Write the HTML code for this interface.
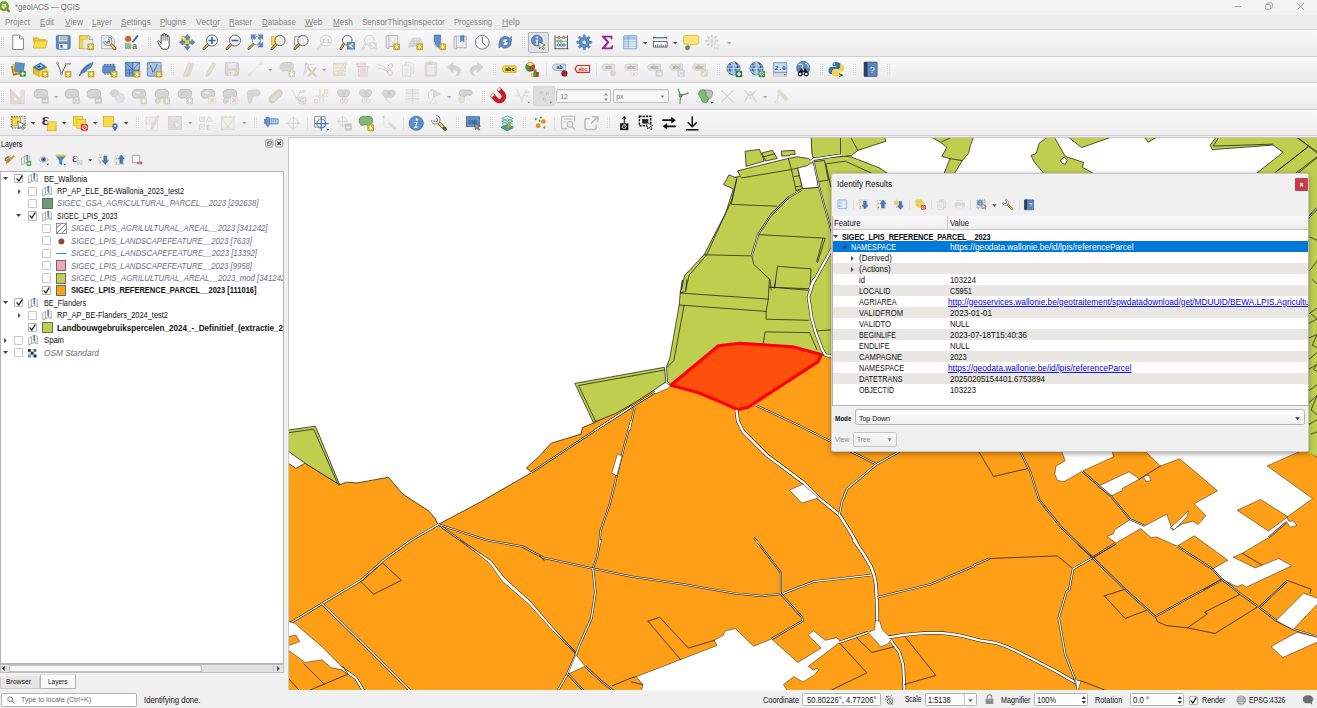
<!DOCTYPE html>
<html><head><meta charset="utf-8"><title>geoIACS — QGIS</title><style>html,body{margin:0;padding:0}body{width:1317px;height:708px;overflow:hidden;position:relative;font-family:"Liberation Sans", sans-serif;background:#f0f0f0}
body>div,body>svg,.t{position:absolute}svg{overflow:visible;display:block}
.t{white-space:pre;line-height:1;transform-origin:0 50%}.c{position:absolute;overflow:hidden;top:0;height:708px}.c .t{left:0!important}</style></head><body>
<div style="left:0px;top:0px;width:1317px;height:708px;background:#f0f0f0;"></div>
<div style="left:0px;top:0px;width:1317px;height:14.6px;background:#f3f3f3;"></div>
<div style="left:0px;top:14.6px;width:1317px;height:14.6px;background:#eeeeee;"></div>
<div style="left:0px;top:29.0px;width:1317px;height:0.7px;background:#d9d9d9;"></div>
<div style="left:0px;top:29.7px;width:1317px;height:26px;background:#f2f2f2;background:linear-gradient(#f9f9f9,#f4f4f4 40%,#ebebeb);"></div>
<div style="left:0px;top:56.4px;width:1317px;height:26px;background:#f2f2f2;background:linear-gradient(#f9f9f9,#f4f4f4 40%,#ebebeb);"></div>
<div style="left:0px;top:82.9px;width:1317px;height:26px;background:#f2f2f2;background:linear-gradient(#f9f9f9,#f4f4f4 40%,#ebebeb);"></div>
<div style="left:0px;top:109.5px;width:1317px;height:26px;background:#f2f2f2;background:linear-gradient(#f9f9f9,#f4f4f4 40%,#ebebeb);"></div>
<div style="left:0px;top:136px;width:1317px;height:1.4px;background:#efefef;"></div>
<svg style="left:-0.75px;top:1.45px" width="11.5" height="11.5" viewBox="0 0 24 24"><circle cx="10.500" cy="11" r="7.700" fill="#fdfdfd" stroke="#6aa32e" stroke-width="5.200"/><path d="M14 14.500l8 8" stroke="#5b962a" stroke-width="5"/><path d="M11 11.500l5.500 5.500" stroke="#86bd45" stroke-width="2.400"/><circle cx="9.600" cy="10" r="2.500" fill="#f39a1f"/><circle cx="11.600" cy="12.200" r="1.600" fill="#f3d23c"/></svg>
<span class="t" id="t10" style="left:14.6px;top:7.4px;font-size:8.6px;font-weight:normal;font-style:normal;color:#767676;transform:translateY(-50%) scaleX(0.8952);">*geoIACS — QGIS</span>
<svg style="left:1230px;top:0px;" width="80" height="14" viewBox="0 0 80 14"><path d="M4.500 6.600h7" stroke="#8a8a8a" stroke-width="0.800" fill="none"/><rect x="35.500" y="4.300" width="5" height="5" rx="1.100" fill="none" stroke="#8a8a8a" stroke-width="0.800"/><path d="M37.200 4.300v-0.600c0-.500.300-.800.800-.800h3.600c.500 0 .800.300.800.800v3.600c0 .500-.300.800-.800.800h-0.900" fill="none" stroke="#8a8a8a" stroke-width="0.700"/><path d="M67.300 3.300l6.400 6.400m0-6.400l-6.400 6.400" stroke="#8a8a8a" stroke-width="0.800" fill="none"/></svg>
<span class="t" id="t12" style="left:5px;top:22.1px;font-size:8.4px;font-weight:normal;font-style:normal;color:#858585;transform:translateY(-50%) scaleX(0.9575);">Pro<u>j</u>ect</span>
<span class="t" id="t13" style="left:40px;top:22.1px;font-size:8.4px;font-weight:normal;font-style:normal;color:#858585;transform:translateY(-50%) scaleX(0.9686);"><u>E</u>dit</span>
<span class="t" id="t14" style="left:64.5px;top:22.1px;font-size:8.4px;font-weight:normal;font-style:normal;color:#858585;transform:translateY(-50%) scaleX(0.9991);"><u>V</u>iew</span>
<span class="t" id="t15" style="left:91.5px;top:22.1px;font-size:8.4px;font-weight:normal;font-style:normal;color:#858585;transform:translateY(-50%) scaleX(0.9443);"><u>L</u>ayer</span>
<span class="t" id="t16" style="left:120.5px;top:22.1px;font-size:8.4px;font-weight:normal;font-style:normal;color:#858585;transform:translateY(-50%) scaleX(0.9841);"><u>S</u>ettings</span>
<span class="t" id="t17" style="left:160px;top:22.1px;font-size:8.4px;font-weight:normal;font-style:normal;color:#858585;transform:translateY(-50%) scaleX(0.9460);"><u>P</u>lugins</span>
<span class="t" id="t18" style="left:196px;top:22.1px;font-size:8.4px;font-weight:normal;font-style:normal;color:#858585;transform:translateY(-50%) scaleX(1.0099);">Vect<u>o</u>r</span>
<span class="t" id="t19" style="left:229px;top:22.1px;font-size:8.4px;font-weight:normal;font-style:normal;color:#858585;transform:translateY(-50%) scaleX(0.9316);"><u>R</u>aster</span>
<span class="t" id="t20" style="left:261.8px;top:22.1px;font-size:8.4px;font-weight:normal;font-style:normal;color:#858585;transform:translateY(-50%) scaleX(0.9477);"><u>D</u>atabase</span>
<span class="t" id="t21" style="left:305.3px;top:22.1px;font-size:8.4px;font-weight:normal;font-style:normal;color:#858585;transform:translateY(-50%) scaleX(1.0355);"><u>W</u>eb</span>
<span class="t" id="t22" style="left:332.5px;top:22.1px;font-size:8.4px;font-weight:normal;font-style:normal;color:#858585;transform:translateY(-50%) scaleX(0.9659);"><u>M</u>esh</span>
<span class="t" id="t23" style="left:361.5px;top:22.1px;font-size:8.4px;font-weight:normal;font-style:normal;color:#858585;transform:translateY(-50%) scaleX(0.9614);">SensorThingsInspector</span>
<span class="t" id="t24" style="left:454px;top:22.1px;font-size:8.4px;font-weight:normal;font-style:normal;color:#858585;transform:translateY(-50%) scaleX(0.9167);">Pro<u>c</u>essing</span>
<span class="t" id="t25" style="left:502.3px;top:22.1px;font-size:8.4px;font-weight:normal;font-style:normal;color:#858585;transform:translateY(-50%) scaleX(1.0261);"><u>H</u>elp</span>
<div style="left:0px;top:55.7px;width:1317px;height:0.8px;background:#cdcdcd;"></div>
<div style="left:0px;top:82.2px;width:1317px;height:0.8px;background:#cdcdcd;"></div>
<div style="left:0px;top:108.8px;width:1317px;height:0.8px;background:#cdcdcd;"></div>
<div style="left:0px;top:135.2px;width:1317px;height:0.8px;background:#cdcdcd;"></div>
<svg style="left:1px;top:37px;" width="4" height="12" viewBox="0 0 4 12"><rect x="0" y="0" width="1" height="1" fill="#d5d5d5"/><rect x="0" y="2" width="1" height="1" fill="#d5d5d5"/><rect x="0" y="4" width="1" height="1" fill="#d5d5d5"/><rect x="0" y="6" width="1" height="1" fill="#d5d5d5"/><rect x="0" y="8" width="1" height="1" fill="#d5d5d5"/><rect x="0" y="10" width="1" height="1" fill="#d5d5d5"/><rect x="2" y="0" width="1" height="1" fill="#d5d5d5"/><rect x="2" y="2" width="1" height="1" fill="#d5d5d5"/><rect x="2" y="4" width="1" height="1" fill="#d5d5d5"/><rect x="2" y="6" width="1" height="1" fill="#d5d5d5"/><rect x="2" y="8" width="1" height="1" fill="#d5d5d5"/><rect x="2" y="10" width="1" height="1" fill="#d5d5d5"/></svg>
<svg style="left:9.65px;top:34.45px" width="16.5" height="16.5" viewBox="0 0 24 24"><path d="M4 1.5h10l5.5 5.500v15.500h-15.500z" fill="#fff" stroke="#6e6e6e" stroke-width="1.2" stroke-linejoin="round"/><path d="M14 1.5v5.5h5.5" fill="#e8e8e8" stroke="#6e6e6e" stroke-width="1.1" stroke-linejoin="round"/></svg>
<svg style="left:31.95px;top:34.45px" width="16.5" height="16.5" viewBox="0 0 24 24"><path d="M2 5.5h7l2 2.5h9v3h-18z" fill="#e9c63a" stroke="#c8a415" stroke-width="0.9" stroke-linejoin="round"/><path d="M1.5 20.5l3-10.5h18l-3.2 10.5z" fill="#f7dc4a" stroke="#c8a415" stroke-width="0.9" stroke-linejoin="round"/></svg>
<svg style="left:54.75px;top:34.45px" width="16.5" height="16.5" viewBox="0 0 24 24"><rect x="2" y="2" width="20" height="20" rx="2" fill="#5d8fca" stroke="#33609c" stroke-width="1"/><rect x="5.5" y="3" width="13" height="8" fill="#d9d9d9" stroke="#8d8d8d" stroke-width="0.6"/><path d="M7 5.5h10M7 8h10" stroke="#8d8d8d" stroke-width="0.9"/><rect x="6" y="14.5" width="12" height="7" fill="#eef1f5"/><rect x="8" y="16" width="3" height="4" fill="#33609c"/></svg>
<svg style="left:77.55px;top:34.45px" width="16.5" height="16.5" viewBox="0 0 24 24"><path d="M2 2.500h14l5.500 5.500v13.500h-19.500z" fill="#fdfdfd" stroke="#8a8a8a" stroke-width="1" stroke-linejoin="round"/><rect x="8" y="8" width="11" height="12" fill="#dfe9f8"/><path d="M16 2.500v5.500h5.500" fill="#e4e4e4" stroke="#8a8a8a" stroke-width="0.900"/><rect x="2.500" y="3" width="4.800" height="18" fill="#f7dc4a" stroke="#c8a415" stroke-width="0.600"/><rect x="2.500" y="3" width="11.500" height="4.800" fill="#f7dc4a" stroke="#c8a415" stroke-width="0.600"/><path d="M3.500 10h2M3.500 13h2M3.500 16h2M3.500 19h2" stroke="#c8a415" stroke-width="0.600"/><rect x="13.7" y="13.9" width="9.6" height="9.6" rx="1.7" fill="#c9a20c"/><path d="M18.5 15.399999999999999v6.6M15.7 16.8l5.6 3.8M21.3 16.8l-5.6 3.8" stroke="#fff" stroke-width="1.15" stroke-linecap="round"/><circle cx="18.5" cy="18.7" r="1.3" fill="#fff"/></svg>
<svg style="left:100.35px;top:34.45px" width="16.5" height="16.5" viewBox="0 0 24 24"><path d="M2.500 2.500h13l5.500 5.500v13.500h-18.500z" fill="#fbfbfb" stroke="#8a8a8a" stroke-width="1" stroke-linejoin="round"/><rect x="4.500" y="4.500" width="12" height="13" fill="#dfe9f8" stroke="#b4c8e6" stroke-width="0.600"/><path d="M13 12L21.500 21" stroke="#4a3a12" stroke-width="4.600" stroke-linecap="round"/><path d="M13 12L21.500 21" stroke="#e8c55a" stroke-width="3" stroke-linecap="round"/><g transform="translate(4.500 3.500)"><path d="M7.390 2.520A4.500 4.500 0 1 1 2.520 7.390" fill="none" stroke="#4a4a4a" stroke-width="3.800"/><path d="M7.390 2.520A4.500 4.500 0 1 1 2.520 7.390" fill="none" stroke="#e2e2e2" stroke-width="2.400"/></g></svg>
<svg style="left:122.65px;top:34.45px" width="16.5" height="16.5" viewBox="0 0 24 24"><circle cx="7.500" cy="7" r="4.600" fill="#d5623b"/><rect x="3" y="13.500" width="9" height="8.500" fill="#8db98b"/><path d="M14.500 11l6.500-8" stroke="#3d6fae" stroke-width="2.800" stroke-linecap="round"/><text x="13.500" y="22.300" font-family="Liberation Sans,sans-serif" font-size="12.500" fill="#444">a</text></svg>
<svg style="left:148px;top:37px;" width="4" height="12" viewBox="0 0 4 12"><rect x="0" y="0" width="1" height="1" fill="#d5d5d5"/><rect x="0" y="2" width="1" height="1" fill="#d5d5d5"/><rect x="0" y="4" width="1" height="1" fill="#d5d5d5"/><rect x="0" y="6" width="1" height="1" fill="#d5d5d5"/><rect x="0" y="8" width="1" height="1" fill="#d5d5d5"/><rect x="0" y="10" width="1" height="1" fill="#d5d5d5"/><rect x="2" y="0" width="1" height="1" fill="#d5d5d5"/><rect x="2" y="2" width="1" height="1" fill="#d5d5d5"/><rect x="2" y="4" width="1" height="1" fill="#d5d5d5"/><rect x="2" y="6" width="1" height="1" fill="#d5d5d5"/><rect x="2" y="8" width="1" height="1" fill="#d5d5d5"/><rect x="2" y="10" width="1" height="1" fill="#d5d5d5"/></svg>
<svg style="left:156.95px;top:34.45px" width="16.5" height="16.5" viewBox="0 0 24 24"><g transform="translate(-2.5 -3.5) scale(1.22)"><path d="M8.5 21c-2-2.500-4.500-6-5.500-8.500-.500-1.500 1-2.300 2-1l2 2.500v-9c0-1.800 2.400-1.800 2.400 0v-1.500c0-1.800 2.400-1.800 2.400 0v1c0-1.700 2.400-1.700 2.400 0v1.500c0-1.600 2.300-1.600 2.300 0v9.500c0 2.500-1 4-2 5.500z" fill="#fff" stroke="#222" stroke-width="0.95" stroke-linejoin="round"/><path d="M9.400 5v6M11.800 4v7M14.200 5v6" stroke="#222" stroke-width="0.700"/></g></svg>
<svg style="left:179.25px;top:34.45px" width="16.5" height="16.5" viewBox="0 0 24 24"><rect x="4" y="3.500" width="12" height="12" fill="#f7dc4a" stroke="#c8a415" stroke-width="0.800"/><path d="M12 0.500l4 5h-2.500v3.500h-3v-3.500h-2.500zM12 23.500l4-5h-2.500v-3.500h-3v3.500h-2.500zM0.500 12l5-4v2.500h3.500v3h-3.500v2.500zM23.500 12l-5-4v2.500h-3.500v3h3.500v2.500z" fill="#5d8fca" stroke="#33609c" stroke-width="0.700"/><rect x="9.500" y="9.500" width="5" height="5" fill="#e8d04a"/></svg>
<svg style="left:201.95px;top:34.45px" width="16.5" height="16.5" viewBox="0 0 24 24"><path d="M8.9 15.1L2.5 21.5" stroke="#444" stroke-width="3.6" stroke-linecap="round"/><path d="M8.6 15.4L2.8 21.2" stroke="#d9a92b" stroke-width="2" stroke-linecap="round"/><circle cx="14.5" cy="9.5" r="8" fill="#f4f4f4" stroke="#555" stroke-width="1.3"/><path d="M14.5 4.500v10M9.500 9.5h10" stroke="#33609c" stroke-width="2.300"/></svg>
<svg style="left:224.75px;top:34.45px" width="16.5" height="16.5" viewBox="0 0 24 24"><path d="M8.9 15.1L2.5 21.5" stroke="#444" stroke-width="3.6" stroke-linecap="round"/><path d="M8.6 15.4L2.8 21.2" stroke="#d9a92b" stroke-width="2" stroke-linecap="round"/><circle cx="14.5" cy="9.5" r="8" fill="#f4f4f4" stroke="#555" stroke-width="1.3"/><path d="M9.500 9.5h10" stroke="#33609c" stroke-width="2.300"/></svg>
<svg style="left:247.45px;top:34.45px" width="16.5" height="16.5" viewBox="0 0 24 24"><path d="M9.500 14.500L2.500 21.500" stroke="#444" stroke-width="3.4" stroke-linecap="round"/><path d="M9.300 14.700L2.800 21.200" stroke="#d9a92b" stroke-width="1.900" stroke-linecap="round"/><circle cx="14" cy="10" r="6" fill="#f1f1f1" stroke="#666" stroke-width="1"/><path d="M6 1h7l-2.500 2.500 2.500 2.500-2 2-2.500-2.500-2.500 2.500zM23 1v7l-2.500-2.500-2.500 2.500-2-2 2.500-2.500-2.500-2.500zM23 19h-7l2.500-2.500-2.500-2.500 2-2 2.500 2.500 2.500-2.500z" fill="#5d8fca" stroke="#33609c" stroke-width="0.600"/></svg>
<svg style="left:270.25px;top:34.45px" width="16.5" height="16.5" viewBox="0 0 24 24"><rect x="2" y="4" width="10" height="12" fill="#f7dc4a" stroke="#c8a415" stroke-width="0.800"/><path d="M9.25 14.75L2.5 21.5" stroke="#444" stroke-width="3.6" stroke-linecap="round"/><path d="M8.95 15.05L2.8 21.2" stroke="#d9a92b" stroke-width="2" stroke-linecap="round"/><circle cx="14.5" cy="9.5" r="7.5" fill="#f3f1e4" stroke="#555" stroke-width="1.3"/><path d="M14.500 2v15" stroke="#d8d4bd" stroke-width="1"/></svg>
<svg style="left:293.05px;top:34.45px" width="16.5" height="16.5" viewBox="0 0 24 24"><rect x="2.500" y="4" width="9" height="12" fill="#f2f2f2" stroke="#777" stroke-width="1"/><path d="M9.25 14.75L2.5 21.5" stroke="#444" stroke-width="3.6" stroke-linecap="round"/><path d="M8.95 15.05L2.8 21.2" stroke="#d9a92b" stroke-width="2" stroke-linecap="round"/><circle cx="14.5" cy="9.5" r="7.5" fill="#f1f1f1" stroke="#555" stroke-width="1.3"/><path d="M14.500 2v15" stroke="#d0d0d0" stroke-width="1"/></svg>
<svg style="left:315.55px;top:34.45px" width="16.5" height="16.5" viewBox="0 0 24 24"><path d="M8.9 15.1L2.5 21.5" stroke="#d4d4d4" stroke-width="3.6" stroke-linecap="round"/><path d="M8.6 15.4L2.8 21.2" stroke="#e2e2e2" stroke-width="2" stroke-linecap="round"/><circle cx="14.5" cy="9.5" r="8" fill="#f2f2f2" stroke="#cfcfcf" stroke-width="1.3"/><text x="14.5" y="12.7" font-family="Liberation Sans,sans-serif" font-size="9" text-anchor="middle" fill="#bdbdbd">1:1</text></svg>
<svg style="left:338.65px;top:34.45px" width="16.5" height="16.5" viewBox="0 0 24 24"><path d="M7.1000000000000005 13.899999999999999L2.5 21.5" stroke="#444" stroke-width="3.6" stroke-linecap="round"/><path d="M6.800000000000001 14.2L2.8 21.2" stroke="#d9a92b" stroke-width="2" stroke-linecap="round"/><circle cx="12" cy="9" r="7" fill="#f4f4f4" stroke="#555" stroke-width="1.3"/><rect x="12" y="12" width="11" height="10" fill="#5d8fca" stroke="#33609c" stroke-width="0.600"/><path d="M20.500 14l-5 3 5 3" stroke="#fff" stroke-width="1.800" fill="none"/></svg>
<svg style="left:361.35px;top:34.45px" width="16.5" height="16.5" viewBox="0 0 24 24"><path d="M7.1000000000000005 13.899999999999999L2.5 21.5" stroke="#d4d4d4" stroke-width="3.6" stroke-linecap="round"/><path d="M6.800000000000001 14.2L2.8 21.2" stroke="#e2e2e2" stroke-width="2" stroke-linecap="round"/><circle cx="12" cy="9" r="7" fill="#f2f2f2" stroke="#cfcfcf" stroke-width="1.3"/><rect x="12" y="12" width="11" height="10" fill="#d9d9d9"/><path d="M14.500 14l5 3-5 3" stroke="#f4f4f4" stroke-width="1.800" fill="none"/></svg>
<svg style="left:383.85px;top:34.45px" width="16.5" height="16.5" viewBox="0 0 24 24"><path d="M5 2h15v16h-13v3c-2.500.500-4-.500-4-2v-15c0-1.200 1-2 2-2z" fill="#ececec" stroke="#9a9a9a" stroke-width="1"/><path d="M7 18v-14c0-1-.800-2-2-2" fill="none" stroke="#9a9a9a" stroke-width="0.900"/><rect x="13.7" y="13.9" width="9.6" height="9.6" rx="1.7" fill="#c9a20c"/><path d="M18.5 15.399999999999999v6.6M15.7 16.8l5.6 3.8M21.3 16.8l-5.6 3.8" stroke="#fff" stroke-width="1.15" stroke-linecap="round"/><circle cx="18.5" cy="18.7" r="1.3" fill="#fff"/></svg>
<svg style="left:406.65px;top:34.45px" width="16.5" height="16.5" viewBox="0 0 24 24"><path d="M2 17l6-11h11l4 8z" fill="#e4e4e4" stroke="#bdbdbd" stroke-width="0.800"/><path d="M2 17l21-3v2.500l-21 3.500z" fill="#cfcfcf"/><path d="M5 14l5-7M9 15l3-8M14 14.500v-7.500M18 14l-2-7M4 14.500l17-2M6 11l14-1.200" stroke="#bdbdbd" stroke-width="0.700"/><rect x="13.7" y="13.9" width="9.6" height="9.6" rx="1.7" fill="#c9a20c"/><path d="M18.5 15.399999999999999v6.6M15.7 16.8l5.6 3.8M21.3 16.8l-5.6 3.8" stroke="#fff" stroke-width="1.15" stroke-linecap="round"/><circle cx="18.5" cy="18.7" r="1.3" fill="#fff"/></svg>
<svg style="left:430.05px;top:34.45px" width="16.5" height="16.5" viewBox="0 0 24 24"><path d="M6 1.500h9.500v20c-3 0-5.500-1.200-7-3-1.800-2-2.500-4-2.500-7z" fill="#5d8fca" stroke="#33609c" stroke-width="0.800"/><path d="M6 11.500c0 5 3.500 10 9.500 10" fill="none" stroke="#d6d6d6" stroke-width="2"/><rect x="13.7" y="13.9" width="9.6" height="9.6" rx="1.7" fill="#c9a20c"/><path d="M18.5 15.399999999999999v6.6M15.7 16.8l5.6 3.8M21.3 16.8l-5.6 3.8" stroke="#fff" stroke-width="1.15" stroke-linecap="round"/><circle cx="18.5" cy="18.7" r="1.3" fill="#fff"/></svg>
<svg style="left:451.95px;top:34.45px" width="16.5" height="16.5" viewBox="0 0 24 24"><path d="M4.500 3h16v17h-14v2c-2 .300-3.500-.500-3.500-1.800v-15.500c0-1 .700-1.700 1.500-1.700z" fill="#ececec" stroke="#9a9a9a" stroke-width="1"/><path d="M6.500 20v-15.500c0-.800-.700-1.500-1.700-1.500" fill="none" stroke="#9a9a9a" stroke-width="0.900"/><path d="M12.500 2.500h5v9l-2.500-2.500-2.500 2.500z" fill="#5d8fca" stroke="#33609c" stroke-width="0.600"/></svg>
<svg style="left:474.25px;top:34.45px" width="16.5" height="16.5" viewBox="0 0 24 24"><circle cx="12" cy="12" r="10" fill="#fbfbfb" stroke="#6f6f6f" stroke-width="1.300"/><path d="M12 5v7.500l4.500 3.500" stroke="#555" stroke-width="1.400" fill="none" stroke-linecap="round"/><path d="M12 3v1.500M12 19.500v1.500M3 12h1.500M19.500 12h1.500M5.700 5.700l1 1M17.300 17.300l1 1M5.700 18.300l1-1M17.300 6.700l1-1" stroke="#6f93c4" stroke-width="1"/></svg>
<svg style="left:497.05px;top:34.45px" width="16.5" height="16.5" viewBox="0 0 24 24"><path d="M3.500 11.500a8.500 8.500 0 0 1 14.800-5.300l2.700-2.700v8h-8l2.800-2.800a4.800 4.800 0 0 0-8.300 2.800z" fill="#5d8fca" stroke="#33609c" stroke-width="0.800" stroke-linejoin="round"/><path d="M20.500 12.500a8.500 8.500 0 0 1-14.800 5.300l-2.700 2.700v-8h8l-2.800 2.800a4.800 4.800 0 0 0 8.300-2.800z" fill="#5d8fca" stroke="#33609c" stroke-width="0.800" stroke-linejoin="round"/></svg>
<svg style="left:522px;top:37px;" width="4" height="12" viewBox="0 0 4 12"><rect x="0" y="0" width="1" height="1" fill="#d5d5d5"/><rect x="0" y="2" width="1" height="1" fill="#d5d5d5"/><rect x="0" y="4" width="1" height="1" fill="#d5d5d5"/><rect x="0" y="6" width="1" height="1" fill="#d5d5d5"/><rect x="0" y="8" width="1" height="1" fill="#d5d5d5"/><rect x="0" y="10" width="1" height="1" fill="#d5d5d5"/><rect x="2" y="0" width="1" height="1" fill="#d5d5d5"/><rect x="2" y="2" width="1" height="1" fill="#d5d5d5"/><rect x="2" y="4" width="1" height="1" fill="#d5d5d5"/><rect x="2" y="6" width="1" height="1" fill="#d5d5d5"/><rect x="2" y="8" width="1" height="1" fill="#d5d5d5"/><rect x="2" y="10" width="1" height="1" fill="#d5d5d5"/></svg>
<svg style="left:553.25px;top:34.45px" width="16.5" height="16.5" viewBox="0 0 24 24"><path d="M3 2v19M21 2v19M2 21.500h20" stroke="#555" stroke-width="1.500"/><path d="M3 5h18M3 10.500h18M3 16h18" stroke="#777" stroke-width="0.800"/><g fill="none" stroke-width="1.200"><circle cx="8.500" cy="5" r="1.700" stroke="#d23a3a"/><circle cx="15.500" cy="5" r="1.700" stroke="#d23a3a"/><circle cx="7.500" cy="10.500" r="1.700" stroke="#4ea04e"/><circle cx="11.500" cy="10.500" r="1.700" stroke="#4ea04e"/><circle cx="8" cy="16" r="1.700" stroke="#3b78c0"/><circle cx="12" cy="16" r="1.700" stroke="#3b78c0"/><circle cx="16" cy="16" r="1.700" stroke="#3b78c0"/></g></svg>
<svg style="left:576.05px;top:34.45px" width="16.5" height="16.5" viewBox="0 0 24 24"><rect x="10.300" y="1" width="3.400" height="5" rx="0.600" fill="#5d8fca" stroke="#33609c" stroke-width="0.500" transform="rotate(0 12 12)"/><rect x="10.300" y="1" width="3.400" height="5" rx="0.600" fill="#5d8fca" stroke="#33609c" stroke-width="0.500" transform="rotate(45 12 12)"/><rect x="10.300" y="1" width="3.400" height="5" rx="0.600" fill="#5d8fca" stroke="#33609c" stroke-width="0.500" transform="rotate(90 12 12)"/><rect x="10.300" y="1" width="3.400" height="5" rx="0.600" fill="#5d8fca" stroke="#33609c" stroke-width="0.500" transform="rotate(135 12 12)"/><rect x="10.300" y="1" width="3.400" height="5" rx="0.600" fill="#5d8fca" stroke="#33609c" stroke-width="0.500" transform="rotate(180 12 12)"/><rect x="10.300" y="1" width="3.400" height="5" rx="0.600" fill="#5d8fca" stroke="#33609c" stroke-width="0.500" transform="rotate(225 12 12)"/><rect x="10.300" y="1" width="3.400" height="5" rx="0.600" fill="#5d8fca" stroke="#33609c" stroke-width="0.500" transform="rotate(270 12 12)"/><rect x="10.300" y="1" width="3.400" height="5" rx="0.600" fill="#5d8fca" stroke="#33609c" stroke-width="0.500" transform="rotate(315 12 12)"/><circle cx="12" cy="12" r="5.300" fill="none" stroke="#33609c" stroke-width="4.800"/><circle cx="12" cy="12" r="5.300" fill="none" stroke="#5d8fca" stroke-width="3.800"/></svg>
<svg style="left:598.75px;top:34.45px" width="16.5" height="16.5" viewBox="0 0 24 24"><path d="M4 2.500h15.500v5h-1.800c-.200-1.800-1-2.500-3-2.500h-5.500l6 7-6.500 7.500h6.500c2 0 3-.800 3.500-3h1.800l-.700 5.500h-15.800v-1.500l7.500-8.500-7.500-8z" fill="#9a1e96"/></svg>
<svg style="left:621.65px;top:34.45px" width="16.5" height="16.5" viewBox="0 0 24 24"><rect x="2.500" y="2.500" width="19" height="19" rx="1" fill="#dbe8f7" stroke="#5d8fca" stroke-width="1.100"/><rect x="3" y="3" width="18" height="4.500" fill="#a9c6ea"/><path d="M9 3v18M3 7.500h18M3 11h18M3 14.500h18M3 18h18" stroke="#5d8fca" stroke-width="0.700"/><path d="M11 9.200h8M11 12.700h8M11 16.200h8M11 19.700h8" stroke="#f6f9fd" stroke-width="1.200"/></svg>
<svg style="left:642.5px;top:42.1px;" width="4.4" height="2.6" viewBox="0 0 4.4 2.6"><path d="M0 0h4.4L2.2 2.4z" fill="#4a4a4a"/></svg>
<svg style="left:652.25px;top:34.45px" width="16.5" height="16.5" viewBox="0 0 24 24"><rect x="2" y="11" width="20" height="8" fill="#fafafa" stroke="#555" stroke-width="1.200"/><path d="M5 19v-3M8 19v-4M11 19v-3M14 19v-4M17 19v-3M20 19v-4" stroke="#444" stroke-width="1"/><path d="M2.500 5.500h19" stroke="#2f5f9c" stroke-width="1.600"/><path d="M2.500 3.500v4M21.500 3.500v4" stroke="#2f5f9c" stroke-width="1.200"/></svg>
<svg style="left:673.1999999999999px;top:42.1px;" width="4.4" height="2.6" viewBox="0 0 4.4 2.6"><path d="M0 0h4.4L2.2 2.4z" fill="#4a4a4a"/></svg>
<svg style="left:683.15px;top:34.45px" width="16.5" height="16.5" viewBox="0 0 24 24"><path d="M4 2h16c1.700 0 3 1.300 3 3v7c0 1.700-1.300 3-3 3h-8l-4 4.500v-4.500h-4c-1.700 0-3-1.300-3-3v-7c0-1.700 1.300-3 3-3z" fill="#f8e678" stroke="#c9a91a" stroke-width="1"/><circle cx="6.500" cy="20" r="3" fill="#5e9b5e" stroke="#3d6e3d" stroke-width="0.800"/></svg>
<svg style="left:705.15px;top:34.45px" width="16.5" height="16.5" viewBox="0 0 24 24"><circle cx="10" cy="10" r="5.500" fill="#e6e6e6" stroke="#d0d0d0" stroke-width="1"/><g stroke="#d0d0d0" stroke-width="2.600" stroke-linecap="round"><path d="M10 1.500v17M1.500 10h17M4 4l12 12M16 4L4 16"/></g><circle cx="10" cy="10" r="5.500" fill="#e9e9e9"/><path d="M8.500 7l4.500 3-4.500 3z" fill="#d0d0d0"/><path d="M13 13l8.500 4-3.500 1.200 2.500 3.600-1.500 1-2.500-3.600-2.300 2.700z" fill="#efefef" stroke="#cfcfcf" stroke-width="0.800"/></svg>
<svg style="left:727.0999999999999px;top:42.1px;" width="4.4" height="2.6" viewBox="0 0 4.4 2.6"><path d="M0 0h4.4L2.2 2.4z" fill="#a8a8a8"/></svg>
<svg style="left:1px;top:64px;" width="4" height="12" viewBox="0 0 4 12"><rect x="0" y="0" width="1" height="1" fill="#d5d5d5"/><rect x="0" y="2" width="1" height="1" fill="#d5d5d5"/><rect x="0" y="4" width="1" height="1" fill="#d5d5d5"/><rect x="0" y="6" width="1" height="1" fill="#d5d5d5"/><rect x="0" y="8" width="1" height="1" fill="#d5d5d5"/><rect x="0" y="10" width="1" height="1" fill="#d5d5d5"/><rect x="2" y="0" width="1" height="1" fill="#d5d5d5"/><rect x="2" y="2" width="1" height="1" fill="#d5d5d5"/><rect x="2" y="4" width="1" height="1" fill="#d5d5d5"/><rect x="2" y="6" width="1" height="1" fill="#d5d5d5"/><rect x="2" y="8" width="1" height="1" fill="#d5d5d5"/><rect x="2" y="10" width="1" height="1" fill="#d5d5d5"/></svg>
<svg style="left:9.65px;top:60.95px" width="16.5" height="16.5" viewBox="0 0 24 24"><path d="M2 8l12-3 3 13-12 3z" fill="#d9653a" stroke="#a8431d" stroke-width="0.700"/><path d="M4 5l13-1.500 1.500 13-13 1.500z" fill="#f7dc4a" stroke="#c8a415" stroke-width="0.700"/><path d="M8 2l13 1.500-1.500 13-13-1.500z" fill="#5d8fca" stroke="#33609c" stroke-width="0.700"/><rect x="14" y="14" width="9" height="9" rx="1.500" fill="#3f9a4a"/><path d="M18.500 15.800v5.400M15.800 18.500h5.400" stroke="#fff" stroke-width="1.800"/></svg>
<svg style="left:31.95px;top:60.95px" width="16.5" height="16.5" viewBox="0 0 24 24"><path d="M1.500 9l9 5v9l-9-5z" fill="#e2bd2c" stroke="#c8a415" stroke-width="0.600"/><path d="M10.500 14l11-5v9l-11 5z" fill="#f7dc4a" stroke="#c8a415" stroke-width="0.600"/><path d="M1.500 9l11-6.500 9 6.500-11 5z" fill="#3f6fae" stroke="#33609c" stroke-width="0.600"/><path d="M5 8.500l7-4 5 3.500-7 3.500z" fill="#9cc0ea"/><path d="M7 8l4-2 3 2-4 2z" fill="#2c5288"/><rect x="14.2" y="14.4" width="9.6" height="9.6" rx="1.7" fill="#c9a20c"/><path d="M19.0 15.899999999999999v6.6M16.2 17.3l5.6 3.8M21.8 17.3l-5.6 3.8" stroke="#fff" stroke-width="1.15" stroke-linecap="round"/><circle cx="19.0" cy="19.2" r="1.3" fill="#fff"/></svg>
<svg style="left:54.75px;top:60.95px" width="16.5" height="16.5" viewBox="0 0 24 24"><path d="M3.500 3l6 15.500 6.500-13.500" fill="none" stroke="#333" stroke-width="1.100"/><circle cx="3.500" cy="3" r="1.500" fill="#f2f2f2" stroke="#444" stroke-width="0.700"/><circle cx="9.500" cy="18.500" r="1.500" fill="#f2f2f2" stroke="#444" stroke-width="0.700"/><circle cx="16" cy="4.500" r="1.500" fill="#f2f2f2" stroke="#444" stroke-width="0.700"/><path d="M17.500 4h3" stroke="#444" stroke-width="0.800"/><circle cx="21.500" cy="4" r="1.200" fill="#f2f2f2" stroke="#444" stroke-width="0.700"/><rect x="14.2" y="14.4" width="9.6" height="9.6" rx="1.7" fill="#c9a20c"/><path d="M19.0 15.899999999999999v6.6M16.2 17.3l5.6 3.8M21.8 17.3l-5.6 3.8" stroke="#fff" stroke-width="1.15" stroke-linecap="round"/><circle cx="19.0" cy="19.2" r="1.3" fill="#fff"/></svg>
<svg style="left:77.55px;top:60.95px" width="16.5" height="16.5" viewBox="0 0 24 24"><path d="M2 22c2-9 8-17 20-20-1 5-4 8-7 10l-3-.500 1 2.500c-3 2.500-7 4-9.500 5z" fill="#5d8fca" stroke="#33609c" stroke-width="0.800" stroke-linejoin="round"/><path d="M2 22c3-7 9-14 17-18" fill="none" stroke="#2c5288" stroke-width="0.800"/><rect x="14.2" y="14.4" width="9.6" height="9.6" rx="1.7" fill="#c9a20c"/><path d="M19.0 15.899999999999999v6.6M16.2 17.3l5.6 3.8M21.8 17.3l-5.6 3.8" stroke="#fff" stroke-width="1.15" stroke-linecap="round"/><circle cx="19.0" cy="19.2" r="1.3" fill="#fff"/></svg>
<svg style="left:100.75px;top:60.95px" width="16.5" height="16.5" viewBox="0 0 24 24"><rect x="2.500" y="7" width="18" height="10.500" rx="1.200" fill="#5d8fca" stroke="#33609c" stroke-width="0.900"/><path d="M6 7v-2.800M10 7v-2.800M14 7v-2.800M18 7v-2.800M6 17.500v2.800M10 17.500v2.800M14 17.500v2.800" stroke="#33609c" stroke-width="1.400"/><path d="M4 5h16" stroke="#33609c" stroke-width="0.800"/><rect x="14.2" y="14.4" width="9.6" height="9.6" rx="1.7" fill="#c9a20c"/><path d="M19.0 15.899999999999999v6.6M16.2 17.3l5.6 3.8M21.8 17.3l-5.6 3.8" stroke="#fff" stroke-width="1.15" stroke-linecap="round"/><circle cx="19.0" cy="19.2" r="1.3" fill="#fff"/></svg>
<svg style="left:123.55px;top:60.95px" width="16.5" height="16.5" viewBox="0 0 24 24"><rect x="2" y="2" width="20" height="20" fill="#7da6d8" stroke="#33609c" stroke-width="1"/><path d="M2 13h20M13 2v20M2 2l11 11M13 2l9 0-9 11M8 13v9M2 17.500h11" stroke="#33609c" stroke-width="0.900" fill="none"/><path d="M13 2h9v11h-9z" fill="#a8c4e8" stroke="#33609c" stroke-width="0.900"/><path d="M22 2l-9 11" stroke="#33609c" stroke-width="0.900"/><rect x="14.2" y="14.4" width="9.6" height="9.6" rx="1.7" fill="#c9a20c"/><path d="M19.0 15.899999999999999v6.6M16.2 17.3l5.6 3.8M21.8 17.3l-5.6 3.8" stroke="#fff" stroke-width="1.15" stroke-linecap="round"/><circle cx="19.0" cy="19.2" r="1.3" fill="#fff"/></svg>
<svg style="left:145.85px;top:60.95px" width="16.5" height="16.5" viewBox="0 0 24 24"><rect x="2" y="2" width="20" height="20" rx="1.500" fill="#a9c4e6" stroke="#33609c" stroke-width="1"/><path d="M5 3.500l5.500 14 6-13.500" fill="none" stroke="#33527d" stroke-width="1.100"/><path d="M2.500 9c3-4 5-5 6.500-3M16 3c2 2 4 2 5.500 1.500" stroke="#dfe9f6" stroke-width="0.900" fill="none"/><circle cx="10.500" cy="17.500" r="1.600" fill="#fff" stroke="#33527d" stroke-width="0.700"/><rect x="14.2" y="14.4" width="9.6" height="9.6" rx="1.7" fill="#c9a20c"/><path d="M19.0 15.899999999999999v6.6M16.2 17.3l5.6 3.8M21.8 17.3l-5.6 3.8" stroke="#fff" stroke-width="1.15" stroke-linecap="round"/><circle cx="19.0" cy="19.2" r="1.3" fill="#fff"/></svg>
<svg style="left:171px;top:64px;" width="4" height="12" viewBox="0 0 4 12"><rect x="0" y="0" width="1" height="1" fill="#d5d5d5"/><rect x="0" y="2" width="1" height="1" fill="#d5d5d5"/><rect x="0" y="4" width="1" height="1" fill="#d5d5d5"/><rect x="0" y="6" width="1" height="1" fill="#d5d5d5"/><rect x="0" y="8" width="1" height="1" fill="#d5d5d5"/><rect x="0" y="10" width="1" height="1" fill="#d5d5d5"/><rect x="2" y="0" width="1" height="1" fill="#d5d5d5"/><rect x="2" y="2" width="1" height="1" fill="#d5d5d5"/><rect x="2" y="4" width="1" height="1" fill="#d5d5d5"/><rect x="2" y="6" width="1" height="1" fill="#d5d5d5"/><rect x="2" y="8" width="1" height="1" fill="#d5d5d5"/><rect x="2" y="10" width="1" height="1" fill="#d5d5d5"/></svg>
<svg style="left:179.25px;top:60.95px" width="16.5" height="16.5" viewBox="0 0 24 24"><path d="M14 2l4 1.500-7 17-4.500 2.500.5-4z" fill="#e3e0da" stroke="#d0cdc6" stroke-width="0.800"/><path d="M18 3l4 1.500-7 17-4.500 2 .500-3.500z" fill="#dcd9d3" stroke="#cfccc5" stroke-width="0.800"/></svg>
<svg style="left:201.95px;top:60.95px" width="16.5" height="16.5" viewBox="0 0 24 24"><path d="M16 2l4 2-9 16-5 3 1-5.500z" fill="#e3e0d8" stroke="#cdcac2" stroke-width="0.900" stroke-linejoin="round"/><path d="M7 17.500l4 2.500" stroke="#cdcac2" stroke-width="0.800"/></svg>
<svg style="left:223.95px;top:60.95px" width="16.5" height="16.5" viewBox="0 0 24 24"><rect x="2" y="2" width="19" height="19" rx="2" fill="#d4d4d4" stroke="#c4c4c4" stroke-width="1"/><rect x="5.500" y="3" width="12" height="7.500" fill="#e9e9e9"/><rect x="6" y="14" width="11" height="7" fill="#ececec"/><rect x="8" y="15.500" width="2.500" height="4" fill="#c9c9c9"/><path d="M20 10l3 1.500-5 9-3.500 2 .500-4z" fill="#e0d8c8" stroke="#cfc7b6" stroke-width="0.700"/></svg>
<svg style="left:247.45px;top:60.95px" width="16.5" height="16.5" viewBox="0 0 24 24"><path d="M4 20l15-16" stroke="#cfcfcf" stroke-width="0.900" stroke-dasharray="2 1.300"/><circle cx="4" cy="20" r="1.800" fill="#ececec" stroke="#c8c8c8" stroke-width="0.800"/><circle cx="19.500" cy="3.500" r="1.800" fill="#ececec" stroke="#c8c8c8" stroke-width="0.800"/></svg>
<svg style="left:268.40000000000003px;top:68.60000000000001px;" width="4.4" height="2.6" viewBox="0 0 4.4 2.6"><path d="M0 0h4.4L2.2 2.4z" fill="#a8a8a8"/></svg>
<svg style="left:278.65px;top:60.95px" width="16.5" height="16.5" viewBox="0 0 24 24"><path d="M1.500 8c0-4 4-6.500 8.500-6 3.500.400 5.500-.600 8.500.600 3.500 1.400 3.500 8 1 11-2 2.400-5 2-7.500.800-2-1-3.500 1-6 .400-3-.700-4.500-3.400-4.500-6.800z" fill="#d6d8d4" stroke="#c3c5c1" stroke-width="0.9"/><rect x="13.7" y="13.9" width="9.6" height="9.6" rx="1.7" fill="#cfcbbb"/><path d="M18.5 15.399999999999999v6.6M15.7 16.8l5.6 3.8M21.3 16.8l-5.6 3.8" stroke="#fff" stroke-width="1.15" stroke-linecap="round"/><circle cx="18.5" cy="18.7" r="1.3" fill="#fff"/></svg>
<svg style="left:300.65px;top:60.95px" width="16.5" height="16.5" viewBox="0 0 24 24"><path d="M6 2l1.500 6-4 13M6 2l5 5-6 14" fill="none" stroke="#c9c9c9" stroke-width="1"/><circle cx="8.500" cy="6.500" r="2.600" fill="#ececec" stroke="#c4c4c4" stroke-width="0.900"/><path d="M11 5h9" stroke="#cfcfcf" stroke-width="1"/><path d="M11 11l10 10.500M21 11l-10 10.500" stroke="#d6cdb4" stroke-width="2.800" stroke-linecap="round"/><path d="M9.500 9.500l3 3M22 9.500l-3 3" stroke="#c9c9c9" stroke-width="2.400"/></svg>
<svg style="left:321.8px;top:68.60000000000001px;" width="4.4" height="2.6" viewBox="0 0 4.4 2.6"><path d="M0 0h4.4L2.2 2.4z" fill="#a8a8a8"/></svg>
<svg style="left:331.75px;top:60.95px" width="16.5" height="16.5" viewBox="0 0 24 24"><rect x="2.500" y="3" width="17" height="18" fill="#e6e3d3" stroke="#d2cfbf" stroke-width="0.800"/><path d="M2.500 7.500h17M2.500 12h17M2.500 16.500h17" stroke="#f4f2ea" stroke-width="1.200"/><path d="M19 1.500l3 1.500-9.500 17-4 2.500.500-4.500z" fill="#e9e6de" stroke="#cfccc4" stroke-width="0.800"/></svg>
<svg style="left:353.75px;top:60.95px" width="16.5" height="16.5" viewBox="0 0 24 24"><path d="M4 3h13v3h-13z" fill="#e8e0e0" stroke="#d3c6c6" stroke-width="0.800"/><path d="M6 8h14l-1 14h-12z" fill="#ece6e6" stroke="#d3c6c6" stroke-width="0.900"/><path d="M5 8h16" stroke="#d3c6c6" stroke-width="1.300"/><path d="M10 10.500v9.500M13 10.500v9.500M16 10.500v9.500" stroke="#d3c6c6" stroke-width="1"/></svg>
<svg style="left:377.35px;top:60.95px" width="16.5" height="16.5" viewBox="0 0 24 24"><path d="M1.500 5c6 1 11 4 15 8M1.500 11c5-.500 10 1.500 14.500 5" fill="none" stroke="#cccccc" stroke-width="1.200"/><ellipse cx="19.500" cy="7.500" rx="3" ry="4" fill="none" stroke="#cfc4c4" stroke-width="1.200" transform="rotate(35 19.500 7.500)"/><ellipse cx="19" cy="17" rx="3" ry="4" fill="none" stroke="#cfc4c4" stroke-width="1.200" transform="rotate(-30 19 17)"/></svg>
<svg style="left:399.75px;top:60.95px" width="16.5" height="16.5" viewBox="0 0 24 24"><path d="M8 2h9l3 3v13h-12z" fill="#ededed" stroke="#d2d2d2" stroke-width="0.900"/><path d="M3.500 6h9l3 3v13h-12z" fill="#f1f1f1" stroke="#d2d2d2" stroke-width="0.900"/><path d="M6 12h7M6 14.500h7M6 17h7M6 19.500h5" stroke="#dadada" stroke-width="0.800"/></svg>
<svg style="left:422.65px;top:60.95px" width="16.5" height="16.5" viewBox="0 0 24 24"><rect x="3" y="2" width="17" height="20" rx="1.500" fill="#e1ddd6" stroke="#d0ccc5" stroke-width="1"/><rect x="6" y="5" width="11" height="15" fill="#f1f1f1" stroke="#d6d6d6" stroke-width="0.700"/><path d="M8 8.500h7M8 11h7M8 13.500h7M8 16h5" stroke="#d9d9d9" stroke-width="0.800"/><rect x="8" y="1" width="7" height="3" fill="#d5d1ca"/></svg>
<svg style="left:445.75px;top:60.95px" width="16.5" height="16.5" viewBox="0 0 24 24"><path d="M2 9l8-7v4.500c6 0 11 3 11 8 0 4-3 6.500-7 7 2-1.500 3-3 3-5 0-2.500-3-4-7-4v4.500z" fill="#d2d0cd" stroke="#c6c4c1" stroke-width="0.700" stroke-linejoin="round"/></svg>
<svg style="left:468.15px;top:60.95px" width="16.5" height="16.5" viewBox="0 0 24 24"><path d="M22 9l-8-7v4.500c-6 0-11 3-11 8 0 4 3 6.500 7 7-2-1.500-3-3-3-5 0-2.500 3-4 7-4v4.500z" fill="#d0d2d0" stroke="#c4c6c4" stroke-width="0.700" stroke-linejoin="round"/></svg>
<svg style="left:493px;top:64px;" width="4" height="12" viewBox="0 0 4 12"><rect x="0" y="0" width="1" height="1" fill="#d5d5d5"/><rect x="0" y="2" width="1" height="1" fill="#d5d5d5"/><rect x="0" y="4" width="1" height="1" fill="#d5d5d5"/><rect x="0" y="6" width="1" height="1" fill="#d5d5d5"/><rect x="0" y="8" width="1" height="1" fill="#d5d5d5"/><rect x="0" y="10" width="1" height="1" fill="#d5d5d5"/><rect x="2" y="0" width="1" height="1" fill="#d5d5d5"/><rect x="2" y="2" width="1" height="1" fill="#d5d5d5"/><rect x="2" y="4" width="1" height="1" fill="#d5d5d5"/><rect x="2" y="6" width="1" height="1" fill="#d5d5d5"/><rect x="2" y="8" width="1" height="1" fill="#d5d5d5"/><rect x="2" y="10" width="1" height="1" fill="#d5d5d5"/></svg>
<svg style="left:500.75px;top:60.95px" width="16.5" height="16.5" viewBox="0 0 24 24"><path d="M4.5 7h17.5v9.6h-17.5l-3-4.8z" fill="#f3d73c" stroke="#b8950c" stroke-width="0.9" stroke-linejoin="round"/><text x="12.75" y="14.600000000000001" font-family="Liberation Sans,sans-serif" font-size="8" font-weight="bold" text-anchor="middle" fill="#222">abc</text></svg>
<svg style="left:524.35px;top:60.95px" width="16.5" height="16.5" viewBox="0 0 24 24"><path d="M9 8.5L3.11 5.10A6.8 6.8 0 0 1 14.89 5.10z" fill="#f7dc4a" stroke="#3a2a1a" stroke-width="0.5" stroke-linejoin="round"/><path d="M9 8.5L14.89 5.10A6.8 6.8 0 0 1 9.00 15.30z" fill="#d9362e" stroke="#3a2a1a" stroke-width="0.5" stroke-linejoin="round"/><path d="M9 8.5L9.00 15.30A6.8 6.8 0 0 1 3.11 5.10z" fill="#3f9a4a" stroke="#3a2a1a" stroke-width="0.5" stroke-linejoin="round"/><rect x="10.500" y="17.500" width="3.600" height="5.500" fill="#f7dc4a" stroke="#a8860c" stroke-width="0.400"/><rect x="14.100" y="12.500" width="3.600" height="10.500" fill="#3f9a4a" stroke="#2a6a32" stroke-width="0.400"/><rect x="17.700" y="16" width="3.600" height="7" fill="#c9302a" stroke="#8e1f1a" stroke-width="0.400"/></svg>
<div style="left:546.25px;top:62.7px;width:0.7px;height:13px;background:#dfdfdf;"></div>
<svg style="left:551.75px;top:60.95px" width="16.5" height="16.5" viewBox="0 0 24 24"><path d="M3.5 4.5h16v9h-16l-3-4.5z" fill="#cfe0f5" stroke="#5d8fca" stroke-width="0.9" stroke-linejoin="round"/><text x="11.0" y="11.625" font-family="Liberation Sans,sans-serif" font-size="7.5" font-weight="bold" text-anchor="middle" fill="#333">ab</text><rect x="17" y="7" width="2.400" height="8" fill="#e9e9e9" stroke="#999" stroke-width="0.500"/><circle cx="18" cy="18" r="4.300" fill="#a3262c" stroke="#6d1519" stroke-width="0.600"/></svg>
<svg style="left:573.75px;top:60.95px" width="16.5" height="16.5" viewBox="0 0 24 24"><path d="M4.5 6.5h18v10h-18l-3-5.0z" fill="#fff" stroke="#e02020" stroke-width="1.700" stroke-linejoin="round"/><text x="13.0" y="14.3" font-family="Liberation Sans,sans-serif" font-size="8" font-weight="bold" text-anchor="middle" fill="#e02020">abc</text></svg>
<div style="left:596.05px;top:62.7px;width:0.7px;height:13px;background:#dfdfdf;"></div>
<svg style="left:601.15px;top:60.95px" width="16.5" height="16.5" viewBox="0 0 24 24"><path d="M3.5 4.5h16v9h-16l-3-4.5z" fill="#e2e0d9" stroke="#cbc9c2" stroke-width="0.9" stroke-linejoin="round"/><text x="11.0" y="11.625" font-family="Liberation Sans,sans-serif" font-size="7.5" font-weight="bold" text-anchor="middle" fill="#a4a4a4">ab</text><rect x="16.500" y="7" width="2.400" height="8" fill="#e6e6e6"/><circle cx="17.500" cy="18" r="4.300" fill="#d9d2d3"/></svg>
<svg style="left:623.85px;top:60.95px" width="16.5" height="16.5" viewBox="0 0 24 24"><path d="M3.5 4.5h16v9h-16l-3-4.5z" fill="#e2e0d9" stroke="#cbc9c2" stroke-width="0.9" stroke-linejoin="round"/><text x="11.0" y="11.555" font-family="Liberation Sans,sans-serif" font-size="7.3" font-weight="bold" text-anchor="middle" fill="#a4a4a4">abc</text><path d="M8 19c2.500-3.500 9.500-3.500 12 0-2.500 3.500-9.500 3.500-12 0z" fill="#f4f4f4" stroke="#c9c9c9" stroke-width="0.800"/><circle cx="14" cy="19" r="1.700" fill="#cfcfcf"/></svg>
<svg style="left:646.65px;top:60.95px" width="16.5" height="16.5" viewBox="0 0 24 24"><path d="M3.5 4.5h16v9h-16l-3-4.5z" fill="#e2e0d9" stroke="#cbc9c2" stroke-width="0.9" stroke-linejoin="round"/><text x="11.0" y="11.555" font-family="Liberation Sans,sans-serif" font-size="7.3" font-weight="bold" text-anchor="middle" fill="#a4a4a4">abc</text><rect x="12.500" y="12.500" width="10.500" height="10.500" rx="1.500" fill="#d2d2d2"/><path d="M14.500 17.700h4v-2.200l3.300 3-3.300 3v-2.200h-4z" fill="#f6f6f6"/></svg>
<svg style="left:669.45px;top:60.95px" width="16.5" height="16.5" viewBox="0 0 24 24"><path d="M3.5 4.5h16v9h-16l-3-4.5z" fill="#e2e0d9" stroke="#cbc9c2" stroke-width="0.9" stroke-linejoin="round"/><text x="11.0" y="11.555" font-family="Liberation Sans,sans-serif" font-size="7.3" font-weight="bold" text-anchor="middle" fill="#a4a4a4">abc</text><rect x="12.500" y="12.500" width="10.500" height="10.500" rx="1.500" fill="#d2d2d2"/><path d="M20.500 17.700a3 3 0 1 1-1.200-2.300" fill="none" stroke="#f6f6f6" stroke-width="1.300"/><path d="M18.500 13.800l2.300 1.600-2.500 1.200z" fill="#f6f6f6"/></svg>
<svg style="left:692.25px;top:60.95px" width="16.5" height="16.5" viewBox="0 0 24 24"><path d="M3.5 4.5h16v9h-16l-3-4.5z" fill="#e2e0d9" stroke="#cbc9c2" stroke-width="0.9" stroke-linejoin="round"/><text x="11.0" y="11.555" font-family="Liberation Sans,sans-serif" font-size="7.3" font-weight="bold" text-anchor="middle" fill="#a4a4a4">abc</text><rect x="12.500" y="12.500" width="10.500" height="10.500" rx="1.500" fill="#d8d5ca"/><path d="M20.500 14.500l1 1-5 5.500-1.800.600.500-1.800z" fill="#f6f6f6"/></svg>
<svg style="left:717px;top:64px;" width="4" height="12" viewBox="0 0 4 12"><rect x="0" y="0" width="1" height="1" fill="#d5d5d5"/><rect x="0" y="2" width="1" height="1" fill="#d5d5d5"/><rect x="0" y="4" width="1" height="1" fill="#d5d5d5"/><rect x="0" y="6" width="1" height="1" fill="#d5d5d5"/><rect x="0" y="8" width="1" height="1" fill="#d5d5d5"/><rect x="0" y="10" width="1" height="1" fill="#d5d5d5"/><rect x="2" y="0" width="1" height="1" fill="#d5d5d5"/><rect x="2" y="2" width="1" height="1" fill="#d5d5d5"/><rect x="2" y="4" width="1" height="1" fill="#d5d5d5"/><rect x="2" y="6" width="1" height="1" fill="#d5d5d5"/><rect x="2" y="8" width="1" height="1" fill="#d5d5d5"/><rect x="2" y="10" width="1" height="1" fill="#d5d5d5"/></svg>
<svg style="left:726.25px;top:60.95px" width="16.5" height="16.5" viewBox="0 0 24 24"><circle cx="11" cy="11" r="9.500" fill="#7aaee6" stroke="#2c5a9a" stroke-width="1"/><path d="M4 5.500c2-1 4 0 4 2s-2.500 2.500-2.500 4.500 1.500 3 2.500 4M13.500 3.500c2.500.500 4.500 3 3.500 5s-3 1.500-3 3.500 2.500 3.500 1.500 6" stroke="#2e2e2e" stroke-width="2.600" fill="none" opacity="0.700"/><path d="M11 1.500c-5 4-5 15 0 19M11 1.500c5 4 5 15 0 19M1.500 11h19M3 6h16M3 16h16M11 1.500v19" stroke="#e8f1fb" stroke-width="0.800" fill="none"/><rect x="14" y="14" width="9.500" height="9.500" rx="1.500" fill="#2f8040"/><path d="M18.700 15.800v5.900M15.800 18.700h5.900" stroke="#fff" stroke-width="2"/></svg>
<svg style="left:749.05px;top:60.95px" width="16.5" height="16.5" viewBox="0 0 24 24"><circle cx="11" cy="11" r="9.500" fill="#7aaee6" stroke="#2c5a9a" stroke-width="1"/><path d="M4 5.500c2-1 4 0 4 2s-2.500 2.500-2.500 4.500 1.500 3 2.500 4M13.500 3.500c2.500.500 4.500 3 3.500 5s-3 1.500-3 3.500 2.500 3.500 1.500 6" stroke="#2e2e2e" stroke-width="2.600" fill="none" opacity="0.700"/><path d="M11 1.500c-5 4-5 15 0 19M11 1.500c5 4 5 15 0 19M1.500 11h19M3 6h16M3 16h16M11 1.500v19" stroke="#e8f1fb" stroke-width="0.800" fill="none"/><rect x="14" y="14" width="9.500" height="9.500" rx="1.500" fill="#3f9a4a"/><circle cx="18.200" cy="18.200" r="2.300" fill="none" stroke="#fff" stroke-width="1.200"/><path d="M20 20l2 2" stroke="#fff" stroke-width="1.300"/></svg>
<svg style="left:772.05px;top:60.95px" width="16.5" height="16.5" viewBox="0 0 24 24"><rect x="2.500" y="2.500" width="19" height="14" fill="#c7dcf3" stroke="#5d8fca" stroke-width="1.200"/><text x="12" y="13" font-family="Liberation Mono,monospace" font-size="9" font-weight="bold" text-anchor="middle" fill="#33527d">2.0</text><rect x="2.500" y="17.500" width="19" height="4.500" fill="#dcdcdc" stroke="#9e9e9e" stroke-width="0.700"/><rect x="17.500" y="18.800" width="2.200" height="2" fill="#d23a3a"/></svg>
<svg style="left:794.55px;top:60.95px" width="16.5" height="16.5" viewBox="0 0 24 24"><circle cx="12" cy="10" r="9.500" fill="#5d88c4" stroke="#2c5a9a" stroke-width="1"/><path d="M5 6c2-2 5-2 6 0s-2 3-1 5 4 1 5 3-1 4-3 4M15 3c3 1 5 4 4 7" stroke="#d5e3f5" stroke-width="1.600" fill="none"/><circle cx="7.500" cy="19" r="3.600" fill="#111"/><circle cx="16.500" cy="19" r="3.600" fill="#111"/><path d="M6 16l2.500-5h2l1 4h1l1-4h2l2.500 5z" fill="#111"/><circle cx="7.500" cy="19" r="1.800" fill="#fff"/><circle cx="16.500" cy="19" r="1.800" fill="#fff"/></svg>
<svg style="left:820px;top:64px;" width="4" height="12" viewBox="0 0 4 12"><rect x="0" y="0" width="1" height="1" fill="#d5d5d5"/><rect x="0" y="2" width="1" height="1" fill="#d5d5d5"/><rect x="0" y="4" width="1" height="1" fill="#d5d5d5"/><rect x="0" y="6" width="1" height="1" fill="#d5d5d5"/><rect x="0" y="8" width="1" height="1" fill="#d5d5d5"/><rect x="0" y="10" width="1" height="1" fill="#d5d5d5"/><rect x="2" y="0" width="1" height="1" fill="#d5d5d5"/><rect x="2" y="2" width="1" height="1" fill="#d5d5d5"/><rect x="2" y="4" width="1" height="1" fill="#d5d5d5"/><rect x="2" y="6" width="1" height="1" fill="#d5d5d5"/><rect x="2" y="8" width="1" height="1" fill="#d5d5d5"/><rect x="2" y="10" width="1" height="1" fill="#d5d5d5"/></svg>
<svg style="left:828.35px;top:60.95px" width="16.5" height="16.5" viewBox="0 0 24 24"><path d="M11.800 1.500c-4 0-5.300 1.500-5.300 3.500v2.800h5.700v1h-8c-2.200 0-3.500 2-3.500 5s1.300 5 3.500 5h2v-3c0-2.200 1.800-4 4-4h5c1.800 0 3-1.300 3-3v-3.800c0-2-2-3.500-6.400-3.500z" fill="#3873a8"/><circle cx="9" cy="4.300" r="1.100" fill="#fff"/><path d="M12.200 22.500c4 0 5.300-1.500 5.300-3.500v-2.800h-5.700v-1h8c2.200 0 3.500-2 3.500-5s-1.300-5-3.500-5h-2v3c0 2.200-1.800 4-4 4h-5c-1.800 0-3 1.300-3 3v3.800c0 2 2 3.500 6.400 3.500z" fill="#f7d140"/><path d="M16 18.500l5 2-5 2" fill="none" stroke="#222" stroke-width="1.300"/></svg>
<svg style="left:853px;top:64px;" width="4" height="12" viewBox="0 0 4 12"><rect x="0" y="0" width="1" height="1" fill="#d5d5d5"/><rect x="0" y="2" width="1" height="1" fill="#d5d5d5"/><rect x="0" y="4" width="1" height="1" fill="#d5d5d5"/><rect x="0" y="6" width="1" height="1" fill="#d5d5d5"/><rect x="0" y="8" width="1" height="1" fill="#d5d5d5"/><rect x="0" y="10" width="1" height="1" fill="#d5d5d5"/><rect x="2" y="0" width="1" height="1" fill="#d5d5d5"/><rect x="2" y="2" width="1" height="1" fill="#d5d5d5"/><rect x="2" y="4" width="1" height="1" fill="#d5d5d5"/><rect x="2" y="6" width="1" height="1" fill="#d5d5d5"/><rect x="2" y="8" width="1" height="1" fill="#d5d5d5"/><rect x="2" y="10" width="1" height="1" fill="#d5d5d5"/></svg>
<svg style="left:861.75px;top:60.95px" width="16.5" height="16.5" viewBox="0 0 24 24"><rect x="3" y="1.500" width="19" height="21" rx="1" fill="#5b86c2" stroke="#2b3f5c" stroke-width="0.900"/><rect x="3" y="1.500" width="5" height="21" fill="#2b3f5c"/><text x="15" y="17" font-family="Liberation Sans,sans-serif" font-size="13" text-anchor="middle" fill="#f4f4f4">?</text></svg>
<svg style="left:887px;top:64px;" width="4" height="12" viewBox="0 0 4 12"><rect x="0" y="0" width="1" height="1" fill="#d5d5d5"/><rect x="0" y="2" width="1" height="1" fill="#d5d5d5"/><rect x="0" y="4" width="1" height="1" fill="#d5d5d5"/><rect x="0" y="6" width="1" height="1" fill="#d5d5d5"/><rect x="0" y="8" width="1" height="1" fill="#d5d5d5"/><rect x="0" y="10" width="1" height="1" fill="#d5d5d5"/><rect x="2" y="0" width="1" height="1" fill="#d5d5d5"/><rect x="2" y="2" width="1" height="1" fill="#d5d5d5"/><rect x="2" y="4" width="1" height="1" fill="#d5d5d5"/><rect x="2" y="6" width="1" height="1" fill="#d5d5d5"/><rect x="2" y="8" width="1" height="1" fill="#d5d5d5"/><rect x="2" y="10" width="1" height="1" fill="#d5d5d5"/></svg>
<svg style="left:1px;top:91px;" width="4" height="12" viewBox="0 0 4 12"><rect x="0" y="0" width="1" height="1" fill="#d5d5d5"/><rect x="0" y="2" width="1" height="1" fill="#d5d5d5"/><rect x="0" y="4" width="1" height="1" fill="#d5d5d5"/><rect x="0" y="6" width="1" height="1" fill="#d5d5d5"/><rect x="0" y="8" width="1" height="1" fill="#d5d5d5"/><rect x="0" y="10" width="1" height="1" fill="#d5d5d5"/><rect x="2" y="0" width="1" height="1" fill="#d5d5d5"/><rect x="2" y="2" width="1" height="1" fill="#d5d5d5"/><rect x="2" y="4" width="1" height="1" fill="#d5d5d5"/><rect x="2" y="6" width="1" height="1" fill="#d5d5d5"/><rect x="2" y="8" width="1" height="1" fill="#d5d5d5"/><rect x="2" y="10" width="1" height="1" fill="#d5d5d5"/></svg>
<svg style="left:9.25px;top:88.05px" width="16.5" height="16.5" viewBox="0 0 24 24"><path d="M2 23v-21.500l20.500 21.500z" fill="#e4d9d6" stroke="#d2c6c3" stroke-width="0.900"/><path d="M7 19v-8l7.500 8z" fill="#f1f1f1" stroke="#d2c6c3" stroke-width="0.700"/><path d="M3 6h2M3 9h3M3 12h2M3 15h3M3 18h2" stroke="#cbbfbc" stroke-width="0.700"/><path d="M17 3v19.500h5.500v-19.500z" fill="#e6ddd5" stroke="#d3c9c1" stroke-width="0.700" opacity="0.800"/></svg>
<svg style="left:32.75px;top:88.05px" width="16.5" height="16.5" viewBox="0 0 24 24"><path d="M1.500 8c0-4 4-6.500 8.500-6 3.500.400 5.500-.600 8.500.600 3.500 1.400 3.500 8 1 11-2 2.400-5 2-7.500.800-2-1-3.500 1-6 .400-3-.700-4.500-3.400-4.500-6.800z" fill="#d3d5d1" stroke="#aaaca8" stroke-width="0.9"/><rect x="12.5" y="12.5" width="10.500" height="10.500" rx="1.500" fill="#c8c8c8"/><path d="M14.500 17.700h4v-2.200l3.300 3-3.300 3v-2.200h-4z" fill="#f6f6f6"/></svg>
<svg style="left:53.5px;top:95.7px;" width="4.4" height="2.6" viewBox="0 0 4.4 2.6"><path d="M0 0h4.4L2.2 2.4z" fill="#a8a8a8"/></svg>
<svg style="left:63.75px;top:88.05px" width="16.5" height="16.5" viewBox="0 0 24 24"><path d="M1.500 8c0-4 4-6.500 8.500-6 3.500.400 5.500-.600 8.500.600 3.500 1.400 3.500 8 1 11-2 2.400-5 2-7.500.800-2-1-3.500 1-6 .400-3-.700-4.500-3.400-4.500-6.800z" fill="#d3d5d1" stroke="#aaaca8" stroke-width="0.9"/><rect x="12.5" y="12.5" width="10.500" height="10.500" rx="1.500" fill="#c8c8c8"/><path d="M20.700 17.700a3 3 0 1 1-1.200-2.300" fill="none" stroke="#f6f6f6" stroke-width="1.300"/><path d="M18.500 13.800l2.500 1.600-2.600 1.200z" fill="#f6f6f6"/></svg>
<svg style="left:86.25px;top:88.05px" width="16.5" height="16.5" viewBox="0 0 24 24"><path d="M1.500 8c0-4 4-6.500 8.500-6 3.500.400 5.500-.600 8.500.600 3.500 1.400 3.500 8 1 11-2 2.400-5 2-7.500.800-2-1-3.500 1-6 .400-3-.700-4.500-3.400-4.500-6.800z" fill="#d3d5d1" stroke="#aaaca8" stroke-width="0.9"/><rect x="12.5" y="12.5" width="10.500" height="10.500" rx="1.500" fill="#c8c8c8"/><path d="M14 17.700l2.500-2.500v1.700h2.500v-1.700l2.500 2.500-2.500 2.500v-1.700h-2.500v1.700z" fill="#f6f6f6"/></svg>
<svg style="left:108.75px;top:88.05px" width="16.5" height="16.5" viewBox="0 0 24 24"><path d="M2 7c0-4 5-5.500 9-4 3 1 4 4 3 7l-4 3-5-1c-2-1-3-3-3-5z" fill="#d5d7d3" stroke="#c2c4c0" stroke-width="0.900"/><path d="M10 11l5-3.500 6 2 2 6-4 5-6 .500-4-4.500z" fill="#dfe1e4" stroke="#c9cbd0" stroke-width="0.900"/></svg>
<svg style="left:131.45px;top:88.05px" width="16.5" height="16.5" viewBox="0 0 24 24"><path d="M1.500 8c0-4 4-6.500 8.500-6 3.500.400 5.500-.600 8.500.600 3.500 1.400 3.500 8 1 11-2 2.400-5 2-7.500.800-2-1-3.500 1-6 .400-3-.700-4.500-3.400-4.500-6.800z" fill="#d3d5d1" stroke="#aaaca8" stroke-width="0.9"/><path d="M7 5.500c2-1.500 6-1 7 .500s-3 3-6 2.500c-2-.300-2.500-2-1-3z" fill="#f4f4f4" stroke="#c2c4c0" stroke-width="0.700"/><rect x="13.7" y="13.9" width="9.6" height="9.6" rx="1.7" fill="#cfcbbb"/><path d="M18.5 15.399999999999999v6.6M15.7 16.8l5.6 3.8M21.3 16.8l-5.6 3.8" stroke="#fff" stroke-width="1.15" stroke-linecap="round"/><circle cx="18.5" cy="18.7" r="1.3" fill="#fff"/></svg>
<svg style="left:154.25px;top:88.05px" width="16.5" height="16.5" viewBox="0 0 24 24"><path d="M1.500 8c0-4 4-6.500 8.500-6 3.500.400 5.500-.600 8.500.600 3.500 1.400 3.500 8 1 11-2 2.400-5 2-7.500.800-2-1-3.500 1-6 .400-3-.700-4.500-3.400-4.500-6.800z" fill="#d3d5d1" stroke="#aaaca8" stroke-width="0.9"/><path d="M2 19c0-3 2-5.500 5-6 2.500 0 3.500 2 3 4.500s-3 5-5.500 5c-1.800 0-2.500-1.500-2.500-3.500z" fill="#d5d7d3" stroke="#c2c4c0" stroke-width="0.900"/><rect x="13.7" y="13.9" width="9.6" height="9.6" rx="1.7" fill="#cfcbbb"/><path d="M18.5 15.399999999999999v6.6M15.7 16.8l5.6 3.8M21.3 16.8l-5.6 3.8" stroke="#fff" stroke-width="1.15" stroke-linecap="round"/><circle cx="18.5" cy="18.7" r="1.3" fill="#fff"/></svg>
<svg style="left:177.05px;top:88.05px" width="16.5" height="16.5" viewBox="0 0 24 24"><path d="M1.500 8c0-4 4-6.500 8.500-6 3.500.400 5.500-.600 8.500.600 3.500 1.400 3.500 8 1 11-2 2.400-5 2-7.500.800-2-1-3.500 1-6 .400-3-.700-4.500-3.400-4.500-6.800z" fill="#d3d5d1" stroke="#aaaca8" stroke-width="0.9"/><path d="M6 6c2-2 7-1.500 8 0s-3 3.500-6.500 3c-2-.300-3-1.700-1.500-3z" fill="#cfd1cd" stroke="#bcbebb" stroke-width="0.800"/><rect x="13.7" y="13.9" width="9.6" height="9.6" rx="1.7" fill="#cfcbbb"/><path d="M18.5 15.399999999999999v6.6M15.7 16.8l5.6 3.8M21.3 16.8l-5.6 3.8" stroke="#fff" stroke-width="1.15" stroke-linecap="round"/><circle cx="18.5" cy="18.7" r="1.3" fill="#fff"/></svg>
<svg style="left:199.75px;top:88.05px" width="16.5" height="16.5" viewBox="0 0 24 24"><path d="M1.500 8c0-4 4-6.500 8.500-6 3.500.400 5.500-.600 8.500.600 3.500 1.400 3.500 8 1 11-2 2.400-5 2-7.500.800-2-1-3.500 1-6 .400-3-.700-4.500-3.400-4.500-6.800z" fill="#d3d5d1" stroke="#aaaca8" stroke-width="0.9"/><path d="M6 5.500c2-1.500 7-1 8 .500s-3 3-6.500 2.500c-2-.300-3-2-1.500-3z" fill="#f4f4f4" stroke="#c2c4c0" stroke-width="0.700"/><rect x="12.500" y="12.500" width="10.500" height="10.500" rx="1" fill="#f3ecec" stroke="#dcc9c9" stroke-width="0.900"/><path d="M15 15l5.500 5.500M20.500 15l-5.500 5.500" stroke="#dcc9c9" stroke-width="1.600"/></svg>
<svg style="left:222.45px;top:88.05px" width="16.5" height="16.5" viewBox="0 0 24 24"><path d="M1.500 8c0-4 4-6.500 8.500-6 3.500.400 5.500-.600 8.500.600 3.500 1.400 3.500 8 1 11-2 2.400-5 2-7.500.800-2-1-3.500 1-6 .400-3-.700-4.500-3.400-4.500-6.800z" fill="#d3d5d1" stroke="#aaaca8" stroke-width="0.9"/><path d="M2 19c0-3 2-5.500 5-6 2.500 0 3.500 2 3 4.500s-3 5-5.500 5c-1.800 0-2.500-1.500-2.500-3.500z" fill="#d5d7d3" stroke="#c2c4c0" stroke-width="0.900"/><rect x="12.500" y="12.500" width="10.500" height="10.500" rx="1" fill="#f3ecec" stroke="#dcc9c9" stroke-width="0.900"/><path d="M15 15l5.500 5.500M20.500 15l-5.500 5.500" stroke="#dcc9c9" stroke-width="1.600"/></svg>
<svg style="left:245.25px;top:88.05px" width="16.5" height="16.5" viewBox="0 0 24 24"><path d="M3 8c0-4 4-5.500 8-5 3 .400 6-.800 9 .500 3 1.300 2.500 5 .500 7-2 1.500-5 .500-7 1-2 .500-3 3-3.500 6s-1.500 5-3 5-2.500-2.500-2.500-5.500-1.500-5.500-1.500-9z" fill="#d5d7d3" stroke="#c2c4c0" stroke-width="0.900"/></svg>
<svg style="left:267.25px;top:88.05px" width="16.5" height="16.5" viewBox="0 0 24 24"><path d="M3 16c0-3 3-5 5.500-7.500s5-6 9-6 5.500 3 4.500 6.500-4.500 4.500-7 7-4 6-8 6-4-3-4-6z" fill="#d7d5cc" stroke="#c6c4bb" stroke-width="0.900"/><path d="M6 16c0-2 2.500-3.500 4.500-5.500s4-5 7-5 3.500 2 3 4-3.500 3.500-5.500 5.500-3.500 5-6.500 5-2.500-2-2.500-4z" fill="#e0ded6" stroke="#cbc9c0" stroke-width="0.600"/></svg>
<svg style="left:290.05px;top:88.05px" width="16.5" height="16.5" viewBox="0 0 24 24"><path d="M3 2.500l7 13.500 5-11.500" fill="none" stroke="#cfcfcf" stroke-width="1"/><circle cx="10" cy="16" r="1.500" fill="#f0f0f0" stroke="#c8c8c8" stroke-width="0.700"/><rect x="15" y="4" width="2.600" height="2.600" fill="#f0f0f0" stroke="#c8c8c8" stroke-width="0.700"/><rect x="19.500" y="4" width="2.600" height="2.600" fill="#f0f0f0" stroke="#c8c8c8" stroke-width="0.700"/><rect x="13" y="13" width="10" height="10" rx="1.500" fill="#e9e9e9" stroke="#bdbdbd" stroke-width="0.900"/><path d="M20.700 18a2.700 2.700 0 1 1-1-2.100M15.300 18a2.700 2.700 0 0 0 1 2.100" fill="none" stroke="#c0c0c0" stroke-width="1.100"/></svg>
<svg style="left:312.75px;top:88.05px" width="16.5" height="16.5" viewBox="0 0 24 24"><path d="M10 1v22M15 8v15" stroke="#cfcfcf" stroke-width="1.100"/><path d="M1 12h21" stroke="#d6d0d0" stroke-width="1"/><circle cx="10" cy="12" r="1.800" fill="#f0f0f0" stroke="#c8c8c8" stroke-width="0.800"/><circle cx="15" cy="12" r="1.800" fill="#f0f0f0" stroke="#c8c8c8" stroke-width="0.800"/><rect x="16.500" y="2.500" width="5" height="5" fill="#f6f0dc" stroke="#dccf9f" stroke-width="0.900"/><rect x="2" y="16.500" width="5" height="5" fill="#f6f0f0" stroke="#dcc9c9" stroke-width="0.900"/></svg>
<svg style="left:335.55px;top:88.05px" width="16.5" height="16.5" viewBox="0 0 24 24"><path d="M2 6c0-3 3-4 6-3.500l3 1 3-1c3-.500 6 .500 6 3.500s-2 6-5 7h-8c-3-1-5-4-5-7z" fill="#d5d7d3" stroke="#c2c4c0" stroke-width="0.900"/><path d="M9 2l4.500 14M14 2l-4.500 14" stroke="#c9c9c9" stroke-width="1.100"/><ellipse cx="8.500" cy="19" rx="2.200" ry="3.200" fill="none" stroke="#d6c4c4" stroke-width="1.100"/><ellipse cx="14.500" cy="19" rx="2.200" ry="3.200" fill="none" stroke="#d6c4c4" stroke-width="1.100"/></svg>
<svg style="left:358.05px;top:88.05px" width="16.5" height="16.5" viewBox="0 0 24 24"><path d="M2 6c0-3 3-4 6-3.500l3 1 3-1c3-.500 6 .500 6 3.500s-2 6-5 7h-8c-3-1-5-4-5-7z" fill="#d5d7d3" stroke="#c2c4c0" stroke-width="0.900"/><path d="M9 2l4.500 14M14 2l-4.500 14" stroke="#c9c9c9" stroke-width="1.100"/><ellipse cx="8.500" cy="19" rx="2.200" ry="3.200" fill="none" stroke="#d6c4c4" stroke-width="1.100"/><ellipse cx="14.500" cy="19" rx="2.200" ry="3.200" fill="none" stroke="#d6c4c4" stroke-width="1.100"/></svg>
<svg style="left:380.75px;top:88.05px" width="16.5" height="16.5" viewBox="0 0 24 24"><path d="M2 7c0-3 3-4.500 6-4l3 1.500 3-1.500c3-.500 7 1 7 4s-2 5.500-5 6.500h-9c-3-1-5-3.500-5-6.500z" fill="#d5d7d3" stroke="#c2c4c0" stroke-width="0.900"/><path d="M11.500 4.500v9" stroke="#c2c4c0" stroke-width="0.800"/><path d="M9 6h5M9 8h5" stroke="#bdbdbd" stroke-width="0.700"/><path d="M6 13c1 4 4 7 8 9" fill="none" stroke="#c9c9c9" stroke-width="1.100"/></svg>
<svg style="left:403.75px;top:88.05px" width="16.5" height="16.5" viewBox="0 0 24 24"><rect x="3" y="2" width="18" height="6.500" fill="#e9e9e6" stroke="#d9d9d6" stroke-width="0.600"/><rect x="3" y="15.500" width="18" height="6.500" fill="#e9e9e6" stroke="#d9d9d6" stroke-width="0.600"/><path d="M2 8.500h20M2 15.500h20M2 12h20" stroke="#d2d2d2" stroke-width="0.800"/><path d="M12 1.500v21" stroke="#c4c4c4" stroke-width="1.100" stroke-dasharray="2.500 1.500"/></svg>
<svg style="left:426.15px;top:88.05px" width="16.5" height="16.5" viewBox="0 0 24 24"><path d="M11 3l10 5.500-10 5z" fill="#dddfdc" stroke="#c6c8c5" stroke-width="0.900"/><path d="M11 13l-5 9h10z" fill="#f1f1f1" stroke="#d3d3d3" stroke-width="0.800"/><path d="M9 3c-5 2-7 8-4 13" fill="none" stroke="#c9c9c9" stroke-width="1.100"/><path d="M9.500 1v4l-3.500-1.500z" fill="#c9c9c9"/></svg>
<svg style="left:447.2px;top:95.7px;" width="4.4" height="2.6" viewBox="0 0 4.4 2.6"><path d="M0 0h4.4L2.2 2.4z" fill="#a8a8a8"/></svg>
<svg style="left:456.75px;top:88.05px" width="16.5" height="16.5" viewBox="0 0 24 24"><path d="M3 7c0-3 4-4.500 8-4 3 .400 6-.800 9 .500 3 1.300 2.500 5 0 6.500-2 1-4 0-6 .500-2 .500-3 1.500-3.500 3.500-.400 2-1.500 1-3-.500-1.500-2-4.500-3-4.500-6.500z" fill="#d3d5d1" stroke="#aaaca8" stroke-width="0.9"/><path d="M2.500 16c0-2.500 2-4 4.500-4s4 1.500 4 4-1 6-4.500 6-4-3.500-4-6z" fill="#e4e1d6" stroke="#d0cdc2" stroke-width="0.800"/><path d="M14 14l7 7" stroke="#d2d2d2" stroke-width="1" stroke-dasharray="1.500 1.200"/></svg>
<svg style="left:482px;top:91px;" width="4" height="12" viewBox="0 0 4 12"><rect x="0" y="0" width="1" height="1" fill="#d5d5d5"/><rect x="0" y="2" width="1" height="1" fill="#d5d5d5"/><rect x="0" y="4" width="1" height="1" fill="#d5d5d5"/><rect x="0" y="6" width="1" height="1" fill="#d5d5d5"/><rect x="0" y="8" width="1" height="1" fill="#d5d5d5"/><rect x="0" y="10" width="1" height="1" fill="#d5d5d5"/><rect x="2" y="0" width="1" height="1" fill="#d5d5d5"/><rect x="2" y="2" width="1" height="1" fill="#d5d5d5"/><rect x="2" y="4" width="1" height="1" fill="#d5d5d5"/><rect x="2" y="6" width="1" height="1" fill="#d5d5d5"/><rect x="2" y="8" width="1" height="1" fill="#d5d5d5"/><rect x="2" y="10" width="1" height="1" fill="#d5d5d5"/></svg>
<svg style="left:490.95px;top:88.05px" width="16.5" height="16.5" viewBox="0 0 24 24"><g transform="rotate(-42 12 12)"><path d="M5.500 3.500v9a6.500 6.500 0 0 0 13 0v-9" fill="none" stroke="#8e0f14" stroke-width="6.400"/><path d="M5.500 3.500v9a6.500 6.500 0 0 0 13 0v-9" fill="none" stroke="#d71920" stroke-width="5.200"/><rect x="2.900" y="2.600" width="5.200" height="3.600" fill="#fff" stroke="#8e0f14" stroke-width="0.600"/><rect x="15.900" y="2.600" width="5.200" height="3.600" fill="#fff" stroke="#8e0f14" stroke-width="0.600"/></g></svg>
<svg style="left:513.75px;top:88.05px" width="16.5" height="16.5" viewBox="0 0 24 24"><path d="M4 2.500l7 15 6-13.500M11 17.500v4M7.500 10l-3 1M14 10.500l5 1M15.500 7.500l5-1" fill="none" stroke="#d0d3cf" stroke-width="1.100"/><g fill="#f2f2f2" stroke="#cbcecb" stroke-width="0.700"><circle cx="4" cy="2.500" r="1.400"/><circle cx="17" cy="4" r="1.400"/><circle cx="11" cy="17.500" r="1.400"/><circle cx="4.500" cy="11" r="1.200"/><circle cx="19.500" cy="11.500" r="1.200"/><circle cx="21" cy="6.300" r="1.200"/></g><path d="M19.500 20h4l-2 2.500z" fill="#888"/></svg>
<svg style="left:672.95px;top:88.05px" width="16.5" height="16.5" viewBox="0 0 24 24"><path d="M7.500 1.500l3.500 9.500 11-3.500M11 11l-1 11.500" fill="none" stroke="#4f9d4f" stroke-width="1.700" stroke-linecap="round"/><rect x="9" y="9" width="4" height="4" fill="#8e8e8e" stroke="#555" stroke-width="0.700"/></svg>
<svg style="left:696.65px;top:88.05px" width="16.5" height="16.5" viewBox="0 0 24 24"><path d="M10 3h9c2.500 0 4 2 3.500 4.500l-1 5c-.500 2-2 3-4 3h-4z" fill="#bdbdbd" stroke="#777" stroke-width="0.900"/><path d="M2.500 8c0-3.500 3-6 6.500-5.500 3 .500 4.500 3 4 6-.300 2 .500 3 2 4.500 2 2 2 5 0 7s-5.500 2-7.500-.500c-1.500-2-1-4-2.500-6s-3-3-3-5.500z" fill="#7cbd72" stroke="#3f7a3a" stroke-width="1"/><path d="M19.500 20.500h4l-2 2.500z" fill="#333"/></svg>
<svg style="left:719.45px;top:88.05px" width="16.5" height="16.5" viewBox="0 0 24 24"><path d="M3 3l18 18M21 3L3 21" stroke="#d0d3d0" stroke-width="1.600"/></svg>
<svg style="left:742.15px;top:88.05px" width="16.5" height="16.5" viewBox="0 0 24 24"><path d="M3 3l7 7-7 11M21 3l-7 7 7 11" fill="none" stroke="#d0d3d0" stroke-width="1.600"/><path d="M7 10c2-1.500 8-1.500 10 0-2 2-8 2-10 0z" fill="#ddd8c4" stroke="#cfcab6" stroke-width="0.800"/><path d="M9 5l3 4 3-4zM9 16l3-4 3 4z" fill="#e1dcc8"/></svg>
<svg style="left:762.8px;top:95.7px;" width="4.4" height="2.6" viewBox="0 0 4.4 2.6"><path d="M0 0h4.4L2.2 2.4z" fill="#a8a8a8"/></svg>
<svg style="left:773.15px;top:88.05px" width="16.5" height="16.5" viewBox="0 0 24 24"><path d="M5 20l4-11 10 9.500" fill="none" stroke="#d3d3d3" stroke-width="1.100"/><path d="M9 2l13 13-3 3-13-13z" fill="#dedacb" stroke="#d0ccbd" stroke-width="0.700" opacity="0.900"/><circle cx="5" cy="20" r="1.600" fill="#f2f2f2" stroke="#c9c9c9" stroke-width="0.700"/><circle cx="9" cy="9" r="1.600" fill="#f2f2f2" stroke="#c9c9c9" stroke-width="0.700"/></svg>
<svg style="left:1px;top:117px;" width="4" height="12" viewBox="0 0 4 12"><rect x="0" y="0" width="1" height="1" fill="#d5d5d5"/><rect x="0" y="2" width="1" height="1" fill="#d5d5d5"/><rect x="0" y="4" width="1" height="1" fill="#d5d5d5"/><rect x="0" y="6" width="1" height="1" fill="#d5d5d5"/><rect x="0" y="8" width="1" height="1" fill="#d5d5d5"/><rect x="0" y="10" width="1" height="1" fill="#d5d5d5"/><rect x="2" y="0" width="1" height="1" fill="#d5d5d5"/><rect x="2" y="2" width="1" height="1" fill="#d5d5d5"/><rect x="2" y="4" width="1" height="1" fill="#d5d5d5"/><rect x="2" y="6" width="1" height="1" fill="#d5d5d5"/><rect x="2" y="8" width="1" height="1" fill="#d5d5d5"/><rect x="2" y="10" width="1" height="1" fill="#d5d5d5"/></svg>
<svg style="left:9.65px;top:114.75px" width="16.5" height="16.5" viewBox="0 0 24 24"><rect x="2" y="2" width="20" height="17" fill="#e4e4e4" stroke="#444" stroke-width="1.100" stroke-dasharray="2.200 1.400"/><rect x="3.500" y="3.500" width="12" height="11.500" fill="#f7dc4a" stroke="#c8a415" stroke-width="0.900"/><path d="M11 9l10.500 5-4 1.400 3 4.300-1.900 1.300-3-4.300-2.800 3.200z" fill="#fff" stroke="#333" stroke-width="0.900" stroke-linejoin="round"/></svg>
<svg style="left:30.900000000000002px;top:122.4px;" width="4.4" height="2.6" viewBox="0 0 4.4 2.6"><path d="M0 0h4.4L2.2 2.4z" fill="#4a4a4a"/></svg>
<svg style="left:41.15px;top:114.75px" width="16.5" height="16.5" viewBox="0 0 24 24"><rect x="9" y="10" width="13" height="13" fill="#f7dc4a" stroke="#c8a415" stroke-width="0.900"/><text x="1" y="15" font-family="Liberation Serif,serif" font-size="24" font-weight="bold" fill="#4c2a6e">ε</text></svg>
<svg style="left:61.599999999999994px;top:122.4px;" width="4.4" height="2.6" viewBox="0 0 4.4 2.6"><path d="M0 0h4.4L2.2 2.4z" fill="#4a4a4a"/></svg>
<svg style="left:72.25px;top:114.75px" width="16.5" height="16.5" viewBox="0 0 24 24"><rect x="2" y="2" width="13" height="13" fill="#f7dc4a" stroke="#c8a415" stroke-width="0.900"/><rect x="7" y="6.500" width="13" height="13" fill="#f7dc4a" stroke="#c8a415" stroke-width="0.900"/><rect x="13" y="13" width="10" height="10" rx="2" fill="#dc2a34"/><circle cx="18" cy="18" r="3" fill="none" stroke="#fff" stroke-width="1.200"/><path d="M15.900 20.100l4.200-4.200" stroke="#fff" stroke-width="1.200"/></svg>
<svg style="left:92.7px;top:122.4px;" width="4.4" height="2.6" viewBox="0 0 4.4 2.6"><path d="M0 0h4.4L2.2 2.4z" fill="#4a4a4a"/></svg>
<svg style="left:102.35px;top:114.75px" width="16.5" height="16.5" viewBox="0 0 24 24"><rect x="2" y="2" width="14.500" height="14.500" fill="#f7dc4a" stroke="#c8a415" stroke-width="0.900"/><path d="M19 23c-2-3-3.500-5-3.500-7a3.500 3.500 0 0 1 7 0c0 2-1.500 4-3.500 7z" fill="#3d78b8" stroke="#2b5688" stroke-width="0.600"/><circle cx="19" cy="16" r="1.400" fill="#fff"/></svg>
<svg style="left:123.5px;top:122.4px;" width="4.4" height="2.6" viewBox="0 0 4.4 2.6"><path d="M0 0h4.4L2.2 2.4z" fill="#4a4a4a"/></svg>
<svg style="left:136px;top:117px;" width="4" height="12" viewBox="0 0 4 12"><rect x="0" y="0" width="1" height="1" fill="#d5d5d5"/><rect x="0" y="2" width="1" height="1" fill="#d5d5d5"/><rect x="0" y="4" width="1" height="1" fill="#d5d5d5"/><rect x="0" y="6" width="1" height="1" fill="#d5d5d5"/><rect x="0" y="8" width="1" height="1" fill="#d5d5d5"/><rect x="0" y="10" width="1" height="1" fill="#d5d5d5"/><rect x="2" y="0" width="1" height="1" fill="#d5d5d5"/><rect x="2" y="2" width="1" height="1" fill="#d5d5d5"/><rect x="2" y="4" width="1" height="1" fill="#d5d5d5"/><rect x="2" y="6" width="1" height="1" fill="#d5d5d5"/><rect x="2" y="8" width="1" height="1" fill="#d5d5d5"/><rect x="2" y="10" width="1" height="1" fill="#d5d5d5"/></svg>
<svg style="left:144.35px;top:114.75px" width="16.5" height="16.5" viewBox="0 0 24 24"><rect x="3" y="3" width="17" height="19" fill="#f3f3f3" stroke="#d2d2d2" stroke-width="0.900"/><path d="M3 13h17M12 13v9M3 3l9 10M12 3l-9 10M12 3v10" stroke="#d2d2d2" stroke-width="0.800" fill="none"/><path d="M19 1l3 1.500-8.500 16-3.500 2 .500-4z" fill="#e4dfd8" stroke="#cfcac3" stroke-width="0.700"/></svg>
<svg style="left:167.15px;top:114.75px" width="16.5" height="16.5" viewBox="0 0 24 24"><rect x="2" y="2" width="19" height="19" fill="#e2e0dc" stroke="#d0cec9" stroke-width="0.900"/><path d="M2 14h19M9 14v7M15 14v7M2 2l9 12 10-12M2 17.500h19" stroke="#cfcdc8" stroke-width="0.800" fill="none"/><path d="M11 9.500l10 4.700-3.800 1.400 2.800 4-1.800 1.200-2.800-4-2.700 3z" fill="#f2f2f2" stroke="#c9c9c9" stroke-width="0.900" stroke-linejoin="round"/></svg>
<svg style="left:187.9px;top:122.4px;" width="4.4" height="2.6" viewBox="0 0 4.4 2.6"><path d="M0 0h4.4L2.2 2.4z" fill="#a8a8a8"/></svg>
<svg style="left:198.15px;top:114.75px" width="16.5" height="16.5" viewBox="0 0 24 24"><rect x="2.500" y="3" width="6.500" height="6.500" fill="#f3f3f3" stroke="#cfcfcf" stroke-width="0.900"/><rect x="2.500" y="14" width="6.500" height="6.500" fill="#f3f3f3" stroke="#cfcfcf" stroke-width="0.900"/><path d="M2.500 3l6.500 6.500M9 3l-6.500 6.500M2.500 14l6.500 6.500M9 14l-6.500 6.500" stroke="#cfcfcf" stroke-width="0.800"/><path d="M12 9l4.500-7 4.500 7z" fill="#f3f3f3" stroke="#cfcfcf" stroke-width="0.900"/><text x="11.500" y="21.500" font-family="Liberation Serif,serif" font-size="15" fill="#c9c9c9">ε</text></svg>
<svg style="left:220.45px;top:114.75px" width="16.5" height="16.5" viewBox="0 0 24 24"><rect x="2.500" y="3" width="18" height="18.500" fill="#eeeeea" stroke="#d0d0cc" stroke-width="0.900"/><path d="M2.500 3l9 15 9-15M2.500 21.500l9-3.500 9 3.500M2.500 3v18.500M11.500 18v3.500" stroke="#cfcfcb" stroke-width="0.900" fill="none"/><g fill="#f6f1de" stroke="#d6cfb4" stroke-width="0.700"><circle cx="2.500" cy="3" r="1.300"/><circle cx="20.500" cy="3" r="1.300"/><circle cx="11.500" cy="18" r="1.300"/><circle cx="8" cy="2.500" r="1.100"/><circle cx="15" cy="2.500" r="1.100"/></g></svg>
<svg style="left:241.70000000000002px;top:122.4px;" width="4.4" height="2.6" viewBox="0 0 4.4 2.6"><path d="M0 0h4.4L2.2 2.4z" fill="#a8a8a8"/></svg>
<svg style="left:254px;top:117px;" width="4" height="12" viewBox="0 0 4 12"><rect x="0" y="0" width="1" height="1" fill="#d5d5d5"/><rect x="0" y="2" width="1" height="1" fill="#d5d5d5"/><rect x="0" y="4" width="1" height="1" fill="#d5d5d5"/><rect x="0" y="6" width="1" height="1" fill="#d5d5d5"/><rect x="0" y="8" width="1" height="1" fill="#d5d5d5"/><rect x="0" y="10" width="1" height="1" fill="#d5d5d5"/><rect x="2" y="0" width="1" height="1" fill="#d5d5d5"/><rect x="2" y="2" width="1" height="1" fill="#d5d5d5"/><rect x="2" y="4" width="1" height="1" fill="#d5d5d5"/><rect x="2" y="6" width="1" height="1" fill="#d5d5d5"/><rect x="2" y="8" width="1" height="1" fill="#d5d5d5"/><rect x="2" y="10" width="1" height="1" fill="#d5d5d5"/></svg>
<svg style="left:263.45px;top:114.75px" width="16.5" height="16.5" viewBox="0 0 24 24"><g transform="translate(0 -2)"><rect x="2" y="8" width="2.500" height="6.500" fill="#7fa8db" stroke="#33609c" stroke-width="0.700"/><rect x="4.500" y="5.500" width="5" height="11.500" rx="1" fill="#6e9bd3" stroke="#33609c" stroke-width="0.900"/><rect x="9.500" y="7.500" width="12.500" height="7.500" rx="1" fill="#b9d2f0" stroke="#33609c" stroke-width="0.900"/><path d="M12.500 7.500v7.500M15.500 7.500v7.500M18.500 7.500v7.500" stroke="#5d8fca" stroke-width="0.800"/><path d="M7 17v3" stroke="#33609c" stroke-width="1.300"/></g></svg>
<svg style="left:285.45px;top:114.75px" width="16.5" height="16.5" viewBox="0 0 24 24"><circle cx="12" cy="12" r="7" fill="none" stroke="#d2d2d2" stroke-width="1.100"/><path d="M12 1.500v21M1.500 12h21" stroke="#d2d2d2" stroke-width="1.300"/></svg>
<div style="left:307.04999999999995px;top:116.5px;width:0.7px;height:13px;background:#dfdfdf;"></div>
<svg style="left:312.75px;top:114.75px" width="16.5" height="16.5" viewBox="0 0 24 24"><rect x="2.500" y="2.500" width="15" height="15" fill="#f5f5f5" stroke="#6f6f6f" stroke-width="1"/><circle cx="12" cy="12.500" r="6.500" fill="none" stroke="#33609c" stroke-width="1.100"/><path d="M12 3v20M2.500 12.500h20" stroke="#3d78c8" stroke-width="1.600"/><path d="M19.500 20.500h4l-2 2.500z" fill="#333"/></svg>
<svg style="left:336.35px;top:114.75px" width="16.5" height="16.5" viewBox="0 0 24 24"><circle cx="9.500" cy="9" r="6" fill="none" stroke="#d0d0d0" stroke-width="1"/><path d="M9.500 1v17M1 9h17" stroke="#d0d0d0" stroke-width="1.200"/><path d="M5 21l3-8" stroke="#d0d0d0" stroke-width="0.900" stroke-dasharray="1.500 1.200"/><rect x="12.5" y="12.5" width="10.500" height="10.500" rx="1.500" fill="#c8c8c8"/><path d="M14.700 17.700l2.200-2.200v1.500h1.700v-1.500l2.200 2.200-2.200 2.200v-1.500h-1.700v1.500z" fill="#f6f6f6"/></svg>
<svg style="left:358.35px;top:114.75px" width="16.5" height="16.5" viewBox="0 0 24 24"><path d="M1.500 8c0-4 4-6.500 8.500-6 3.500.400 5.500-.600 8.500.600 3.500 1.400 3.500 8 1 11-2 2.400-5 2-7.500.800-2-1-3.500 1-6 .400-3-.700-4.500-3.400-4.500-6.800z" fill="#7db87a" stroke="#3f7a3a" stroke-width="0.9"/><rect x="13.7" y="13.9" width="9.6" height="9.6" rx="1.7" fill="#c9a20c"/><path d="M18.5 15.399999999999999v6.6M15.7 16.8l5.6 3.8M21.3 16.8l-5.6 3.8" stroke="#fff" stroke-width="1.15" stroke-linecap="round"/><circle cx="18.5" cy="18.7" r="1.3" fill="#fff"/></svg>
<svg style="left:380.55px;top:114.75px" width="16.5" height="16.5" viewBox="0 0 24 24"><path d="M4 3v10c0 3 2 5 5 5h3" fill="none" stroke="#d2d2d2" stroke-width="1" stroke-dasharray="1.700 1.500"/><rect x="2.700" y="1.700" width="2.600" height="2.600" fill="#f3f3f3" stroke="#cfcfcf" stroke-width="0.700"/><path d="M12 10l10 9-2.500 2.500-9-9z" fill="#e0dccf" stroke="#d0ccbf" stroke-width="0.700"/></svg>
<div style="left:402.65px;top:116.5px;width:0.7px;height:13px;background:#dfdfdf;"></div>
<svg style="left:408.15px;top:114.75px" width="16.5" height="16.5" viewBox="0 0 24 24"><circle cx="12" cy="12" r="10.300" fill="#5d8fca" stroke="#33609c" stroke-width="1"/><circle cx="12.800" cy="6.500" r="1.700" fill="#fff"/><path d="M9.500 10h4.300l-1.800 7.200h2l-.400 1.600h-4.800l.400-1.600h1.300l1.400-5.600h-1.800z" fill="#fff"/></svg>
<svg style="left:430.95px;top:114.75px" width="16.5" height="16.5" viewBox="0 0 24 24"><path d="M10 10L20.500 20.500" stroke="#4a3a12" stroke-width="5" stroke-linecap="round"/><path d="M10 10L20.500 20.500" stroke="#efcb5e" stroke-width="3.400" stroke-linecap="round"/><path d="M18.500 18.500l2.200 2.200" stroke="#555" stroke-width="3.600" stroke-linecap="round"/><path d="M7.390 2.520A4.500 4.500 0 1 1 2.520 7.390" fill="none" stroke="#3f3f3f" stroke-width="4.200"/><path d="M7.390 2.520A4.500 4.500 0 1 1 2.520 7.390" fill="none" stroke="#e2e2e2" stroke-width="2.800"/></svg>
<svg style="left:456px;top:117px;" width="4" height="12" viewBox="0 0 4 12"><rect x="0" y="0" width="1" height="1" fill="#d5d5d5"/><rect x="0" y="2" width="1" height="1" fill="#d5d5d5"/><rect x="0" y="4" width="1" height="1" fill="#d5d5d5"/><rect x="0" y="6" width="1" height="1" fill="#d5d5d5"/><rect x="0" y="8" width="1" height="1" fill="#d5d5d5"/><rect x="0" y="10" width="1" height="1" fill="#d5d5d5"/><rect x="2" y="0" width="1" height="1" fill="#d5d5d5"/><rect x="2" y="2" width="1" height="1" fill="#d5d5d5"/><rect x="2" y="4" width="1" height="1" fill="#d5d5d5"/><rect x="2" y="6" width="1" height="1" fill="#d5d5d5"/><rect x="2" y="8" width="1" height="1" fill="#d5d5d5"/><rect x="2" y="10" width="1" height="1" fill="#d5d5d5"/></svg>
<svg style="left:464.75px;top:114.75px" width="16.5" height="16.5" viewBox="0 0 24 24"><rect x="2" y="2.500" width="19" height="14" fill="#5d8fca" stroke="#33609c" stroke-width="1.100"/><text x="11.500" y="12.500" font-family="Liberation Sans,sans-serif" font-size="7" text-anchor="middle" fill="#2b466b">GML</text><path d="M13.500 12l9 4.300-3.500 1.300 2.500 3.700-1.700 1.100-2.500-3.700-2.500 2.800z" fill="#9a9a9a" stroke="#444" stroke-width="0.800" stroke-linejoin="round"/></svg>
<svg style="left:490px;top:117px;" width="4" height="12" viewBox="0 0 4 12"><rect x="0" y="0" width="1" height="1" fill="#d5d5d5"/><rect x="0" y="2" width="1" height="1" fill="#d5d5d5"/><rect x="0" y="4" width="1" height="1" fill="#d5d5d5"/><rect x="0" y="6" width="1" height="1" fill="#d5d5d5"/><rect x="0" y="8" width="1" height="1" fill="#d5d5d5"/><rect x="0" y="10" width="1" height="1" fill="#d5d5d5"/><rect x="2" y="0" width="1" height="1" fill="#d5d5d5"/><rect x="2" y="2" width="1" height="1" fill="#d5d5d5"/><rect x="2" y="4" width="1" height="1" fill="#d5d5d5"/><rect x="2" y="6" width="1" height="1" fill="#d5d5d5"/><rect x="2" y="8" width="1" height="1" fill="#d5d5d5"/><rect x="2" y="10" width="1" height="1" fill="#d5d5d5"/></svg>
<svg style="left:498.55px;top:114.75px" width="16.5" height="16.5" viewBox="0 0 24 24"><path d="M3 17l9-4 9 4-9 5z" fill="#2fa39a"/><path d="M3 17v2l9 4.500 9-4.500v-2l-9 5z" fill="#1f7d76"/><path d="M4 9l8-3.500 8 3.500-8 4z" fill="none" stroke="#2fa39a" stroke-width="1.200"/><path d="M4 5l8-3.500 8 3.500-8 4z" fill="none" stroke="#2fa39a" stroke-width="1.200"/><path d="M4 13l8-3.500 8 3.500" fill="none" stroke="#2fa39a" stroke-width="1.200"/><path d="M10 18c3-1 5-4 4-8l2-.500c1.500 5-1 9-4 10.500z" fill="#f29a1f" stroke="#b96d0c" stroke-width="0.500"/></svg>
<svg style="left:523px;top:117px;" width="4" height="12" viewBox="0 0 4 12"><rect x="0" y="0" width="1" height="1" fill="#d5d5d5"/><rect x="0" y="2" width="1" height="1" fill="#d5d5d5"/><rect x="0" y="4" width="1" height="1" fill="#d5d5d5"/><rect x="0" y="6" width="1" height="1" fill="#d5d5d5"/><rect x="0" y="8" width="1" height="1" fill="#d5d5d5"/><rect x="0" y="10" width="1" height="1" fill="#d5d5d5"/><rect x="2" y="0" width="1" height="1" fill="#d5d5d5"/><rect x="2" y="2" width="1" height="1" fill="#d5d5d5"/><rect x="2" y="4" width="1" height="1" fill="#d5d5d5"/><rect x="2" y="6" width="1" height="1" fill="#d5d5d5"/><rect x="2" y="8" width="1" height="1" fill="#d5d5d5"/><rect x="2" y="10" width="1" height="1" fill="#d5d5d5"/></svg>
<svg style="left:531.95px;top:114.75px" width="16.5" height="16.5" viewBox="0 0 24 24"><circle cx="9" cy="15.500" r="3.400" fill="#f18a1c"/><circle cx="16.500" cy="9.500" r="3.400" fill="#f18a1c"/><circle cx="5.500" cy="6" r="1.500" fill="#3fa33f"/><circle cx="11" cy="8.500" r="1.500" fill="#3fa33f"/><circle cx="13" cy="3.500" r="1.500" fill="#3fa33f"/><circle cx="18" cy="18" r="1.500" fill="#3fa33f"/></svg>
<div style="left:554.35px;top:116.5px;width:0.7px;height:13px;background:#dfdfdf;"></div>
<svg style="left:559.55px;top:114.75px" width="16.5" height="16.5" viewBox="0 0 24 24"><path d="M21.500 9v-5.500c0-1-.700-1.700-1.700-1.700h-15.600c-1 0-1.700.700-1.700 1.700v15c0 1 .700 1.700 1.700 1.700h6" fill="none" stroke="#b9b9b9" stroke-width="1.700"/><path d="M6 6h12" stroke="#b9b9b9" stroke-width="1.500"/><path d="M6 10h2" stroke="#b9b9b9" stroke-width="1.300"/><circle cx="14.500" cy="13.500" r="4.200" fill="#e2e9ef" stroke="#b9b9b9" stroke-width="1.500"/><path d="M17.500 17l4.500 4.500" stroke="#b9b9b9" stroke-width="2"/></svg>
<svg style="left:582.65px;top:114.75px" width="16.5" height="16.5" viewBox="0 0 24 24"><path d="M10 5h-4.500c-1.500 0-2.500 1-2.500 2.500v11c0 1.500 1 2.500 2.500 2.500h11c1.500 0 2.500-1 2.500-2.500v-4.500" fill="none" stroke="#bdbdbd" stroke-width="2.300"/><path d="M13 2.500h8.500v8.500M21 3l-9.500 9.500" fill="none" stroke="#bdbdbd" stroke-width="2.400"/></svg>
<svg style="left:607px;top:117px;" width="4" height="12" viewBox="0 0 4 12"><rect x="0" y="0" width="1" height="1" fill="#d5d5d5"/><rect x="0" y="2" width="1" height="1" fill="#d5d5d5"/><rect x="0" y="4" width="1" height="1" fill="#d5d5d5"/><rect x="0" y="6" width="1" height="1" fill="#d5d5d5"/><rect x="0" y="8" width="1" height="1" fill="#d5d5d5"/><rect x="0" y="10" width="1" height="1" fill="#d5d5d5"/><rect x="2" y="0" width="1" height="1" fill="#d5d5d5"/><rect x="2" y="2" width="1" height="1" fill="#d5d5d5"/><rect x="2" y="4" width="1" height="1" fill="#d5d5d5"/><rect x="2" y="6" width="1" height="1" fill="#d5d5d5"/><rect x="2" y="8" width="1" height="1" fill="#d5d5d5"/><rect x="2" y="10" width="1" height="1" fill="#d5d5d5"/></svg>
<svg style="left:615.75px;top:114.75px" width="16.5" height="16.5" viewBox="0 0 24 24"><path d="M6 12h12v10h-12z" fill="#111"/><path d="M12 12v-9M9.500 5.500l2.500-3 2.500 3" fill="none" stroke="#111" stroke-width="1.500"/><circle cx="12" cy="17" r="2.800" fill="none" stroke="#fff" stroke-width="1.100"/><path d="M12 15v2h1.500" stroke="#fff" stroke-width="0.800" fill="none"/><path d="M3 22l18-14" stroke="#e4e4e4" stroke-width="0.800" opacity="0.700"/></svg>
<svg style="left:638.05px;top:114.75px" width="16.5" height="16.5" viewBox="0 0 24 24"><rect x="2" y="2" width="16.500" height="13.500" fill="none" stroke="#111" stroke-width="2.200" stroke-dasharray="3.200 1.600"/><rect x="6" y="6" width="9" height="6.500" fill="#222"/><path d="M12.500 11l9 4.300-3.500 1.300 2.500 3.700-1.700 1.100-2.500-3.700-2.500 2.800z" fill="#fff" stroke="#111" stroke-width="1" stroke-linejoin="round"/></svg>
<svg style="left:661.15px;top:114.75px" width="16.5" height="16.5" viewBox="0 0 24 24"><path d="M2 7.500h15.500" stroke="#111" stroke-width="2.600"/><path d="M15 2.500l6.500 5-6.500 5z" fill="#111"/><path d="M22 16.500h-15.500" stroke="#111" stroke-width="2.600"/><path d="M9 11.500l-6.500 5 6.500 5z" fill="#111"/></svg>
<svg style="left:683.65px;top:114.75px" width="16.5" height="16.5" viewBox="0 0 24 24"><path d="M12 2v14" stroke="#111" stroke-width="2.200"/><path d="M5.500 10.500l6.500 6.500 6.500-6.500" fill="none" stroke="#111" stroke-width="2.200"/><path d="M3 21.500h18" stroke="#111" stroke-width="2.200"/></svg>
<div style="left:528.1px;top:32.400000000000006px;width:21.4px;height:20.6px;background:#e1e1e1;border:0.7px solid #b4b4b4;box-sizing:border-box;border-radius:2px;"></div>
<svg style="left:530.45px;top:34.45px" width="16.5" height="16.5" viewBox="0 0 24 24"><circle cx="10" cy="9.500" r="8" fill="#5d8fca" stroke="#33609c" stroke-width="0.900"/><circle cx="10.500" cy="5.200" r="1.400" fill="#fff"/><path d="M8.300 8.500h3v5.500h1.200v1.400h-4.500v-1.400h1.300v-4.100h-1z" fill="#fff"/><path d="M12.500 11.500l9.500 4.500-3.800 1.300 2.800 4-1.700 1.200-2.800-4-2.600 3z" fill="#fff" stroke="#333" stroke-width="0.900" stroke-linejoin="round"/></svg>
<div style="left:533.0px;top:86.1px;width:22.2px;height:20.4px;background:#dedede;border:0.7px solid #d2d2d2;box-sizing:border-box;border-radius:2px;"></div>
<svg style="left:536.15px;top:88.05px" width="16.5" height="16.5" viewBox="0 0 24 24"><rect x="6" y="5" width="3" height="3" fill="none" stroke="#bdbdbd" stroke-width="0.900"/><rect x="15" y="7" width="3" height="3" fill="none" stroke="#bdbdbd" stroke-width="0.900"/><rect x="10.500" y="14.500" width="3" height="3" fill="none" stroke="#bdbdbd" stroke-width="0.900"/><path d="M19.500 20h4l-2 2.500z" fill="#777"/></svg>
<div style="left:556.3px;top:89.2px;width:54.5px;height:14.3px;background:#f7f7f7;border:0.7px solid #bdbdbd;box-sizing:border-box;border-radius:1.8px;box-shadow:inset 0 0.8px 1px rgba(0,0,0,0.08);"></div>
<span class="t" id="t189" style="left:560.3px;top:96.6px;font-size:6.8px;font-weight:normal;font-style:normal;color:#777;transform:translateY(-50%);">12</span>
<svg style="left:603px;top:90.6px;" width="6" height="12" viewBox="0 0 6 12"><path d="M1 4.6L3 2l2 2.600zM1 7.400L3 10l2-2.600z" fill="#8a8a8a"/></svg>
<div style="left:612.8px;top:89.2px;width:56.5px;height:14.3px;background:#f7f7f7;border:0.7px solid #bdbdbd;box-sizing:border-box;border-radius:1.8px;box-shadow:inset 0 0.8px 1px rgba(0,0,0,0.08);"></div>
<span class="t" id="t192" style="left:616.3px;top:96.8px;font-size:6.8px;font-weight:normal;font-style:normal;color:#777;transform:translateY(-50%);">px</span>
<svg style="left:660px;top:94.8px;" width="5" height="4" viewBox="0 0 5 4"><path d="M0.500 0.500h4L2.500 3z" fill="#8a8a8a"/></svg>
<span class="t" id="t194" style="left:1.3px;top:144.3px;font-size:8.3px;font-weight:normal;font-style:normal;color:#111;transform:translateY(-50%) scaleX(0.8552);">Layers</span>
<svg style="left:264.6px;top:138.8px;" width="20" height="9.5" viewBox="0 0 20 9.5"><rect x="0.600" y="0.600" width="7.400" height="7.600" rx="1.800" fill="#e4e4e4" stroke="#8a8a8a" stroke-width="0.800"/><rect x="2.400" y="3.600" width="3" height="2.800" fill="#f4f4f4" stroke="#666" stroke-width="0.600"/><rect x="3.600" y="2.300" width="2.800" height="2.600" fill="#f4f4f4" stroke="#666" stroke-width="0.600"/><rect x="10.400" y="0.600" width="7.400" height="7.600" rx="1.800" fill="#e4e4e4" stroke="#8a8a8a" stroke-width="0.800"/><path d="M12.300 2.600l3.600 3.600m0-3.600l-3.600 3.600" stroke="#333" stroke-width="1.100"/></svg>
<svg style="left:3.0px;top:154.0px" width="12" height="12" viewBox="0 0 24 24"><path d="M3 12l9-6 3 1-8 8z" fill="#d9432f" stroke="#9a2a1a" stroke-width="0.600"/><path d="M5 9l8-5 2 3-8 6z" fill="#f3c13a" stroke="#b98b12" stroke-width="0.600"/><path d="M4 8l7-4 1 2-7 5z" fill="#3f78c4"/><path d="M12 11l9-8 1.500 2-8 8.500z" fill="#e2a24a" stroke="#8a5a1a" stroke-width="0.700"/><path d="M6 19c1-3 3-5 6-8l2.500 2c-2 3-5 5-8.500 6z" fill="#c87b2a" stroke="#8a5a1a" stroke-width="0.600"/></svg>
<svg style="left:20.3px;top:154.0px" width="12" height="12" viewBox="0 0 24 24"><path d="M3 8l6-3v14l-6 3z" fill="#ededed" stroke="#8c8c8c" stroke-width="1.100" stroke-linejoin="round"/><path d="M9 5l6-2.500v14l-6 2.500z" fill="#fafafa" stroke="#8c8c8c" stroke-width="1.100" stroke-linejoin="round"/><path d="M15 2.500l5 2.500v14l-5-2.500z" fill="#e4e4e4" stroke="#8c8c8c" stroke-width="1.100" stroke-linejoin="round"/><rect x="12.800" y="1.500" width="3.200" height="12" rx="0.800" fill="#5b7fa9"/><rect x="13" y="14" width="9.500" height="9.500" rx="1.500" fill="#3f9a4a"/><path d="M17.750 15.800v5.900M14.800 18.750h5.900" stroke="#fff" stroke-width="1.700"/></svg>
<svg style="left:37.5px;top:154.0px" width="12" height="12" viewBox="0 0 24 24"><path d="M1.500 11c4-7 15-7 19 0-4 7-15 7-19 0z" fill="#f4f4f4" stroke="#9a9a9a" stroke-width="1.100"/><circle cx="11" cy="11" r="4.200" fill="#4a7cc0" stroke="#2c5288" stroke-width="0.800"/><circle cx="11" cy="11" r="1.600" fill="#1d2f4a"/><path d="M17 19.500h5l-2.500 3z" fill="#444"/></svg>
<svg style="left:54.8px;top:154.0px" width="12" height="12" viewBox="0 0 24 24"><path d="M2 3.500h19l-7 9v9l-5-2.500v-6.500z" fill="#3f8ad0" stroke="#2a62a0" stroke-width="0.800" stroke-linejoin="round"/><rect x="2" y="1.500" width="19" height="3.500" rx="1" fill="#f0d23c" stroke="#c0a010" stroke-width="0.600"/><path d="M17 19.500h5l-2.500 3z" fill="#444"/></svg>
<svg style="left:72.3px;top:154.0px" width="12" height="12" viewBox="0 0 24 24"><text x="0" y="16" font-family="Liberation Serif,serif" font-size="27" fill="#5e2a84">ε</text><path d="M11 13h9v8h-2.500v-5h-4v5h-2.500z" fill="#f3f3f3" stroke="#8f8f8f" stroke-width="0.800"/></svg>
<svg style="left:97.5px;top:154.0px" width="12" height="12" viewBox="0 0 24 24"><rect x="2.500" y="2" width="17" height="18" fill="#f3f3f3" stroke="#8a8a8a" stroke-width="0.900" stroke-dasharray="2 1.200"/><rect x="3.500" y="5" width="3" height="3" fill="#f29a1f"/><rect x="3.500" y="15" width="3" height="3" fill="#f29a1f"/><path d="M10 3h6v9h3.500l-6.500 8-6.500-8h3.500z" fill="#3f78c4" stroke="#2c5288" stroke-width="0.700" transform="translate(1.500 1)"/></svg>
<svg style="left:114.3px;top:154.0px" width="12" height="12" viewBox="0 0 24 24"><rect x="2.500" y="3" width="17" height="18" fill="#f3f3f3" stroke="#8a8a8a" stroke-width="0.900" stroke-dasharray="2 1.200"/><rect x="3.500" y="8" width="3" height="3" fill="#f29a1f"/><rect x="3.500" y="16" width="3" height="3" fill="#f29a1f"/><path d="M10 20h6v-9h3.500l-6.500-8-6.500 8h3.500z" fill="#3f78c4" stroke="#2c5288" stroke-width="0.700" transform="translate(1.500 -1)"/></svg>
<svg style="left:131.4px;top:154.0px" width="12" height="12" viewBox="0 0 24 24"><rect x="2.500" y="2.500" width="15" height="15" rx="1.500" fill="#fbfbfb" stroke="#777" stroke-width="1.200"/><rect x="12.500" y="15.500" width="10" height="5" rx="2" fill="#e02a36"/><path d="M14.500 18h6" stroke="#fff" stroke-width="1.300"/></svg>
<svg style="left:87.5px;top:159px;" width="5" height="3" viewBox="0 0 5 3"><path d="M0.2 0.2h4.2L2.3 2.6z" fill="#444"/></svg>
<div style="left:-0.4px;top:171.3px;width:284.6px;height:492.6px;background:#fff;border:0.7px solid #b4b4b4;box-sizing:border-box;"></div>
<svg style="left:2.6999999999999997px;top:177.2px;" width="5.4" height="3.2" viewBox="0 0 5.4 3.2"><path d="M0 0h5.200L2.600 3z" fill="#444"/></svg>
<div style="left:14.3px;top:174.1px;width:9.2px;height:9.2px;background:#fff;border:0.7px solid #b4b4b4;box-sizing:border-box;border-radius:1px;"></div>
<svg style="left:15.5px;top:175.1px;" width="7" height="7" viewBox="0 0 7 7"><path d="M1 3.8l1.9 2.2L6 0.9" fill="none" stroke="#111" stroke-width="1.25" stroke-linecap="round" stroke-linejoin="round"/></svg>
<svg style="left:26.9px;top:172.4px" width="12" height="12" viewBox="0 0 24 24"><path d="M3 22.500l6-3 6-2.500 6 2.500" fill="none" stroke="#b4b4b4" stroke-width="1.600"/><path d="M3 8l6-3v14l-6 3z" fill="#f1f1f1" stroke="#8c8c8c" stroke-width="1.100" stroke-linejoin="round"/><path d="M9 5l6-2.500v14l-6 2.500z" fill="#fdfdfd" stroke="#8c8c8c" stroke-width="1.100" stroke-linejoin="round"/><path d="M15 2.500l6 2.500v14l-6-2.500z" fill="#e9e9e9" stroke="#8c8c8c" stroke-width="1.100" stroke-linejoin="round"/><rect x="12.800" y="1.500" width="3.200" height="12.500" rx="0.800" fill="#5b7fa9"/></svg>
<div class="c" style="left:43.5px;width:239.8px"><span class="t" id="t210" style="left:43.5px;top:179.64999999999998px;font-size:8.2px;font-weight:normal;font-style:normal;color:#111;transform:translateY(-50%) scaleX(0.9275);">BE_Wallonia</span></div>
<svg style="left:17.7px;top:188.61999999999998px;" width="3" height="5" viewBox="0 0 3 5"><path d="M0 0v5L2.600 2.500z" fill="#4a4a4a"/></svg>
<div style="left:27.9px;top:186.51999999999998px;width:9.2px;height:9.2px;background:#fff;border:0.7px solid #c8c8c8;box-sizing:border-box;border-radius:1px;"></div>
<svg style="left:40.5px;top:184.82px" width="12" height="12" viewBox="0 0 24 24"><path d="M3 22.500l6-3 6-2.500 6 2.500" fill="none" stroke="#b4b4b4" stroke-width="1.600"/><path d="M3 8l6-3v14l-6 3z" fill="#f1f1f1" stroke="#8c8c8c" stroke-width="1.100" stroke-linejoin="round"/><path d="M9 5l6-2.500v14l-6 2.500z" fill="#fdfdfd" stroke="#8c8c8c" stroke-width="1.100" stroke-linejoin="round"/><path d="M15 2.500l6 2.500v14l-6-2.500z" fill="#e9e9e9" stroke="#8c8c8c" stroke-width="1.100" stroke-linejoin="round"/><rect x="12.800" y="1.500" width="3.200" height="12.500" rx="0.800" fill="#5b7fa9"/></svg>
<div class="c" style="left:57.099999999999994px;width:226.20000000000002px"><span class="t" id="t214" style="left:57.099999999999994px;top:192.06999999999996px;font-size:8.2px;font-weight:normal;font-style:normal;color:#111;transform:translateY(-50%) scaleX(0.8991);">RP_AP_ELE_BE-Wallonia_2023_test2</span></div>
<div style="left:27.9px;top:198.94px;width:9.2px;height:9.2px;background:#fff;border:0.7px solid #c8c8c8;box-sizing:border-box;border-radius:1px;"></div>
<div style="left:42.099999999999994px;top:198.23999999999998px;width:10.8px;height:10.8px;background:#729b6f;border:0.7px solid #6a6a6a;box-sizing:border-box;"></div>
<div class="c" style="left:57.099999999999994px;width:226.20000000000002px"><span class="t" id="t217" style="left:57.099999999999994px;top:204.48999999999998px;font-size:8.2px;font-weight:normal;font-style:italic;color:#63717f;transform:translateY(-50%) scaleX(0.9469);">SIGEC_GSA_AGRICULTURAL_PARCEL__2023 [292638]</span></div>
<svg style="left:16.299999999999997px;top:214.45999999999998px;" width="5.4" height="3.2" viewBox="0 0 5.4 3.2"><path d="M0 0h5.200L2.600 3z" fill="#444"/></svg>
<div style="left:27.9px;top:211.35999999999999px;width:9.2px;height:9.2px;background:#fff;border:0.7px solid #b4b4b4;box-sizing:border-box;border-radius:1px;"></div>
<svg style="left:29.099999999999998px;top:212.35999999999999px;" width="7" height="7" viewBox="0 0 7 7"><path d="M1 3.8l1.9 2.2L6 0.9" fill="none" stroke="#111" stroke-width="1.25" stroke-linecap="round" stroke-linejoin="round"/></svg>
<svg style="left:40.5px;top:209.66px" width="12" height="12" viewBox="0 0 24 24"><path d="M3 22.500l6-3 6-2.500 6 2.500" fill="none" stroke="#b4b4b4" stroke-width="1.600"/><path d="M3 8l6-3v14l-6 3z" fill="#f1f1f1" stroke="#8c8c8c" stroke-width="1.100" stroke-linejoin="round"/><path d="M9 5l6-2.500v14l-6 2.500z" fill="#fdfdfd" stroke="#8c8c8c" stroke-width="1.100" stroke-linejoin="round"/><path d="M15 2.500l6 2.500v14l-6-2.500z" fill="#e9e9e9" stroke="#8c8c8c" stroke-width="1.100" stroke-linejoin="round"/><rect x="12.800" y="1.500" width="3.200" height="12.500" rx="0.800" fill="#5b7fa9"/></svg>
<div class="c" style="left:57.099999999999994px;width:226.20000000000002px"><span class="t" id="t222" style="left:57.099999999999994px;top:216.90999999999997px;font-size:8.2px;font-weight:normal;font-style:normal;color:#111;transform:translateY(-50%) scaleX(0.8574);">SIGEC_LPIS_2023</span></div>
<div style="left:41.5px;top:223.78px;width:9.2px;height:9.2px;background:#fff;border:0.7px solid #c8c8c8;box-sizing:border-box;border-radius:1px;"></div>
<svg style="left:55.7px;top:223.07999999999998px;" width="10.8" height="10.8" viewBox="0 0 10.8 10.8"><rect x="0.350" y="0.350" width="10.100" height="10.100" fill="#fff" stroke="#6a6a6a" stroke-width="0.700"/><path d="M0.500 5.200l4.700-4.700M0.500 10.300l9.800-9.800M5.600 10.300l4.700-4.700" stroke="#555" stroke-width="0.850"/></svg>
<div class="c" style="left:70.7px;width:212.60000000000002px"><span class="t" id="t225" style="left:70.7px;top:229.32999999999998px;font-size:8.2px;font-weight:normal;font-style:italic;color:#63717f;transform:translateY(-50%) scaleX(0.9516);">SIGEC_LPIS_AGRILULTURAL_AREAL__2023 [341242]</span></div>
<div style="left:41.5px;top:236.2px;width:9.2px;height:9.2px;background:#fff;border:0.7px solid #c8c8c8;box-sizing:border-box;border-radius:1px;"></div>
<svg style="left:55.7px;top:235.49999999999997px;" width="10.8" height="10.8" viewBox="0 0 10.8 10.8"><circle cx="5.400" cy="5.400" r="2.750" fill="#91522d" stroke="#5f3018" stroke-width="0.500"/></svg>
<div class="c" style="left:70.7px;width:212.60000000000002px"><span class="t" id="t228" style="left:70.7px;top:241.74999999999997px;font-size:8.2px;font-weight:normal;font-style:italic;color:#63717f;transform:translateY(-50%) scaleX(0.9432);">SIGEC_LPIS_LANDSCAPEFEATURE__2023 [7633]</span></div>
<div style="left:41.5px;top:248.61999999999998px;width:9.2px;height:9.2px;background:#fff;border:0.7px solid #c8c8c8;box-sizing:border-box;border-radius:1px;"></div>
<svg style="left:55.7px;top:247.91999999999996px;" width="10.8" height="10.8" viewBox="0 0 10.8 10.8"><path d="M0.200 5.500h10.400" stroke="#3b8ed0" stroke-width="1.100"/></svg>
<div class="c" style="left:70.7px;width:212.60000000000002px"><span class="t" id="t231" style="left:70.7px;top:254.16999999999996px;font-size:8.2px;font-weight:normal;font-style:italic;color:#63717f;transform:translateY(-50%) scaleX(0.9468);">SIGEC_LPIS_LANDSCAPEFEATURE__2023 [13392]</span></div>
<div style="left:41.5px;top:261.03999999999996px;width:9.2px;height:9.2px;background:#fff;border:0.7px solid #c8c8c8;box-sizing:border-box;border-radius:1px;"></div>
<div style="left:55.7px;top:260.34px;width:10.8px;height:10.8px;background:#f3a6b2;border:0.7px solid #6a6a6a;box-sizing:border-box;"></div>
<div class="c" style="left:70.7px;width:212.60000000000002px"><span class="t" id="t234" style="left:70.7px;top:266.59px;font-size:8.2px;font-weight:normal;font-style:italic;color:#63717f;transform:translateY(-50%) scaleX(0.9432);">SIGEC_LPIS_LANDSCAPEFEATURE__2023 [9958]</span></div>
<div style="left:41.5px;top:273.46px;width:9.2px;height:9.2px;background:#fff;border:0.7px solid #c8c8c8;box-sizing:border-box;border-radius:1px;"></div>
<div style="left:55.7px;top:272.76px;width:10.8px;height:10.8px;background:#becf50;border:0.7px solid #6a6a6a;box-sizing:border-box;"></div>
<div class="c" style="left:70.7px;width:212.60000000000002px"><span class="t" id="t237" style="left:70.7px;top:279.01px;font-size:8.2px;font-weight:normal;font-style:italic;color:#63717f;transform:translateY(-50%) scaleX(0.9539);">SIGEC_LPIS_AGRILULTURAL_AREAL__2023_mod [341242]</span></div>
<div style="left:41.5px;top:285.88px;width:9.2px;height:9.2px;background:#fff;border:0.7px solid #b4b4b4;box-sizing:border-box;border-radius:1px;"></div>
<svg style="left:42.7px;top:286.88px;" width="7" height="7" viewBox="0 0 7 7"><path d="M1 3.8l1.9 2.2L6 0.9" fill="none" stroke="#111" stroke-width="1.25" stroke-linecap="round" stroke-linejoin="round"/></svg>
<div style="left:55.7px;top:285.18px;width:10.8px;height:10.8px;background:#ff9e17;border:0.7px solid #6a6a6a;box-sizing:border-box;"></div>
<div class="c" style="left:70.7px;width:212.60000000000002px"><span class="t" id="t241" style="left:70.7px;top:291.43px;font-size:8.2px;font-weight:bold;font-style:normal;color:#111;transform:translateY(-50%) scaleX(0.9167);">SIGEC_LPIS_REFERENCE_PARCEL__2023 [111016]</span></div>
<svg style="left:2.6999999999999997px;top:301.4px;" width="5.4" height="3.2" viewBox="0 0 5.4 3.2"><path d="M0 0h5.200L2.600 3z" fill="#444"/></svg>
<div style="left:14.3px;top:298.29999999999995px;width:9.2px;height:9.2px;background:#fff;border:0.7px solid #b4b4b4;box-sizing:border-box;border-radius:1px;"></div>
<svg style="left:15.5px;top:299.29999999999995px;" width="7" height="7" viewBox="0 0 7 7"><path d="M1 3.8l1.9 2.2L6 0.9" fill="none" stroke="#111" stroke-width="1.25" stroke-linecap="round" stroke-linejoin="round"/></svg>
<svg style="left:26.9px;top:296.6px" width="12" height="12" viewBox="0 0 24 24"><path d="M3 22.500l6-3 6-2.500 6 2.500" fill="none" stroke="#b4b4b4" stroke-width="1.600"/><path d="M3 8l6-3v14l-6 3z" fill="#f1f1f1" stroke="#8c8c8c" stroke-width="1.100" stroke-linejoin="round"/><path d="M9 5l6-2.500v14l-6 2.500z" fill="#fdfdfd" stroke="#8c8c8c" stroke-width="1.100" stroke-linejoin="round"/><path d="M15 2.500l6 2.500v14l-6-2.500z" fill="#e9e9e9" stroke="#8c8c8c" stroke-width="1.100" stroke-linejoin="round"/><rect x="12.800" y="1.500" width="3.200" height="12.500" rx="0.800" fill="#5b7fa9"/></svg>
<div class="c" style="left:43.5px;width:239.8px"><span class="t" id="t246" style="left:43.5px;top:303.84999999999997px;font-size:8.2px;font-weight:normal;font-style:normal;color:#111;transform:translateY(-50%) scaleX(0.8914);">BE_Flanders</span></div>
<svg style="left:17.7px;top:312.82px;" width="3" height="5" viewBox="0 0 3 5"><path d="M0 0v5L2.600 2.500z" fill="#4a4a4a"/></svg>
<div style="left:27.9px;top:310.71999999999997px;width:9.2px;height:9.2px;background:#fff;border:0.7px solid #c8c8c8;box-sizing:border-box;border-radius:1px;"></div>
<svg style="left:40.5px;top:309.02px" width="12" height="12" viewBox="0 0 24 24"><path d="M3 22.500l6-3 6-2.500 6 2.500" fill="none" stroke="#b4b4b4" stroke-width="1.600"/><path d="M3 8l6-3v14l-6 3z" fill="#f1f1f1" stroke="#8c8c8c" stroke-width="1.100" stroke-linejoin="round"/><path d="M9 5l6-2.500v14l-6 2.500z" fill="#fdfdfd" stroke="#8c8c8c" stroke-width="1.100" stroke-linejoin="round"/><path d="M15 2.500l6 2.500v14l-6-2.500z" fill="#e9e9e9" stroke="#8c8c8c" stroke-width="1.100" stroke-linejoin="round"/><rect x="12.800" y="1.500" width="3.200" height="12.500" rx="0.800" fill="#5b7fa9"/></svg>
<div class="c" style="left:57.099999999999994px;width:226.20000000000002px"><span class="t" id="t250" style="left:57.099999999999994px;top:316.27px;font-size:8.2px;font-weight:normal;font-style:normal;color:#111;transform:translateY(-50%) scaleX(0.9100);">RP_AP_BE-Flanders_2024_test2</span></div>
<div style="left:27.9px;top:323.14px;width:9.2px;height:9.2px;background:#fff;border:0.7px solid #b4b4b4;box-sizing:border-box;border-radius:1px;"></div>
<svg style="left:29.099999999999998px;top:324.14px;" width="7" height="7" viewBox="0 0 7 7"><path d="M1 3.8l1.9 2.2L6 0.9" fill="none" stroke="#111" stroke-width="1.25" stroke-linecap="round" stroke-linejoin="round"/></svg>
<div style="left:42.099999999999994px;top:322.44px;width:10.8px;height:10.8px;background:#becf50;border:0.7px solid #6a6a6a;box-sizing:border-box;"></div>
<div class="c" style="left:57.099999999999994px;width:226.20000000000002px"><span class="t" id="t254" style="left:57.099999999999994px;top:328.69px;font-size:8.2px;font-weight:bold;font-style:normal;color:#111;transform:translateY(-50%) scaleX(0.9889);">Landbouwgebruikspercelen_2024_-_Definitief_(extractie_27-03-2025)</span></div>
<svg style="left:4.1px;top:337.65999999999997px;" width="3" height="5" viewBox="0 0 3 5"><path d="M0 0v5L2.600 2.500z" fill="#4a4a4a"/></svg>
<div style="left:14.3px;top:335.55999999999995px;width:9.2px;height:9.2px;background:#fff;border:0.7px solid #c8c8c8;box-sizing:border-box;border-radius:1px;"></div>
<svg style="left:26.9px;top:333.86px" width="12" height="12" viewBox="0 0 24 24"><path d="M3 22.500l6-3 6-2.500 6 2.500" fill="none" stroke="#b4b4b4" stroke-width="1.600"/><path d="M3 8l6-3v14l-6 3z" fill="#f1f1f1" stroke="#8c8c8c" stroke-width="1.100" stroke-linejoin="round"/><path d="M9 5l6-2.500v14l-6 2.500z" fill="#fdfdfd" stroke="#8c8c8c" stroke-width="1.100" stroke-linejoin="round"/><path d="M15 2.500l6 2.500v14l-6-2.500z" fill="#e9e9e9" stroke="#8c8c8c" stroke-width="1.100" stroke-linejoin="round"/><rect x="12.800" y="1.500" width="3.200" height="12.500" rx="0.800" fill="#5b7fa9"/></svg>
<div class="c" style="left:43.5px;width:239.8px"><span class="t" id="t258" style="left:43.5px;top:341.10999999999996px;font-size:8.2px;font-weight:normal;font-style:normal;color:#111;transform:translateY(-50%) scaleX(0.9450);">Spain</span></div>
<svg style="left:2.6999999999999997px;top:351.08px;" width="5.4" height="3.2" viewBox="0 0 5.4 3.2"><path d="M0 0h5.200L2.600 3z" fill="#444"/></svg>
<div style="left:14.3px;top:347.97999999999996px;width:9.2px;height:9.2px;background:#fff;border:0.7px solid #c8c8c8;box-sizing:border-box;border-radius:1px;"></div>
<svg style="left:28.3px;top:348.58px;" width="8.4" height="8.4" viewBox="0 0 8.4 8.4"><rect width="8.4" height="8.4" fill="#dfe6ee"/><rect x="0" y="0" width="2.8" height="2.8" fill="#1d2b3c"/><rect x="5.6" y="0" width="2.8" height="2.8" fill="#4a6a8e"/><rect x="2.8" y="2.8" width="2.8" height="2.8" fill="#1d2b3c"/><rect x="0" y="5.6" width="2.8" height="2.8" fill="#6e8cab"/><rect x="5.6" y="5.6" width="2.8" height="2.8" fill="#1d2b3c"/></svg>
<div class="c" style="left:43.5px;width:239.8px"><span class="t" id="t262" style="left:43.5px;top:353.53px;font-size:8.2px;font-weight:normal;font-style:italic;color:#63717f;transform:translateY(-50%) scaleX(1.0156);">OSM Standard</span></div>
<div style="left:0.4px;top:663.9px;width:283.6px;height:9px;background:#e2e2e2;border:0.7px solid #bdbdbd;box-sizing:border-box;"></div>
<div style="left:8.7px;top:664.5px;width:193px;height:7.9px;background:#f6f6f6;border:0.7px solid #c2c2c2;box-sizing:border-box;"></div>
<svg style="left:2.3px;top:666px;" width="3" height="5" viewBox="0 0 3 5"><path d="M2.600 0v5L0.200 2.500z" fill="#222"/></svg>
<svg style="left:276.5px;top:666px;" width="3" height="5" viewBox="0 0 3 5"><path d="M0.200 0v5L2.600 2.500z" fill="#222"/></svg>
<div style="left:273.3px;top:664.5px;width:0.7px;height:7.9px;background:#c2c2c2;"></div>
<div style="left:0px;top:675.5px;width:39.5px;height:13px;background:#e6e6e6;border:0.7px solid #c8c8c8;box-sizing:border-box;border-radius:1.5px;border-top:none;"></div>
<span class="t" id="t269" style="left:6px;top:681.7px;font-size:7.4px;font-weight:normal;font-style:normal;color:#111;transform:translateY(-50%) scaleX(0.9222);">Browser</span>
<div style="left:39.5px;top:674.2px;width:36px;height:15.2px;background:#fafafa;border:0.7px solid #b4b4b4;box-sizing:border-box;border-radius:1.5px;border-top-color:#e0e0e0;"></div>
<span class="t" id="t271" style="left:47.5px;top:682.3px;font-size:7.4px;font-weight:normal;font-style:normal;color:#111;transform:translateY(-50%) scaleX(0.8789);">Layers</span>
<svg style="left:288.9px;top:138px;background:#fff;overflow:hidden" width="1028.1" height="551.6" viewBox="288.9 138 1028.1 551.6"><polygon points="282.8,463.2 288.0,463.2 295.8,468.4 304.9,463.2 339.6,484.8 346.6,482.2 357.0,483.0 388.3,477.3 402.6,494.0 428.6,510.9 435.1,518.7 437.7,524.4 441.6,522.6 480.7,501.8 531.5,472.6 526.3,467.9 538.0,457.5 551.0,443.2 581.0,434.1 582.3,427.6 595.3,422.3 631.0,404.1 649.5,391.3 667.5,387.0 670.7,385.3 718.4,345.7 739.5,343.2 792.5,346.8 821.1,354.6 831.7,356.7 1308,452 1317,457 1322,457 1322,695 282,695" fill="#ff9e17" stroke="#1c1c1c" stroke-width="0.75" stroke-linejoin="round"/>
<polygon points="737.6,170.8 788.3,158.4 796.7,156.8 808.3,158.4 811.4,161.0 813.7,159.2 840.0,155.2 851.5,157.1 879.2,167.8 888.4,174.0 889,357 821.1,354.6 792.5,346.8 739.5,343.2 718.4,345.7 670.7,385.3 667.5,381.7 666.4,366.9 669.6,358.4 679.1,305.4 680.2,292.7 682.3,280.0 681.3,290.0 684.6,275.3 704.0,254.8 725.7,212.7 733.2,188.9 723.5,184.6 728.9,174.8 736.5,178.1 735.3,177.0 740.2,176.6" fill="#becf50" stroke="#1c1c1c" stroke-width="0.75" stroke-linejoin="round"/>
<polygon points="574.7,383.4 664.3,367.3 665.8,381.7 653.7,390.2 635.7,401.9 615.6,413.5 593.3,422.4" fill="#becf50" stroke="#1c1c1c" stroke-width="0.75" stroke-linejoin="round"/>
<polyline points="595.4,420.9 578.5,385.5 664.3,370.1" fill="none" stroke="#1c1c1c" stroke-width="0.75" stroke-linejoin="round" stroke-linecap="round"/>
<polygon points="286.7,430.2 315.3,426.2 339.6,484.8 304.9,463.2 286.7,450.2" fill="#becf50" stroke="#1c1c1c" stroke-width="0.75" stroke-linejoin="round"/>
<polyline points="286.7,433.0 313.5,429.1 337.5,483.5" fill="none" stroke="#1c1c1c" stroke-width="0.75" stroke-linejoin="round" stroke-linecap="round"/>
<polygon points="811.5,137.1 884.3,137.1 885.9,141.2 857.7,150.4 851.5,155.5 843.3,156.5 814.6,158.6 812.1,153.5" fill="#becf50" stroke="#1c1c1c" stroke-width="0.75" stroke-linejoin="round"/>
<polyline points="850.5,137.1 857.7,150.4" fill="none" stroke="#1c1c1c" stroke-width="0.75" stroke-linejoin="round" stroke-linecap="round"/>
<polyline points="826.9,163.7 845.4,161.2 872.0,173.5" fill="none" stroke="#1c1c1c" stroke-width="0.75" stroke-linejoin="round" stroke-linecap="round"/>
<polygon points="931.5,137.1 973.5,137.1 970.4,145.3 968.4,153.5 962.2,160.6 954.0,174.0 943.8,174.0 949.9,158.6 941.7,156.5 946.8,147.3 941.7,143.2" fill="#becf50" stroke="#1c1c1c" stroke-width="0.75" stroke-linejoin="round"/>
<polyline points="941.7,141.6 949.9,138.1" fill="none" stroke="#1c1c1c" stroke-width="0.75" stroke-linejoin="round" stroke-linecap="round"/>
<polyline points="949.9,158.6 962.2,160.6" fill="none" stroke="#1c1c1c" stroke-width="0.75" stroke-linejoin="round" stroke-linecap="round"/>
<polygon points="1047.3,137.1 1039.1,143.2 1036.0,153.5 1030.9,155.5 1034.0,161.7 1044.2,174.0 1093.6,173.5 1082.4,167.4 1083.4,162.4 1065.2,156.3 1062.2,151.2 1054.1,137.0" fill="#becf50" stroke="#1c1c1c" stroke-width="0.75" stroke-linejoin="round"/>
<polygon points="1060.1,160.3 1064.2,156.9 1067.2,160.3 1065.2,164.4 1062.2,163.4" fill="#fff" stroke="#1c1c1c" stroke-width="0.75" stroke-linejoin="round"/>
<polygon points="1068.2,137.0 1111.8,137.0 1081.4,147.6" fill="#becf50" stroke="#1c1c1c" stroke-width="0.75" stroke-linejoin="round"/>
<polygon points="1143.7,137.0 1157.0,137.0 1148.3,142.1" fill="#becf50" stroke="#1c1c1c" stroke-width="0.75" stroke-linejoin="round"/>
<polygon points="1216.2,137.0 1317.6,137.0 1317.6,175.5 1253.7,175.5 1283.1,152.2 1273.0,145.1 1212.2,149.6 1210.1,145.1" fill="#becf50" stroke="#1c1c1c" stroke-width="0.75" stroke-linejoin="round"/>
<polyline points="1218.3,138.0 1213.2,146.1 1273.0,144.1" fill="none" stroke="#1c1c1c" stroke-width="0.75" stroke-linejoin="round" stroke-linecap="round"/>
<polyline points="1296.3,137.4 1317.6,152.2" fill="none" stroke="#1c1c1c" stroke-width="0.75" stroke-linejoin="round" stroke-linecap="round"/>
<polyline points="1307.4,147.2 1275.0,172.5" fill="none" stroke="#1c1c1c" stroke-width="0.75" stroke-linejoin="round" stroke-linecap="round"/>
<polyline points="1317.6,156.3 1296.3,172.5" fill="none" stroke="#1c1c1c" stroke-width="0.75" stroke-linejoin="round" stroke-linecap="round"/>
<polygon points="1306,170 1318,170 1318,457 1306,452" fill="#becf50" stroke="none" stroke-width="0.75" stroke-linejoin="round"/>
<polyline points="1297.2,137.0 1317.0,153.1" fill="none" stroke="#1c1c1c" stroke-width="0.75" stroke-linejoin="round" stroke-linecap="round"/>
<polyline points="1308.7,146.2 1276.5,171.5" fill="none" stroke="#1c1c1c" stroke-width="0.75" stroke-linejoin="round" stroke-linecap="round"/>
<polyline points="1317.0,157.7 1297.2,173.8" fill="none" stroke="#1c1c1c" stroke-width="0.75" stroke-linejoin="round" stroke-linecap="round"/>
<polyline points="1309.9,237.0 1317.0,240.4" fill="none" stroke="#1c1c1c" stroke-width="0.75" stroke-linejoin="round" stroke-linecap="round"/>
<polyline points="1317.0,261.1 1309.9,270.3" fill="none" stroke="#1c1c1c" stroke-width="0.75" stroke-linejoin="round" stroke-linecap="round"/>
<polyline points="1312.2,279.5 1317.0,284.1" fill="none" stroke="#1c1c1c" stroke-width="0.75" stroke-linejoin="round" stroke-linecap="round"/>
<polyline points="1317.0,208.3 1308.0,217.9" fill="none" stroke="#1c1c1c" stroke-width="2.1" stroke-linejoin="round" stroke-linecap="butt"/>
<polyline points="1317.0,208.3 1308.0,217.9" fill="none" stroke="#fff" stroke-width="1.0" stroke-linejoin="round" stroke-linecap="round"/>
<polyline points="1308.6,314.0 1317.0,308.0" fill="none" stroke="#1c1c1c" stroke-width="0.75" stroke-linejoin="round" stroke-linecap="round"/>
<polyline points="1308.6,323.6 1317.0,318.8 1311.0,314.0" fill="none" stroke="#1c1c1c" stroke-width="0.75" stroke-linejoin="round" stroke-linecap="round"/>
<polyline points="1308.6,338.0 1317.0,334.4 1312.2,345.2 1317.0,347.6" fill="none" stroke="#1c1c1c" stroke-width="0.75" stroke-linejoin="round" stroke-linecap="round"/>
<polyline points="1308.6,359.6 1317.0,352.4" fill="none" stroke="#1c1c1c" stroke-width="0.75" stroke-linejoin="round" stroke-linecap="round"/>
<polyline points="1308.6,369.2 1317.0,364.4 1313.4,369.2 1317.0,371.6" fill="none" stroke="#1c1c1c" stroke-width="0.75" stroke-linejoin="round" stroke-linecap="round"/>
<polyline points="1308.6,390.8 1317.0,384.8" fill="none" stroke="#1c1c1c" stroke-width="0.75" stroke-linejoin="round" stroke-linecap="round"/>
<polyline points="1308.6,402.8 1317.0,395.6 1311.0,410.0 1317.0,414.8" fill="none" stroke="#1c1c1c" stroke-width="0.75" stroke-linejoin="round" stroke-linecap="round"/>
<polyline points="1308.6,424.5 1317.0,419.7" fill="none" stroke="#1c1c1c" stroke-width="0.75" stroke-linejoin="round" stroke-linecap="round"/>
<polyline points="1311.0,434.1 1317.0,431.7" fill="none" stroke="#1c1c1c" stroke-width="0.75" stroke-linejoin="round" stroke-linecap="round"/>
<polyline points="741.6,177.9 791.4,169.5 797.6,168.1" fill="none" stroke="#1c1c1c" stroke-width="0.75" stroke-linejoin="round" stroke-linecap="round"/>
<polyline points="788.3,158.4 791.4,169.5 795.9,190.4" fill="none" stroke="#1c1c1c" stroke-width="0.75" stroke-linejoin="round" stroke-linecap="round"/>
<polyline points="797.6,168.1 802.5,188.6" fill="none" stroke="#1c1c1c" stroke-width="0.75" stroke-linejoin="round" stroke-linecap="round"/>
<polyline points="794.1,176.6 799.0,175.7" fill="none" stroke="#1c1c1c" stroke-width="0.75" stroke-linejoin="round" stroke-linecap="round"/>
<polyline points="795.4,186.8 801.2,185.9" fill="none" stroke="#1c1c1c" stroke-width="0.75" stroke-linejoin="round" stroke-linecap="round"/>
<polyline points="795.9,190.4 802.5,188.6 817.7,187.3" fill="none" stroke="#1c1c1c" stroke-width="0.75" stroke-linejoin="round" stroke-linecap="round"/>
<polyline points="736.5,179.2 731.1,204.4 776.5,206.2" fill="none" stroke="#1c1c1c" stroke-width="0.75" stroke-linejoin="round" stroke-linecap="round"/>
<polyline points="736.7,178.8 731.8,200.0 725.7,212.7 706.6,254.8 688.9,275.3 685.7,290.0" fill="none" stroke="#1c1c1c" stroke-width="0.75" stroke-linejoin="round" stroke-linecap="round"/>
<polyline points="704.0,254.8 751.6,255.9" fill="none" stroke="#1c1c1c" stroke-width="0.75" stroke-linejoin="round" stroke-linecap="round"/>
<polyline points="751.6,255.9 753.8,264.5 770.0,279.7 771.1,290.0" fill="none" stroke="#1c1c1c" stroke-width="0.75" stroke-linejoin="round" stroke-linecap="round"/>
<polyline points="759.2,234.7 825.1,238.2 817.5,262.4" fill="none" stroke="#1c1c1c" stroke-width="0.75" stroke-linejoin="round" stroke-linecap="round"/>
<polyline points="822.9,238.2 816.5,261.9 817.5,262.4" fill="none" stroke="#1c1c1c" stroke-width="0.75" stroke-linejoin="round" stroke-linecap="round"/>
<polyline points="774.3,288.3 777.5,266.3 811.0,268.9 810.0,286.2" fill="none" stroke="#1c1c1c" stroke-width="0.75" stroke-linejoin="round" stroke-linecap="round"/>
<polyline points="770.0,287.2 810.0,288.8" fill="none" stroke="#1c1c1c" stroke-width="0.75" stroke-linejoin="round" stroke-linecap="round"/>
<polyline points="801.3,190.0 788.3,197.5 771.1,214.8 758.1,234.3 751.6,255.9" fill="none" stroke="#1c1c1c" stroke-width="2.0" stroke-linejoin="round" stroke-linecap="butt"/>
<polyline points="801.3,190.0 788.3,197.5 771.1,214.8 758.1,234.3 751.6,255.9" fill="none" stroke="#fff" stroke-width="0.9" stroke-linejoin="round" stroke-linecap="round"/>
<polygon points="797.6,168.1 807.4,165.5 810.5,163.3 813.7,162.4 818.6,187.3 802.5,188.6" fill="#fff" stroke="#1c1c1c" stroke-width="0.75" stroke-linejoin="round"/>
<polygon points="811.0,137.0 840.4,137.0 840.4,154.4 814.1,158.4 812.3,156.1 811.4,145.9" fill="#becf50" stroke="#1c1c1c" stroke-width="0.75" stroke-linejoin="round"/>
<polyline points="814.1,161.9 824.3,160.3 828.3,180.2 818.1,181.5" fill="none" stroke="#1c1c1c" stroke-width="0.75" stroke-linejoin="round" stroke-linecap="round"/>
<polyline points="825.7,163.3 830.6,186.8" fill="none" stroke="#1c1c1c" stroke-width="0.75" stroke-linejoin="round" stroke-linecap="round"/>
<polyline points="811.2,161.2 813.7,159.2 840.4,155.1" fill="none" stroke="#1c1c1c" stroke-width="2.9000000000000004" stroke-linejoin="round" stroke-linecap="butt"/>
<polyline points="811.2,161.2 813.7,159.2 840.4,155.1" fill="none" stroke="#fff" stroke-width="1.8" stroke-linejoin="round" stroke-linecap="round"/>
<polygon points="745.1,151.2 759.4,149.5 764.3,161.0 746.0,166.4" fill="#becf50" stroke="#1c1c1c" stroke-width="0.75" stroke-linejoin="round"/>
<polygon points="761.6,153.0 772.3,150.3 777.2,158.4 765.6,161.0" fill="#becf50" stroke="#1c1c1c" stroke-width="0.75" stroke-linejoin="round"/>
<polyline points="763.4,156.8 774.5,153.9" fill="none" stroke="#1c1c1c" stroke-width="0.75" stroke-linejoin="round" stroke-linecap="round"/>
<polygon points="781.2,151.1 794.5,150.3 795.0,154.4 790.1,154.4 789.8,155.7 781.6,156.1" fill="#becf50" stroke="#1c1c1c" stroke-width="0.75" stroke-linejoin="round"/>
<polyline points="686.6,280.0 685.5,291.7 680.2,292.7" fill="none" stroke="#1c1c1c" stroke-width="0.75" stroke-linejoin="round" stroke-linecap="round"/>
<polyline points="680.2,293.1 768.2,299.1" fill="none" stroke="#1c1c1c" stroke-width="0.75" stroke-linejoin="round" stroke-linecap="round"/>
<polyline points="679.1,305.0 766.0,311.4" fill="none" stroke="#1c1c1c" stroke-width="0.75" stroke-linejoin="round" stroke-linecap="round"/>
<polyline points="769.2,280.0 768.2,299.1 766.0,311.4 766.0,319.2 808.4,320.3" fill="none" stroke="#1c1c1c" stroke-width="0.75" stroke-linejoin="round" stroke-linecap="round"/>
<polyline points="775.6,280.0 774.5,287.4 807.4,290.2" fill="none" stroke="#1c1c1c" stroke-width="0.75" stroke-linejoin="round" stroke-linecap="round"/>
<polyline points="769.2,287.4 774.5,287.4" fill="none" stroke="#1c1c1c" stroke-width="0.75" stroke-linejoin="round" stroke-linecap="round"/>
<polyline points="763.3,343.6 765.0,331.9 809.5,332.6 816.9,349.9" fill="none" stroke="#1c1c1c" stroke-width="0.75" stroke-linejoin="round" stroke-linecap="round"/>
<polyline points="815.8,330.9 831.7,329.8" fill="none" stroke="#1c1c1c" stroke-width="0.75" stroke-linejoin="round" stroke-linecap="round"/>
<polyline points="684.0,305.4 673.8,360.5 667.1,367.3" fill="none" stroke="#1c1c1c" stroke-width="0.75" stroke-linejoin="round" stroke-linecap="round"/>
<polyline points="836,242 831.6,249.4 810.0,288.3 813.7,280.0 808.4,297.0 811.6,318.1 815.8,333.0 822.2,349.9 825.4,355.2 832.8,356.7" fill="none" stroke="#1c1c1c" stroke-width="3.3000000000000003" stroke-linejoin="round" stroke-linecap="butt"/>
<polyline points="836,242 831.6,249.4 810.0,288.3 813.7,280.0 808.4,297.0 811.6,318.1 815.8,333.0 822.2,349.9 825.4,355.2 832.8,356.7" fill="none" stroke="#fff" stroke-width="2.2" stroke-linejoin="round" stroke-linecap="round"/>
<polyline points="813.7,162.4 819.0,186.8 822.6,200.0 829.4,223.5 833.3,238.6" fill="none" stroke="#1c1c1c" stroke-width="1.9000000000000001" stroke-linejoin="round" stroke-linecap="butt"/>
<polyline points="813.7,162.4 819.0,186.8 822.6,200.0 829.4,223.5 833.3,238.6" fill="none" stroke="#fff" stroke-width="0.8" stroke-linejoin="round" stroke-linecap="round"/>
<polygon points="670.7,385.3 718.4,345.7 739.5,343.2 792.5,346.8 821.1,354.6 818.0,361.6 748.0,407.2 737.4,409.7 722.6,402.9 697.2,392.3" fill="#ff4f0c" stroke="#ff0000" stroke-width="3.1" stroke-linejoin="round"/>
<polygon points="653.7,390.2 665.8,382.2 667.9,384.3 670.7,386.0 667.5,388.5 654.8,394.0" fill="#fff" stroke="#1c1c1c" stroke-width="0.5" stroke-linejoin="round"/>
<polyline points="654.8,392.3 595.4,430.0 631.0,406.7 531.5,472.3" fill="none" stroke="#1c1c1c" stroke-width="2.1" stroke-linejoin="round" stroke-linecap="butt"/>
<polyline points="654.8,392.3 595.4,430.0 631.0,406.7 531.5,472.3" fill="none" stroke="#fff" stroke-width="1.0" stroke-linejoin="round" stroke-linecap="round"/>
<polyline points="634.6,407.8 629.3,430.0 631.0,421.0 623.9,447.1 616.6,475.7 609.6,504.4 600.5,530.4 599.2,545.0 600.5,540.0 596.6,558.2 592.7,568.6" fill="none" stroke="#1c1c1c" stroke-width="2.0" stroke-linejoin="round" stroke-linecap="butt"/>
<polyline points="634.6,407.8 629.3,430.0 631.0,421.0 623.9,447.1 616.6,475.7 609.6,504.4 600.5,530.4 599.2,545.0 600.5,540.0 596.6,558.2 592.7,568.6" fill="none" stroke="#fff" stroke-width="0.9" stroke-linejoin="round" stroke-linecap="round"/>
<polygon points="617.4,453.6 621.9,456.2 616.6,475.7 611.7,473.1" fill="#fff" stroke="#1c1c1c" stroke-width="0.5" stroke-linejoin="round"/>
<polyline points="438.3,524.4 411.7,540.0 384.4,559.5 360.9,580.4 321.9,603.8 293.2,621.2 286.7,624.6" fill="none" stroke="#1c1c1c" stroke-width="2.35" stroke-linejoin="round" stroke-linecap="butt"/>
<polyline points="438.3,524.4 411.7,540.0 384.4,559.5 360.9,580.4 321.9,603.8 293.2,621.2 286.7,624.6" fill="none" stroke="#fff" stroke-width="1.25" stroke-linejoin="round" stroke-linecap="round"/>
<polyline points="321.9,603.8 366.1,646.8 410.4,691.0" fill="none" stroke="#1c1c1c" stroke-width="2.35" stroke-linejoin="round" stroke-linecap="butt"/>
<polyline points="321.9,603.8 366.1,646.8 410.4,691.0" fill="none" stroke="#fff" stroke-width="1.25" stroke-linejoin="round" stroke-linecap="round"/>
<polyline points="438.3,524.4 459.9,540.0 491.1,562.1 504.1,579.1 530.2,602.5 553.6,629.8 575.8,653.3" fill="none" stroke="#1c1c1c" stroke-width="2.0" stroke-linejoin="round" stroke-linecap="butt"/>
<polyline points="438.3,524.4 459.9,540.0 491.1,562.1 504.1,579.1 530.2,602.5 553.6,629.8 575.8,653.3" fill="none" stroke="#fff" stroke-width="0.9" stroke-linejoin="round" stroke-linecap="round"/>
<polygon points="459.9,540.0 491.1,560.8 504.1,577.8 530.2,601.2 553.6,628.5 575.8,653.3 552.3,630.4 528.9,604.3 502.1,581.1 489.8,563.4" fill="#fff" stroke="#1c1c1c" stroke-width="0.5" stroke-linejoin="round"/>
<polyline points="438.3,524.4 485.9,540.0 522.4,546.5 543.2,557.7 592.7,568.6 631.0,576.5 631.0,576.5 683.1,584.3 735.2,593.4 761.2,596.0 780.7,593.9" fill="none" stroke="#1c1c1c" stroke-width="2.0" stroke-linejoin="round" stroke-linecap="butt"/>
<polyline points="438.3,524.4 485.9,540.0 522.4,546.5 543.2,557.7 592.7,568.6 631.0,576.5 631.0,576.5 683.1,584.3 735.2,593.4 761.2,596.0 780.7,593.9" fill="none" stroke="#fff" stroke-width="0.9" stroke-linejoin="round" stroke-linecap="round"/>
<polyline points="539.3,555.6 544.5,560.8" fill="none" stroke="#1c1c1c" stroke-width="0.75" stroke-linejoin="round" stroke-linecap="round"/>
<polyline points="592.7,568.6 595.3,592.1 591.4,618.1 579.7,644.2 575.8,654.6 566.6,675.4 557.5,691.0" fill="none" stroke="#1c1c1c" stroke-width="2.4000000000000004" stroke-linejoin="round" stroke-linecap="butt"/>
<polyline points="592.7,568.6 595.3,592.1 591.4,618.1 579.7,644.2 575.8,654.6 566.6,675.4 557.5,691.0" fill="none" stroke="#fff" stroke-width="1.3" stroke-linejoin="round" stroke-linecap="round"/>
<polygon points="575.8,654.6 584.9,666.3 567.9,674.1" fill="#fff" stroke="#1c1c1c" stroke-width="0.5" stroke-linejoin="round"/>
<polyline points="584.9,666.3 600.5,680.6 613.5,691.0" fill="none" stroke="#1c1c1c" stroke-width="2.1" stroke-linejoin="round" stroke-linecap="butt"/>
<polyline points="584.9,666.3 600.5,680.6 613.5,691.0" fill="none" stroke="#fff" stroke-width="1.0" stroke-linejoin="round" stroke-linecap="round"/>
<polyline points="567.9,674.1 583.6,691.0" fill="none" stroke="#1c1c1c" stroke-width="2.1" stroke-linejoin="round" stroke-linecap="butt"/>
<polyline points="567.9,674.1 583.6,691.0" fill="none" stroke="#fff" stroke-width="1.0" stroke-linejoin="round" stroke-linecap="round"/>
<polyline points="612.2,685.8 631.0,678.0 631.0,678.0 636.2,676.7" fill="none" stroke="#1c1c1c" stroke-width="0.75" stroke-linejoin="round" stroke-linecap="round"/>
<polygon points="286.7,621.2 294.5,623.3 321.9,646.8 340.1,665.0 344.0,670.2 331.0,667.6 321.9,659.8 304.9,662.4 286.7,648.9 286.7,646.2 299.7,641.6 295.8,635.1 286.7,636.9" fill="#fff" stroke="#1c1c1c" stroke-width="0.5" stroke-linejoin="round"/>
<polyline points="341.4,668.1 355.7,678.0 363.5,691.0" fill="none" stroke="#1c1c1c" stroke-width="3.3000000000000003" stroke-linejoin="round" stroke-linecap="butt"/>
<polyline points="341.4,668.1 355.7,678.0 363.5,691.0" fill="none" stroke="#fff" stroke-width="2.2" stroke-linejoin="round" stroke-linecap="round"/>
<polyline points="360.9,581.7 382.3,562.9 401.3,580.4 373.4,594.2 360.9,581.7" fill="none" stroke="#1c1c1c" stroke-width="0.75" stroke-linejoin="round" stroke-linecap="round"/>
<polyline points="303.6,663.7 324.5,684.5" fill="none" stroke="#1c1c1c" stroke-width="0.75" stroke-linejoin="round" stroke-linecap="round"/>
<polyline points="342.7,666.3 347.9,674.1 310.1,690.0" fill="none" stroke="#1c1c1c" stroke-width="0.75" stroke-linejoin="round" stroke-linecap="round"/>
<polyline points="288.0,678.0 299.7,691.0" fill="none" stroke="#1c1c1c" stroke-width="0.75" stroke-linejoin="round" stroke-linecap="round"/>
<polyline points="736.5,411.1 737.8,421.0 743.0,431.5 766.4,454.9 802.9,482.2 818.5,497.9 839.3,514.8 852.4,535.6 857.6,545.0 853.7,540.0 862.8,553.0 870.6,566.0 874.0,575.2 875.8,584.3 876.8,602.5 877.1,620.7 878.4,629.8" fill="none" stroke="#1c1c1c" stroke-width="3.6" stroke-linejoin="round" stroke-linecap="butt"/>
<polyline points="736.5,411.1 737.8,421.0 743.0,431.5 766.4,454.9 802.9,482.2 818.5,497.9 839.3,514.8 852.4,535.6 857.6,545.0 853.7,540.0 862.8,553.0 870.6,566.0 874.0,575.2 875.8,584.3 876.8,602.5 877.1,620.7 878.4,629.8" fill="none" stroke="#fff" stroke-width="2.5" stroke-linejoin="round" stroke-linecap="round"/>
<polyline points="756.0,405.4 797.7,424.9 831.5,441.9 875.8,464.0" fill="none" stroke="#1c1c1c" stroke-width="2.1" stroke-linejoin="round" stroke-linecap="butt"/>
<polyline points="756.0,405.4 797.7,424.9 831.5,441.9 875.8,464.0" fill="none" stroke="#fff" stroke-width="1.0" stroke-linejoin="round" stroke-linecap="round"/>
<polyline points="899.2,451.5 875.8,464.8 847.1,488.8 841.9,501.8 839.3,514.8" fill="none" stroke="#1c1c1c" stroke-width="2.3" stroke-linejoin="round" stroke-linecap="butt"/>
<polyline points="899.2,451.5 875.8,464.8 847.1,488.8 841.9,501.8 839.3,514.8" fill="none" stroke="#fff" stroke-width="1.2" stroke-linejoin="round" stroke-linecap="round"/>
<polygon points="789.3,490.1 802.9,484.1 818.5,497.9 801.6,503.1" fill="#fff" stroke="#1c1c1c" stroke-width="0.5" stroke-linejoin="round"/>
<polyline points="753.9,537.7 759.9,545.0 756.0,540.0 780.7,572.6 780.7,593.9" fill="none" stroke="#1c1c1c" stroke-width="1.9000000000000001" stroke-linejoin="round" stroke-linecap="butt"/>
<polyline points="753.9,537.7 759.9,545.0 756.0,540.0 780.7,572.6 780.7,593.9" fill="none" stroke="#fff" stroke-width="0.8" stroke-linejoin="round" stroke-linecap="round"/>
<polyline points="780.7,593.9 801.6,616.8 802.9,620.7 771.6,639.0" fill="none" stroke="#1c1c1c" stroke-width="2.1" stroke-linejoin="round" stroke-linecap="butt"/>
<polyline points="780.7,593.9 801.6,616.8 802.9,620.7 771.6,639.0" fill="none" stroke="#fff" stroke-width="1.0" stroke-linejoin="round" stroke-linecap="round"/>
<polyline points="783.3,593.4 813.3,581.7 870.6,575.2" fill="none" stroke="#1c1c1c" stroke-width="2.3" stroke-linejoin="round" stroke-linecap="butt"/>
<polyline points="783.3,593.4 813.3,581.7 870.6,575.2" fill="none" stroke="#fff" stroke-width="1.2" stroke-linejoin="round" stroke-linecap="round"/>
<polyline points="877.1,597.3 930.5,584.3 974.0,566.0 974.0,565.0 989.6,558.5" fill="none" stroke="#1c1c1c" stroke-width="2.1" stroke-linejoin="round" stroke-linecap="butt"/>
<polyline points="877.1,597.3 930.5,584.3 974.0,566.0 974.0,565.0 989.6,558.5" fill="none" stroke="#fff" stroke-width="1.0" stroke-linejoin="round" stroke-linecap="round"/>
<polyline points="989.6,558.5 1057.3,555.9 1073.0,568.9" fill="none" stroke="#1c1c1c" stroke-width="0.75" stroke-linejoin="round" stroke-linecap="round"/>
<polygon points="636.2,676.7 716.9,645.5 714.3,640.3 723.4,635.1 724.8,631.1 735.2,628.5 753.4,646.2 771.6,639.0 797.7,662.4 821.1,648.1 808.1,635.1 813.3,630.6 825.0,640.3 836.7,637.7 840.6,641.6 823.7,654.6 808.1,666.3 813.3,670.2 817.2,668.1 818.5,670.2 813.3,675.4 802.9,681.9 793.8,676.7 783.3,684.5 787.2,691.0 641.4,691.0 642.7,684.5" fill="#fff" stroke="#1c1c1c" stroke-width="0.5" stroke-linejoin="round"/>
<polyline points="839.3,642.3 868.0,632.4" fill="none" stroke="#1c1c1c" stroke-width="2.7" stroke-linejoin="round" stroke-linecap="butt"/>
<polyline points="839.3,642.3 868.0,632.4" fill="none" stroke="#fff" stroke-width="1.6" stroke-linejoin="round" stroke-linecap="round"/>
<polygon points="875.3,620.7 879.7,621.2 882.3,629.8 891.4,639.0 887.5,644.2 881.0,646.8 868.0,632.4 874.5,629.8" fill="#fff" stroke="#1c1c1c" stroke-width="0.5" stroke-linejoin="round"/>
<polyline points="888.5,637.3 903,635 916.4,633.6 928,632.8 939.6,632.8 951,634 962.9,636.2 979.5,640.4 996.1,643 1006,646.5 1016,651 1036,661 1055.9,671.3 1075.8,682.8" fill="none" stroke="#1c1c1c" stroke-width="3.4" stroke-linejoin="round" stroke-linecap="butt"/>
<polyline points="888.5,637.3 903,635 916.4,633.6 928,632.8 939.6,632.8 951,634 962.9,636.2 979.5,640.4 996.1,643 1006,646.5 1016,651 1036,661 1055.9,671.3 1075.8,682.8" fill="none" stroke="#fff" stroke-width="2.3" stroke-linejoin="round" stroke-linecap="round"/>
<polyline points="891.4,641.6 899.2,652.0 903.1,665.0 904.4,691.0" fill="none" stroke="#1c1c1c" stroke-width="3.3000000000000003" stroke-linejoin="round" stroke-linecap="butt"/>
<polyline points="891.4,641.6 899.2,652.0 903.1,665.0 904.4,691.0" fill="none" stroke="#fff" stroke-width="2.2" stroke-linejoin="round" stroke-linecap="round"/>
<polyline points="647.9,621.2 659.6,617.3 688.3,648.1 714.3,640.3" fill="none" stroke="#1c1c1c" stroke-width="0.75" stroke-linejoin="round" stroke-linecap="round"/>
<polyline points="647.9,621.2 680.5,659.8" fill="none" stroke="#1c1c1c" stroke-width="0.75" stroke-linejoin="round" stroke-linecap="round"/>
<polyline points="839.3,642.9 866.7,672.8 831.5,690.0" fill="none" stroke="#1c1c1c" stroke-width="0.75" stroke-linejoin="round" stroke-linecap="round"/>
<polyline points="856.3,637.7 871.9,652.5 894.0,646.8" fill="none" stroke="#1c1c1c" stroke-width="0.75" stroke-linejoin="round" stroke-linecap="round"/>
<polyline points="905.7,637.7 935.7,675.4 904.4,684.5" fill="none" stroke="#1c1c1c" stroke-width="0.75" stroke-linejoin="round" stroke-linecap="round"/>
<polyline points="631.0,681.9 642.7,684.5" fill="none" stroke="#1c1c1c" stroke-width="0.75" stroke-linejoin="round" stroke-linecap="round"/>
<polygon points="1144.6,450.4 1160.2,466.0 1179.7,458.8 1217.5,490.8 1194.1,503.8 1205.8,515.5 1198.0,524.6 1192.8,521.2 1182.3,523.9 1172.4,530.4 1166.7,514.2 1144.6,525.9 1130.2,519.4 1114.6,529.8 1113.3,533.8 1106.8,536.4 1115.9,542.9 1140.7,528.5 1151.1,537.7 1156.3,536.9 1177.1,546.2 1194.1,535.8 1227.9,560.3 1212.3,568.9 1221.4,578.9 1237.0,586.7 1242.2,584.6 1246.1,587.2 1291.7,565.8 1278.7,558.5 1255.2,567.9 1233.1,557.2 1242.2,553.3 1268.3,537.7 1286.5,522.0 1290.4,527.2 1296.9,525.4 1293.0,520.7 1289.1,521.5 1286.5,517.3 1312.5,498.6 1267.0,466.0 1302.1,450.4" fill="#fff" stroke="#1c1c1c" stroke-width="0.5" stroke-linejoin="round"/>
<polygon points="1169.8,528.0 1175.8,522.8 1182.3,516.8 1188.1,510.8 1187.3,516.0 1181.0,522.8 1174.5,529.3" fill="#fff" stroke="#1c1c1c" stroke-width="0.5" stroke-linejoin="round"/>
<polygon points="1061.2,450.4 1112.0,450.4 1113.3,456.9 1082.1,471.2 1063.8,481.7 1057.3,480.4 1054.7,473.9 1056.0,466.0 1065.1,460.8" fill="#fff" stroke="#1c1c1c" stroke-width="0.5" stroke-linejoin="round"/>
<polygon points="1097.7,486.4 1128.9,471.8 1139.4,479.1 1122.4,488.2 1121.9,490.8 1110.7,496.0" fill="#fff" stroke="#1c1c1c" stroke-width="0.5" stroke-linejoin="round"/>
<polygon points="1143.3,476.5 1148.5,475.2 1151.1,480.4 1145.9,481.7" fill="#fff" stroke="#1c1c1c" stroke-width="0.5" stroke-linejoin="round"/>
<polygon points="1237.0,510.3 1260.5,499.4 1287.8,516.8 1268.3,531.1" fill="#ff9e17" stroke="#1c1c1c" stroke-width="0.5" stroke-linejoin="round"/>
<polyline points="1139.4,479.1 1160.2,466.0" fill="none" stroke="#1c1c1c" stroke-width="0.75" stroke-linejoin="round" stroke-linecap="round"/>
<polyline points="1242.2,553.3 1261.8,565.0" fill="none" stroke="#1c1c1c" stroke-width="0.75" stroke-linejoin="round" stroke-linecap="round"/>
<polyline points="1082.1,471.2 1110.7,496.0 1130.2,519.4 1144.6,525.9" fill="none" stroke="#1c1c1c" stroke-width="1.9000000000000001" stroke-linejoin="round" stroke-linecap="butt"/>
<polyline points="1082.1,471.2 1110.7,496.0 1130.2,519.4 1144.6,525.9" fill="none" stroke="#fff" stroke-width="0.8" stroke-linejoin="round" stroke-linecap="round"/>
<polyline points="1177.1,546.2 1212.3,568.9 1221.4,578.9 1239.6,593.2 1259.2,607.5 1276.1,620.5 1294.3,629.6 1317.8,636.7" fill="none" stroke="#1c1c1c" stroke-width="2.0" stroke-linejoin="round" stroke-linecap="butt"/>
<polyline points="1177.1,546.2 1212.3,568.9 1221.4,578.9 1239.6,593.2 1259.2,607.5 1276.1,620.5 1294.3,629.6 1317.8,636.7" fill="none" stroke="#fff" stroke-width="0.9" stroke-linejoin="round" stroke-linecap="round"/>
<polyline points="1268.3,537.7 1286.5,522.0" fill="none" stroke="#1c1c1c" stroke-width="1.9000000000000001" stroke-linejoin="round" stroke-linecap="butt"/>
<polyline points="1268.3,537.7 1286.5,522.0" fill="none" stroke="#fff" stroke-width="0.8" stroke-linejoin="round" stroke-linecap="round"/>
<polyline points="1019.6,450.4 1030.0,471.2 1039.1,499.9 1059.9,525.9 1092.5,557.7" fill="none" stroke="#1c1c1c" stroke-width="2.0" stroke-linejoin="round" stroke-linecap="butt"/>
<polyline points="1019.6,450.4 1030.0,471.2 1039.1,499.9 1059.9,525.9 1092.5,557.7" fill="none" stroke="#fff" stroke-width="0.9" stroke-linejoin="round" stroke-linecap="round"/>
<polyline points="1092.5,557.7 1115.9,542.9" fill="none" stroke="#1c1c1c" stroke-width="2.0" stroke-linejoin="round" stroke-linecap="butt"/>
<polyline points="1092.5,557.7 1115.9,542.9" fill="none" stroke="#fff" stroke-width="0.9" stroke-linejoin="round" stroke-linecap="round"/>
<polyline points="1092.5,557.7 1073.0,568.9 1069.1,590.0 1066.4,591.9 1058.6,617.9 1065.1,654.4 1074.3,677.8 1078.2,689.8" fill="none" stroke="#1c1c1c" stroke-width="2.3" stroke-linejoin="round" stroke-linecap="butt"/>
<polyline points="1092.5,557.7 1073.0,568.9 1069.1,590.0 1066.4,591.9 1058.6,617.9 1065.1,654.4 1074.3,677.8 1078.2,689.8" fill="none" stroke="#fff" stroke-width="1.2" stroke-linejoin="round" stroke-linecap="round"/>
<polyline points="1092.5,557.7 1125.0,589.3 1155.0,616.6" fill="none" stroke="#1c1c1c" stroke-width="2.0" stroke-linejoin="round" stroke-linecap="butt"/>
<polyline points="1092.5,557.7 1125.0,589.3 1155.0,616.6" fill="none" stroke="#fff" stroke-width="0.9" stroke-linejoin="round" stroke-linecap="round"/>
<polyline points="1155.0,616.6 1187.5,598.4 1221.4,580.2" fill="none" stroke="#1c1c1c" stroke-width="1.9000000000000001" stroke-linejoin="round" stroke-linecap="butt"/>
<polyline points="1155.0,616.6 1187.5,598.4 1221.4,580.2" fill="none" stroke="#fff" stroke-width="0.8" stroke-linejoin="round" stroke-linecap="round"/>
<polyline points="977.9,450.4 993.5,476.5 1027.4,468.6" fill="none" stroke="#1c1c1c" stroke-width="0.75" stroke-linejoin="round" stroke-linecap="round"/>
<polyline points="1221.4,579.3 1203.2,590.0" fill="none" stroke="#1c1c1c" stroke-width="0.75" stroke-linejoin="round" stroke-linecap="round"/>
<polyline points="1155.0,616.6 1157.6,621.8 1166.7,625.7 1187.5,627.8 1214.9,633.5 1256.6,607.5" fill="none" stroke="#1c1c1c" stroke-width="0.75" stroke-linejoin="round" stroke-linecap="round"/>
<polyline points="1187.5,627.8 1207.1,614.0 1204.5,612.2 1239.6,594.5" fill="none" stroke="#1c1c1c" stroke-width="0.75" stroke-linejoin="round" stroke-linecap="round"/>
<polyline points="1104.2,595.8 1125.0,589.3" fill="none" stroke="#1c1c1c" stroke-width="0.75" stroke-linejoin="round" stroke-linecap="round"/>
<polyline points="1104.2,595.8 1125.0,618.4 1145.9,610.6" fill="none" stroke="#1c1c1c" stroke-width="0.75" stroke-linejoin="round" stroke-linecap="round"/>
<polyline points="1259.2,607.5 1286.5,581.5" fill="none" stroke="#1c1c1c" stroke-width="1.9000000000000001" stroke-linejoin="round" stroke-linecap="butt"/>
<polyline points="1259.2,607.5 1286.5,581.5" fill="none" stroke="#fff" stroke-width="0.8" stroke-linejoin="round" stroke-linecap="round"/>
<polyline points="1286.5,580.2 1311.2,589.3 1309.9,593.2" fill="none" stroke="#1c1c1c" stroke-width="0.75" stroke-linejoin="round" stroke-linecap="round"/>
<polygon points="1276.1,620.5 1303.4,593.2 1317.8,598.4 1317.8,603.6 1293.0,629.6" fill="#fff" stroke="#1c1c1c" stroke-width="0.5" stroke-linejoin="round"/>
<polygon points="1270.9,646.6 1296.9,632.2 1317.8,637.4 1317.8,641.9 1282.6,657.5" fill="#fff" stroke="#1c1c1c" stroke-width="0.5" stroke-linejoin="round"/>
<polyline points="1078.2,545.0 1092.5,557.5 1114.6,545.0" fill="none" stroke="#1c1c1c" stroke-width="0.75" stroke-linejoin="round" stroke-linecap="round"/>
<polyline points="1074.3,679.9 1083.4,681.7 1104.2,689.8" fill="none" stroke="#1c1c1c" stroke-width="0.75" stroke-linejoin="round" stroke-linecap="round"/>
<polygon points="1074.3,678.3 1078.2,680.9 1080.8,680.4 1078.2,689.8 1076.6,689.8 1076.3,683.0" fill="#fff" stroke="#1c1c1c" stroke-width="0.4" stroke-linejoin="round"/></svg>
<div style="left:288.2px;top:137.35px;width:1029px;height:0.65px;background:#c6c6c6;"></div>
<div style="left:288.2px;top:137.2px;width:0.8px;height:552.4px;background:#c6c6c6;"></div>
<div style="left:288.2px;top:689.6px;width:1029px;height:0.8px;background:#fafafa;"></div>
<div style="left:1.2px;top:692.7px;width:136.3px;height:14.6px;background:#fff;border:0.7px solid #b4b4b4;box-sizing:border-box;border-radius:1.5px;"></div>
<svg style="left:6.5px;top:696px;" width="8" height="8" viewBox="0 0 8 8"><circle cx="3.2" cy="3.2" r="2.4" fill="none" stroke="#666" stroke-width="0.8"/><path d="M5 5l2.4 2.4" stroke="#666" stroke-width="0.9"/></svg>
<span class="t" id="t278" style="left:20.5px;top:700.4px;font-size:7.2px;font-weight:normal;font-style:normal;color:#6a6a6a;transform:translateY(-50%) scaleX(0.9762);">Type to locate (Ctrl+K)</span>
<span class="t" id="t279" style="left:143.5px;top:700.6px;font-size:8.2px;font-weight:normal;font-style:normal;color:#111;transform:translateY(-50%) scaleX(0.9402);">Identifying done.</span>
<span class="t" id="t280" style="left:763px;top:700.6px;font-size:8.2px;font-weight:normal;font-style:normal;color:#111;transform:translateY(-50%) scaleX(0.8986);">Coordinate</span>
<div style="left:802px;top:693.3px;width:79px;height:13.2px;background:#fff;border:0.7px solid #b4b4b4;box-sizing:border-box;border-radius:1.5px;"></div>
<span class="t" id="t282" style="left:806.5px;top:700.6px;font-size:8.2px;font-weight:normal;font-style:normal;color:#111;transform:translateY(-50%) scaleX(0.9286);">50.80226°, 4.77206°</span>
<svg style="left:884.0px;top:694.5px" width="11" height="11" viewBox="0 0 24 24"><path d="M4 5c3-3 8-3 10 0M3 9h3M14 3l3-2M17 7l3 .500" fill="none" stroke="#444" stroke-width="1.300"/><circle cx="13" cy="14" r="6" fill="none" stroke="#444" stroke-width="1.500"/><path d="M5 2l14 20" stroke="#444" stroke-width="1.400"/><path d="M10.500 14.500l2 2 3-4" fill="none" stroke="#444" stroke-width="1.200"/></svg>
<span class="t" id="t284" style="left:905px;top:700.2px;font-size:8.2px;font-weight:normal;font-style:normal;color:#111;transform:translateY(-50%) scaleX(0.7957);">Scale</span>
<div style="left:925px;top:693.3px;width:51.6px;height:13.2px;background:#fff;border:0.7px solid #b4b4b4;box-sizing:border-box;border-radius:1.5px;"></div>
<div style="left:963.6px;top:693.6px;width:0.7px;height:12.6px;background:#c4c4c4;"></div>
<span class="t" id="t287" style="left:927.8px;top:700.6px;font-size:8.2px;font-weight:normal;font-style:normal;color:#111;transform:translateY(-50%) scaleX(0.9063);">1:5138</span>
<svg style="left:967.6px;top:698.8px;" width="5" height="3.5" viewBox="0 0 5 3.5"><path d="M0.3 0.3h4.4L2.5 3.2z" fill="#666"/></svg>
<svg style="left:983.5px;top:694.3px" width="11" height="11" viewBox="0 0 24 24"><rect x="3.500" y="10.500" width="17" height="11.500" rx="1.500" fill="#8a8a8a"/><path d="M7 10.500v-3.500a5 5 0 0 1 10 0v3.500" fill="none" stroke="#8a8a8a" stroke-width="2.400"/><rect x="3.500" y="10.500" width="17" height="4" fill="#9c9c9c"/></svg>
<span class="t" id="t290" style="left:1000.6px;top:700.6px;font-size:8.2px;font-weight:normal;font-style:normal;color:#111;transform:translateY(-50%) scaleX(0.8757);">Magnifier</span>
<div style="left:1034px;top:693.3px;width:53.7px;height:13.2px;background:#fff;border:0.7px solid #b4b4b4;box-sizing:border-box;border-radius:1.5px;"></div>
<span class="t" id="t292" style="left:1037px;top:700.6px;font-size:8.2px;font-weight:normal;font-style:normal;color:#111;transform:translateY(-50%) scaleX(0.9068);">100%</span>
<svg style="left:1080.5px;top:695px;" width="5.6" height="10" viewBox="0 0 5.6 10"><path d="M0.6 3.9L2.8 1.2 5 3.9zM0.6 6.1L2.8 8.8 5 6.1z" fill="#333"/></svg>
<span class="t" id="t294" style="left:1095.4px;top:700.6px;font-size:8.2px;font-weight:normal;font-style:normal;color:#111;transform:translateY(-50%) scaleX(0.8918);">Rotation</span>
<div style="left:1129.8px;top:693.3px;width:54.5px;height:13.2px;background:#fff;border:0.7px solid #b4b4b4;box-sizing:border-box;border-radius:1.5px;"></div>
<span class="t" id="t296" style="left:1133px;top:700.6px;font-size:8.2px;font-weight:normal;font-style:normal;color:#111;transform:translateY(-50%) scaleX(0.9446);">0.0 °</span>
<svg style="left:1176.5px;top:695px;" width="5.6" height="10" viewBox="0 0 5.6 10"><path d="M0.6 3.9L2.8 1.2 5 3.9zM0.6 6.1L2.8 8.8 5 6.1z" fill="#333"/></svg>
<div style="left:1188.9px;top:695.6px;width:9.2px;height:9.2px;background:#fff;border:0.7px solid #b4b4b4;box-sizing:border-box;border-radius:1px;"></div>
<svg style="left:1190.1000000000001px;top:696.6px;" width="7" height="7" viewBox="0 0 7 7"><path d="M1 3.8l1.9 2.2L6 0.9" fill="none" stroke="#111" stroke-width="1.25" stroke-linecap="round" stroke-linejoin="round"/></svg>
<span class="t" id="t300" style="left:1201.8px;top:700.7px;font-size:8.2px;font-weight:normal;font-style:normal;color:#111;transform:translateY(-50%) scaleX(0.8712);">Render</span>
<svg style="left:1235.75px;top:694.95px" width="10.5" height="10.5" viewBox="0 0 24 24"><circle cx="12" cy="12" r="10" fill="#9a9a9a" stroke="#6f6f6f" stroke-width="1"/><path d="M12 2c-5 4-5 16 0 20M12 2c5 4 5 16 0 20M2 12h20M4 7h16M4 17h16M12 2v20" stroke="#e6e6e6" stroke-width="0.900" fill="none"/></svg>
<span class="t" id="t302" style="left:1248.6px;top:700.6px;font-size:8.2px;font-weight:normal;font-style:normal;color:#111;transform:translateY(-50%) scaleX(0.8416);">EPSG:4326</span>
<svg style="left:1301.8px;top:694.0px" width="12" height="12" viewBox="0 0 24 24"><ellipse cx="12" cy="10.500" rx="10.500" ry="8.200" fill="#6f6f6f"/><path d="M14 16l6.500 6-1-8z" fill="#6f6f6f"/></svg>
<div style="left:831px;top:173.2px;width:478.3px;height:278.8px;background:#f0f0f0;border:0.7px solid #c9c9c9;box-sizing:border-box;border-radius:2.5px;box-shadow:0 1.5px 5px rgba(0,0,0,0.35);"></div>
<span class="t" id="t305" style="left:836.5px;top:183.8px;font-size:8.4px;font-weight:normal;font-style:normal;color:#111;transform:translateY(-50%) scaleX(0.9622);">Identify Results</span>
<div style="left:1295px;top:177.6px;width:13px;height:13px;background:#c83c4a;border-radius:1px;"></div>
<svg style="left:1299px;top:181.6px;" width="5" height="6" viewBox="0 0 5 6"><path d="M1.100 1.200l2.800 3.200m0-3.200l-2.800 3.200" stroke="#fff" stroke-width="1.250"/></svg>
<svg style="left:836.65px;top:199.25px" width="10.5" height="10.5" viewBox="0 0 24 24"><rect x="2" y="2" width="20" height="20" rx="1.500" fill="#dbe8f7" stroke="#5d8fca" stroke-width="1.300"/><rect x="5" y="7" width="4.500" height="4" fill="#fff" stroke="#5d8fca" stroke-width="0.800"/><rect x="5" y="14" width="4.500" height="4" fill="#fff" stroke="#5d8fca" stroke-width="0.800"/><path d="M12 9h7M12 16h7" stroke="#fff" stroke-width="1.800"/></svg>
<svg style="left:858.25px;top:198.75px" width="11.5" height="11.5" viewBox="0 0 24 24"><rect x="2.500" y="2" width="17" height="18" fill="#f3f3f3" stroke="#8a8a8a" stroke-width="0.900" stroke-dasharray="2 1.200"/><rect x="3.500" y="5" width="3" height="3" fill="#f29a1f"/><rect x="3.500" y="15" width="3" height="3" fill="#f29a1f"/><path d="M10 3h6v9h3.500l-6.500 8-6.500-8h3.500z" fill="#3f78c4" stroke="#2c5288" stroke-width="0.700" transform="translate(1.500 1)"/></svg>
<svg style="left:875.95px;top:198.75px" width="11.5" height="11.5" viewBox="0 0 24 24"><rect x="2.500" y="3" width="17" height="18" fill="#f3f3f3" stroke="#8a8a8a" stroke-width="0.900" stroke-dasharray="2 1.200"/><rect x="3.500" y="8" width="3" height="3" fill="#f29a1f"/><rect x="3.500" y="16" width="3" height="3" fill="#f29a1f"/><path d="M10 20h6v-9h3.500l-6.500-8-6.500 8h3.500z" fill="#3f78c4" stroke="#2c5288" stroke-width="0.700" transform="translate(1.500 -1)"/></svg>
<svg style="left:892.85px;top:198.75px" width="11.5" height="11.5" viewBox="0 0 24 24"><path d="M3 20l2-7-4-4.500 6-.500 3-6 3 6 6 .500-4 4.500 1.500 7-6-3.500z" fill="#f7d23a" stroke="#c49a10" stroke-width="0.700" transform="scale(0.620) translate(1 0)"/><path d="M10 3h6v9h3.500l-6.500 8-6.500-8h3.500z" fill="#3f78c4" stroke="#2c5288" stroke-width="0.700" transform="translate(2.500 2)"/><rect x="7" y="15" width="3" height="3" fill="#f29a1f"/></svg>
<svg style="left:914.85px;top:198.75px" width="11.5" height="11.5" viewBox="0 0 24 24"><rect x="2" y="2" width="11" height="11" fill="#f7dc4a" stroke="#c8a415" stroke-width="0.900"/><rect x="6" y="6" width="11" height="11" fill="#f7dc4a" stroke="#c8a415" stroke-width="0.900"/><rect x="12.500" y="12.500" width="10" height="10" rx="2" fill="#dc2a34"/><circle cx="17.500" cy="17.500" r="3" fill="none" stroke="#fff" stroke-width="1.200"/><path d="M15.400 19.600l4.200-4.200" stroke="#fff" stroke-width="1.200"/></svg>
<svg style="left:936.15px;top:198.75px" width="11.5" height="11.5" viewBox="0 0 24 24"><path d="M8 2h9l3 3v13h-12z" fill="#e6e6e6" stroke="#c6c6c6" stroke-width="1"/><path d="M3.500 6h9l3 3v13h-12z" fill="#ededed" stroke="#c6c6c6" stroke-width="1"/><circle cx="9" cy="14" r="3" fill="none" stroke="#cfcfcf" stroke-width="1"/></svg>
<svg style="left:953.75px;top:198.75px" width="11.5" height="11.5" viewBox="0 0 24 24"><rect x="6" y="3" width="12" height="6" fill="#ececec" stroke="#d0d0d0" stroke-width="0.900"/><rect x="2" y="8" width="20" height="9" rx="2" fill="#d9d9d9" stroke="#cacaca" stroke-width="0.900"/><rect x="6" y="14" width="12" height="7" fill="#f2f2f2" stroke="#d0d0d0" stroke-width="0.900"/></svg>
<svg style="left:975.65px;top:198.75px" width="11.5" height="11.5" viewBox="0 0 24 24"><rect x="2" y="2" width="17" height="17" fill="#d8d8d8" stroke="#555" stroke-width="1" stroke-dasharray="2.200 1.400"/><circle cx="8.500" cy="8" r="5.500" fill="#5d8fca" stroke="#33609c" stroke-width="0.700"/><path d="M8.500 5v1.200M8.500 7.500v4" stroke="#fff" stroke-width="1.600"/><path d="M12 11l9.500 4.500-3.600 1.300 2.600 3.800-1.700 1.200-2.600-3.800-2.600 3z" fill="#fff" stroke="#333" stroke-width="0.900" stroke-linejoin="round"/></svg>
<svg style="left:1001.65px;top:198.75px" width="11.5" height="11.5" viewBox="0 0 24 24"><path d="M10 10L20.500 20.500" stroke="#4a3a12" stroke-width="4.600" stroke-linecap="round"/><path d="M10 10L20.500 20.500" stroke="#e8c55a" stroke-width="3" stroke-linecap="round"/><path d="M7.390 2.520A4.500 4.500 0 1 1 2.520 7.390" fill="none" stroke="#4a4a4a" stroke-width="4"/><path d="M7.390 2.520A4.500 4.500 0 1 1 2.520 7.390" fill="none" stroke="#e2e2e2" stroke-width="2.600"/></svg>
<svg style="left:1023.05px;top:198.75px" width="11.5" height="11.5" viewBox="0 0 24 24"><rect x="3" y="1.500" width="19" height="21" rx="1" fill="#5b86c2" stroke="#2b3f5c" stroke-width="1"/><rect x="3" y="1.500" width="5.500" height="21" fill="#2b3f5c"/><text x="15.500" y="17" font-family="Liberation Sans,sans-serif" font-size="13" text-anchor="middle" fill="#e9eef5">?</text></svg>
<div style="left:852.9000000000001px;top:200px;width:0.7px;height:9px;background:#dadada;"></div>
<div style="left:909.3000000000001px;top:200px;width:0.7px;height:9px;background:#dadada;"></div>
<div style="left:931.2px;top:200px;width:0.7px;height:9px;background:#dadada;"></div>
<div style="left:970.4000000000001px;top:200px;width:0.7px;height:9px;background:#dadada;"></div>
<div style="left:1018.5px;top:200px;width:0.7px;height:9px;background:#dadada;"></div>
<svg style="left:991.6px;top:203.6px;" width="5" height="3" viewBox="0 0 5 3"><path d="M0.2 0.2h4.4L2.4 2.8z" fill="#444"/></svg>
<div style="left:832.3px;top:215.6px;width:476.3px;height:190.6px;background:#fff;border:0.7px solid #b4b4b4;box-sizing:border-box;"></div>
<div style="left:833px;top:216.3px;width:474.9px;height:12.4px;background:#f6f6f6;background:linear-gradient(#fbfbfb,#ededed);border-bottom:0.7px solid #c6c6c6;"></div>
<div style="left:947px;top:216.3px;width:0.7px;height:12.4px;background:#c6c6c6;"></div>
<span class="t" id="t327" style="left:833.5px;top:223.5px;font-size:8.2px;font-weight:normal;font-style:normal;color:#111;transform:translateY(-50%) scaleX(0.9391);">Feature</span>
<span class="t" id="t328" style="left:949.5px;top:223.5px;font-size:8.2px;font-weight:normal;font-style:normal;color:#111;transform:translateY(-50%) scaleX(0.9339);">Value</span>
<svg style="left:833.1999999999999px;top:234.8px;" width="5.4" height="3.2" viewBox="0 0 5.4 3.2"><path d="M0 0h5.200L2.600 3z" fill="#444"/></svg>
<span class="t" id="t330" style="left:841.7px;top:236.5px;font-size:8.4px;font-weight:bold;font-style:normal;color:#000;transform:translateY(-50%) scaleX(0.8636);">SIGEC_LPIS_REFERENCE_PARCEL__2023</span>
<div style="left:833px;top:241.1px;width:474.9px;height:10.9px;background:#0078d7;"></div>
<svg style="left:841.6999999999999px;top:245.8px;" width="5.4" height="3.2" viewBox="0 0 5.4 3.2"><path d="M0 0h5.200L2.600 3z" fill="#444"/></svg>
<span class="t" id="t333" style="left:850.8px;top:247.5px;font-size:8.2px;font-weight:normal;font-style:normal;color:#fff;transform:translateY(-50%) scaleX(0.8895);">NAMESPACE</span>
<span class="t" id="t334" style="left:950.3px;top:247.5px;font-size:8.2px;font-weight:normal;font-style:normal;color:#fff;transform:translateY(-50%) scaleX(1.0155);">https://geodata.wallonie.be/id/lpis/referenceParcel</span>
<svg style="left:850.8px;top:255.8px;" width="3" height="5" viewBox="0 0 3 5"><path d="M0 0v5L2.600 2.500z" fill="#4a4a4a"/></svg>
<span class="t" id="t336" style="left:858.5px;top:258.5px;font-size:8.2px;font-weight:normal;font-style:normal;color:#111;transform:translateY(-50%) scaleX(0.9741);">(Derived)</span>
<div style="left:833px;top:263.3px;width:474.9px;height:11px;background:#e9e7e3;"></div>
<svg style="left:850.8px;top:266.8px;" width="3" height="5" viewBox="0 0 3 5"><path d="M0 0v5L2.600 2.500z" fill="#4a4a4a"/></svg>
<span class="t" id="t339" style="left:858.5px;top:269.5px;font-size:8.2px;font-weight:normal;font-style:normal;color:#111;transform:translateY(-50%) scaleX(0.9841);">(Actions)</span>
<span class="t" id="t340" style="left:858.5px;top:280.5px;font-size:8.2px;font-weight:normal;font-style:normal;color:#111;transform:translateY(-50%) scaleX(0.9412);">id</span>
<span class="t" id="t341" style="left:950.3px;top:280.5px;font-size:8.2px;font-weight:normal;font-style:normal;color:#111;transform:translateY(-50%) scaleX(0.9514);">103224</span>
<div style="left:833px;top:285.3px;width:474.9px;height:11px;background:#e9e7e3;"></div>
<span class="t" id="t343" style="left:858.5px;top:291.5px;font-size:8.2px;font-weight:normal;font-style:normal;color:#111;transform:translateY(-50%) scaleX(0.8988);">LOCALID</span>
<span class="t" id="t344" style="left:950.3px;top:291.5px;font-size:8.2px;font-weight:normal;font-style:normal;color:#111;transform:translateY(-50%) scaleX(0.9113);">C5951</span>
<span class="t" id="t345" style="left:858.5px;top:302.5px;font-size:8.2px;font-weight:normal;font-style:normal;color:#111;transform:translateY(-50%) scaleX(0.8859);">AGRIAREA</span>
<div class="c" style="left:948px;width:360.0px"><span class="t" id="t346" style="left:948px;top:302.5px;font-size:8.2px;font-weight:normal;font-style:normal;color:#0000ee;text-decoration:underline;transform:translateY(-50%) scaleX(1.0128);">http://geoservices.wallonie.be/geotraitement/spwdatadownload/get/MDUUID/BEWA.LPIS.Agricultural_areal__2023</span></div>
<div style="left:833px;top:307.3px;width:474.9px;height:11px;background:#e9e7e3;"></div>
<span class="t" id="t348" style="left:858.5px;top:313.5px;font-size:8.2px;font-weight:normal;font-style:normal;color:#111;transform:translateY(-50%) scaleX(0.9328);">VALIDFROM</span>
<span class="t" id="t349" style="left:950.3px;top:313.5px;font-size:8.2px;font-weight:normal;font-style:normal;color:#111;transform:translateY(-50%) scaleX(1.0026);">2023-01-01</span>
<span class="t" id="t350" style="left:858.5px;top:324.5px;font-size:8.2px;font-weight:normal;font-style:normal;color:#111;transform:translateY(-50%) scaleX(0.9335);">VALIDTO</span>
<span class="t" id="t351" style="left:950.3px;top:324.5px;font-size:8.2px;font-weight:normal;font-style:normal;color:#111;transform:translateY(-50%) scaleX(0.9313);">NULL</span>
<div style="left:833px;top:329.3px;width:474.9px;height:11px;background:#e9e7e3;"></div>
<span class="t" id="t353" style="left:858.5px;top:335.5px;font-size:8.2px;font-weight:normal;font-style:normal;color:#111;transform:translateY(-50%) scaleX(0.8649);">BEGINLIFE</span>
<span class="t" id="t354" style="left:950.3px;top:335.5px;font-size:8.2px;font-weight:normal;font-style:normal;color:#111;transform:translateY(-50%) scaleX(0.9776);">2023-07-18T15:40:36</span>
<span class="t" id="t355" style="left:858.5px;top:346.5px;font-size:8.2px;font-weight:normal;font-style:normal;color:#111;transform:translateY(-50%) scaleX(0.8821);">ENDLIFE</span>
<span class="t" id="t356" style="left:950.3px;top:346.5px;font-size:8.2px;font-weight:normal;font-style:normal;color:#111;transform:translateY(-50%) scaleX(0.9313);">NULL</span>
<div style="left:833px;top:351.3px;width:474.9px;height:11px;background:#e9e7e3;"></div>
<span class="t" id="t358" style="left:858.5px;top:357.5px;font-size:8.2px;font-weight:normal;font-style:normal;color:#111;transform:translateY(-50%) scaleX(0.9297);">CAMPAGNE</span>
<span class="t" id="t359" style="left:950.3px;top:357.5px;font-size:8.2px;font-weight:normal;font-style:normal;color:#111;transform:translateY(-50%) scaleX(0.9166);">2023</span>
<span class="t" id="t360" style="left:858.5px;top:368.5px;font-size:8.2px;font-weight:normal;font-style:normal;color:#111;transform:translateY(-50%) scaleX(0.8895);">NAMESPACE</span>
<div class="c" style="left:948px;width:360.0px"><span class="t" id="t361" style="left:948px;top:368.5px;font-size:8.2px;font-weight:normal;font-style:normal;color:#0000ee;text-decoration:underline;transform:translateY(-50%) scaleX(1.0155);">https://geodata.wallonie.be/id/lpis/referenceParcel</span></div>
<div style="left:833px;top:373.3px;width:474.9px;height:11px;background:#e9e7e3;"></div>
<span class="t" id="t363" style="left:858.5px;top:379.5px;font-size:8.2px;font-weight:normal;font-style:normal;color:#111;transform:translateY(-50%) scaleX(0.8880);">DATETRANS</span>
<span class="t" id="t364" style="left:950.3px;top:379.5px;font-size:8.2px;font-weight:normal;font-style:normal;color:#111;transform:translateY(-50%) scaleX(0.9703);">20250205154401.6753894</span>
<span class="t" id="t365" style="left:858.5px;top:390.5px;font-size:8.2px;font-weight:normal;font-style:normal;color:#111;transform:translateY(-50%) scaleX(0.8642);">OBJECTID</span>
<span class="t" id="t366" style="left:950.3px;top:390.5px;font-size:8.2px;font-weight:normal;font-style:normal;color:#111;transform:translateY(-50%) scaleX(0.9514);">103223</span>
<span class="t" id="t367" style="left:834.6px;top:418.8px;font-size:7.3px;font-weight:bold;font-style:normal;color:#111;transform:translateY(-50%) scaleX(0.8603);">Mode</span>
<div style="left:855.2px;top:409.4px;width:450.2px;height:16px;background:#fafafa;border:0.7px solid #b4b4b4;box-sizing:border-box;border-radius:2.2px;background:linear-gradient(#fdfdfd,#f0f0f0);"></div>
<span class="t" id="t369" style="left:858.8px;top:418.8px;font-size:7.5px;font-weight:normal;font-style:normal;color:#111;transform:translateY(-50%) scaleX(0.9293);">Top Down</span>
<svg style="left:1294.5px;top:416.6px;" width="5" height="3.5" viewBox="0 0 5 3.5"><path d="M0.300 0.300h4.400L2.500 3.200z" fill="#333"/></svg>
<span class="t" id="t371" style="left:834.5px;top:439.5px;font-size:7.5px;font-weight:normal;font-style:normal;color:#8c8c8c;transform:translateY(-50%) scaleX(0.8930);">View</span>
<div style="left:853.3px;top:431.6px;width:44.1px;height:15px;background:#f3f3f3;border:0.7px solid #c4c4c4;box-sizing:border-box;border-radius:2.2px;background:linear-gradient(#f8f8f8,#eeeeee);"></div>
<span class="t" id="t373" style="left:856.8px;top:439.5px;font-size:7.5px;font-weight:normal;font-style:normal;color:#8c8c8c;transform:translateY(-50%) scaleX(0.8907);">Tree</span>
<svg style="left:887.3px;top:437.8px;" width="5" height="3.5" viewBox="0 0 5 3.5"><path d="M0.300 0.300h4.400L2.500 3.200z" fill="#8f8f8f"/></svg>
</body></html>
